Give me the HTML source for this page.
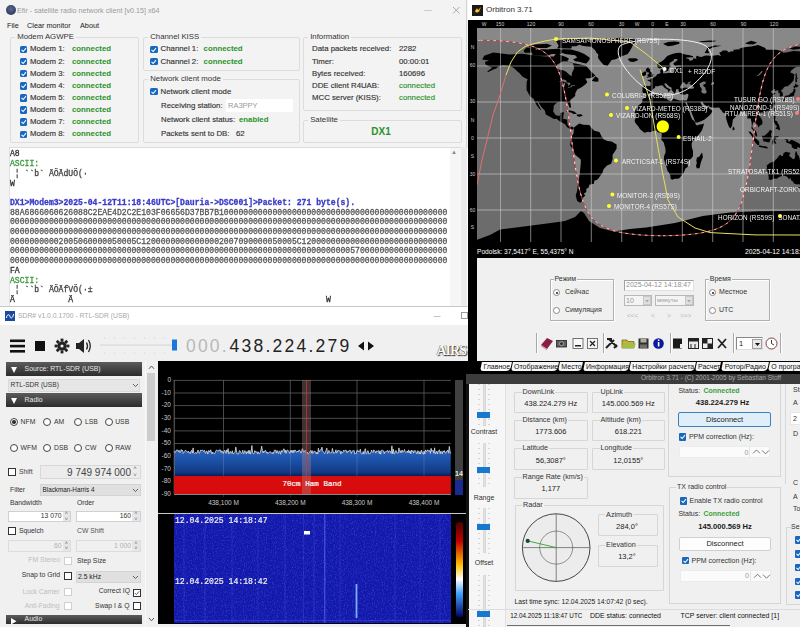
<!DOCTYPE html><html><head><meta charset="utf-8"><style>
html,body{margin:0;padding:0;}
body{width:800px;height:627px;overflow:hidden;position:relative;background:#f0f0f0;font-family:"Liberation Sans",sans-serif;}
body div{position:absolute;box-sizing:border-box;}
svg{position:absolute;}
.mono{font-family:"Liberation Mono",monospace;}
</style></head><body>
<div style="left:0px;top:0px;width:468px;height:306px;background:#f3f3f3;"></div>
<div style="left:466px;top:0px;width:1px;height:306px;background:#d4d4d4;"></div>
<div style="left:6px;top:5px;width:10px;height:10px;border-radius:50%;background:radial-gradient(circle at 50% 40%,#5a6a90,#1e2a4a);"></div>
<div style="left:17px;top:5.82px;font-size:7.2px;line-height:9.36px;color:#9a9a9a;white-space:pre;">Efir - satellite radio network client [v0.15] x64</div>
<div style="left:424px;top:4.8px;font-size:8px;line-height:10.4px;color:#aaa;white-space:pre;">—</div>
<svg style="left:451.75px;top:5.550000000000001px" width="8.5" height="8.5" viewBox="451.75 5.550000000000001 8.5 8.5"><path d="M452.75 6.550000000000001 L459.25 13.05 M459.25 6.550000000000001 L452.75 13.05" stroke="#a0a0a0" stroke-width="0.9"/></svg>
<div style="left:7px;top:20.75px;font-size:7.3px;line-height:9.49px;color:#222;white-space:pre;">File</div>
<div style="left:27px;top:20.75px;font-size:7.3px;line-height:9.49px;color:#222;white-space:pre;">Clear monitor</div>
<div style="left:80px;top:20.75px;font-size:7.3px;line-height:9.49px;color:#222;white-space:pre;">About</div>
<div style="left:10px;top:37px;width:129px;height:106px;border:1px solid #dcdcdc;border-radius:2px;"></div>
<div style="left:15px;top:31.93px;font-size:7.8px;line-height:10.14px;color:#333;white-space:pre;background:#f3f3f3;padding:0 0px;"> Modem AGWPE </div>
<div style="left:19.6px;top:45.75px;width:7.5px;height:7.5px;background:#1868c0;border-radius:1.5px;"><svg width="7.5" height="7.5" viewBox="0 0 10 10" style="left:0;top:0"><path d="M2 5.2 L4.2 7.3 L8 2.8" stroke="#fff" stroke-width="1.4" fill="none"/></svg></div>
<div style="left:30px;top:44.43px;font-size:7.8px;line-height:10.14px;color:#333;white-space:pre;-webkit-text-stroke:0.15px currentColor;">Modem 1:</div>
<div style="left:72px;top:44.43px;font-size:7.8px;line-height:10.14px;color:#2a922a;white-space:pre;font-weight:bold;">connected</div>
<div style="left:19.6px;top:57.87px;width:7.5px;height:7.5px;background:#1868c0;border-radius:1.5px;"><svg width="7.5" height="7.5" viewBox="0 0 10 10" style="left:0;top:0"><path d="M2 5.2 L4.2 7.3 L8 2.8" stroke="#fff" stroke-width="1.4" fill="none"/></svg></div>
<div style="left:30px;top:56.55px;font-size:7.8px;line-height:10.14px;color:#333;white-space:pre;-webkit-text-stroke:0.15px currentColor;">Modem 2:</div>
<div style="left:72px;top:56.55px;font-size:7.8px;line-height:10.14px;color:#2a922a;white-space:pre;font-weight:bold;">connected</div>
<div style="left:19.6px;top:69.99px;width:7.5px;height:7.5px;background:#1868c0;border-radius:1.5px;"><svg width="7.5" height="7.5" viewBox="0 0 10 10" style="left:0;top:0"><path d="M2 5.2 L4.2 7.3 L8 2.8" stroke="#fff" stroke-width="1.4" fill="none"/></svg></div>
<div style="left:30px;top:68.67px;font-size:7.8px;line-height:10.14px;color:#333;white-space:pre;-webkit-text-stroke:0.15px currentColor;">Modem 3:</div>
<div style="left:72px;top:68.67px;font-size:7.8px;line-height:10.14px;color:#2a922a;white-space:pre;font-weight:bold;">connected</div>
<div style="left:19.6px;top:82.11px;width:7.5px;height:7.5px;background:#1868c0;border-radius:1.5px;"><svg width="7.5" height="7.5" viewBox="0 0 10 10" style="left:0;top:0"><path d="M2 5.2 L4.2 7.3 L8 2.8" stroke="#fff" stroke-width="1.4" fill="none"/></svg></div>
<div style="left:30px;top:80.79px;font-size:7.8px;line-height:10.14px;color:#333;white-space:pre;-webkit-text-stroke:0.15px currentColor;">Modem 4:</div>
<div style="left:72px;top:80.79px;font-size:7.8px;line-height:10.14px;color:#2a922a;white-space:pre;font-weight:bold;">connected</div>
<div style="left:19.6px;top:94.22999999999999px;width:7.5px;height:7.5px;background:#1868c0;border-radius:1.5px;"><svg width="7.5" height="7.5" viewBox="0 0 10 10" style="left:0;top:0"><path d="M2 5.2 L4.2 7.3 L8 2.8" stroke="#fff" stroke-width="1.4" fill="none"/></svg></div>
<div style="left:30px;top:92.91px;font-size:7.8px;line-height:10.14px;color:#333;white-space:pre;-webkit-text-stroke:0.15px currentColor;">Modem 5:</div>
<div style="left:72px;top:92.91px;font-size:7.8px;line-height:10.14px;color:#2a922a;white-space:pre;font-weight:bold;">connected</div>
<div style="left:19.6px;top:106.35px;width:7.5px;height:7.5px;background:#1868c0;border-radius:1.5px;"><svg width="7.5" height="7.5" viewBox="0 0 10 10" style="left:0;top:0"><path d="M2 5.2 L4.2 7.3 L8 2.8" stroke="#fff" stroke-width="1.4" fill="none"/></svg></div>
<div style="left:30px;top:105.03px;font-size:7.8px;line-height:10.14px;color:#333;white-space:pre;-webkit-text-stroke:0.15px currentColor;">Modem 6:</div>
<div style="left:72px;top:105.03px;font-size:7.8px;line-height:10.14px;color:#2a922a;white-space:pre;font-weight:bold;">connected</div>
<div style="left:19.6px;top:118.47px;width:7.5px;height:7.5px;background:#1868c0;border-radius:1.5px;"><svg width="7.5" height="7.5" viewBox="0 0 10 10" style="left:0;top:0"><path d="M2 5.2 L4.2 7.3 L8 2.8" stroke="#fff" stroke-width="1.4" fill="none"/></svg></div>
<div style="left:30px;top:117.15px;font-size:7.8px;line-height:10.14px;color:#333;white-space:pre;-webkit-text-stroke:0.15px currentColor;">Modem 7:</div>
<div style="left:72px;top:117.15px;font-size:7.8px;line-height:10.14px;color:#2a922a;white-space:pre;font-weight:bold;">connected</div>
<div style="left:19.6px;top:130.58999999999997px;width:7.5px;height:7.5px;background:#1868c0;border-radius:1.5px;"><svg width="7.5" height="7.5" viewBox="0 0 10 10" style="left:0;top:0"><path d="M2 5.2 L4.2 7.3 L8 2.8" stroke="#fff" stroke-width="1.4" fill="none"/></svg></div>
<div style="left:30px;top:129.27px;font-size:7.8px;line-height:10.14px;color:#333;white-space:pre;-webkit-text-stroke:0.15px currentColor;">Modem 8:</div>
<div style="left:72px;top:129.27px;font-size:7.8px;line-height:10.14px;color:#2a922a;white-space:pre;font-weight:bold;">connected</div>
<div style="left:143px;top:37px;width:157px;height:34px;border:1px solid #dcdcdc;border-radius:2px;"></div>
<div style="left:148px;top:31.93px;font-size:7.8px;line-height:10.14px;color:#333;white-space:pre;background:#f3f3f3;padding:0 0px;"> Channel KISS </div>
<div style="left:150px;top:45.75px;width:7.5px;height:7.5px;background:#1868c0;border-radius:1.5px;"><svg width="7.5" height="7.5" viewBox="0 0 10 10" style="left:0;top:0"><path d="M2 5.2 L4.2 7.3 L8 2.8" stroke="#fff" stroke-width="1.4" fill="none"/></svg></div>
<div style="left:160.6px;top:44.43px;font-size:7.8px;line-height:10.14px;color:#333;white-space:pre;-webkit-text-stroke:0.15px currentColor;">Channel 1:</div>
<div style="left:203.6px;top:44.43px;font-size:7.8px;line-height:10.14px;color:#2a922a;white-space:pre;font-weight:bold;">connected</div>
<div style="left:150px;top:57.87px;width:7.5px;height:7.5px;background:#1868c0;border-radius:1.5px;"><svg width="7.5" height="7.5" viewBox="0 0 10 10" style="left:0;top:0"><path d="M2 5.2 L4.2 7.3 L8 2.8" stroke="#fff" stroke-width="1.4" fill="none"/></svg></div>
<div style="left:160.6px;top:56.55px;font-size:7.8px;line-height:10.14px;color:#333;white-space:pre;-webkit-text-stroke:0.15px currentColor;">Channel 2:</div>
<div style="left:203.6px;top:56.55px;font-size:7.8px;line-height:10.14px;color:#2a922a;white-space:pre;font-weight:bold;">connected</div>
<div style="left:143px;top:79px;width:157px;height:64px;border:1px solid #dcdcdc;border-radius:2px;"></div>
<div style="left:148px;top:73.93px;font-size:7.8px;line-height:10.14px;color:#333;white-space:pre;background:#f3f3f3;padding:0 0px;"> Network client mode </div>
<div style="left:150px;top:87.75px;width:7.5px;height:7.5px;background:#1868c0;border-radius:1.5px;"><svg width="7.5" height="7.5" viewBox="0 0 10 10" style="left:0;top:0"><path d="M2 5.2 L4.2 7.3 L8 2.8" stroke="#fff" stroke-width="1.4" fill="none"/></svg></div>
<div style="left:160.6px;top:86.93px;font-size:7.8px;line-height:10.14px;color:#333;white-space:pre;-webkit-text-stroke:0.15px currentColor;">Network client mode</div>
<div style="left:161px;top:100.93px;font-size:7.8px;line-height:10.14px;color:#333;white-space:pre;-webkit-text-stroke:0.15px currentColor;">Receiving station:</div>
<div style="left:226px;top:99px;width:67px;height:13px;background:#fff;"></div>
<div style="left:228px;top:101.12px;font-size:7.5px;line-height:9.75px;color:#999;white-space:pre;">RA3PPY</div>
<div style="left:161px;top:114.93px;font-size:7.8px;line-height:10.14px;color:#333;white-space:pre;-webkit-text-stroke:0.15px currentColor;">Network client status:</div>
<div style="left:239px;top:114.93px;font-size:7.8px;line-height:10.14px;color:#2a922a;white-space:pre;font-weight:bold;">enabled</div>
<div style="left:161px;top:128.93px;font-size:7.8px;line-height:10.14px;color:#333;white-space:pre;-webkit-text-stroke:0.15px currentColor;">Packets sent to DB:</div>
<div style="left:236px;top:128.93px;font-size:7.8px;line-height:10.14px;color:#333;white-space:pre;-webkit-text-stroke:0.15px currentColor;">62</div>
<div style="left:303px;top:37px;width:159px;height:74px;border:1px solid #dcdcdc;border-radius:2px;"></div>
<div style="left:308px;top:31.93px;font-size:7.8px;line-height:10.14px;color:#333;white-space:pre;background:#f3f3f3;padding:0 0px;"> Information </div>
<div style="left:312px;top:44.43px;font-size:7.8px;line-height:10.14px;color:#333;white-space:pre;-webkit-text-stroke:0.15px currentColor;">Data packets received:</div>
<div style="left:399px;top:44.43px;font-size:7.8px;line-height:10.14px;color:#333;white-space:pre;-webkit-text-stroke:0.15px currentColor;">2282</div>
<div style="left:312px;top:56.55px;font-size:7.8px;line-height:10.14px;color:#333;white-space:pre;-webkit-text-stroke:0.15px currentColor;">Timer:</div>
<div style="left:399px;top:56.55px;font-size:7.8px;line-height:10.14px;color:#333;white-space:pre;-webkit-text-stroke:0.15px currentColor;">00:00:01</div>
<div style="left:312px;top:68.67px;font-size:7.8px;line-height:10.14px;color:#333;white-space:pre;-webkit-text-stroke:0.15px currentColor;">Bytes received:</div>
<div style="left:399px;top:68.67px;font-size:7.8px;line-height:10.14px;color:#333;white-space:pre;-webkit-text-stroke:0.15px currentColor;">160696</div>
<div style="left:312px;top:80.79px;font-size:7.8px;line-height:10.14px;color:#333;white-space:pre;-webkit-text-stroke:0.15px currentColor;">DDE client R4UAB:</div>
<div style="left:399px;top:80.79px;font-size:7.8px;line-height:10.14px;color:#2a922a;white-space:pre;-webkit-text-stroke:0.15px currentColor;">connected</div>
<div style="left:312px;top:92.91px;font-size:7.8px;line-height:10.14px;color:#333;white-space:pre;-webkit-text-stroke:0.15px currentColor;">MCC server (KISS):</div>
<div style="left:399px;top:92.91px;font-size:7.8px;line-height:10.14px;color:#2a922a;white-space:pre;-webkit-text-stroke:0.15px currentColor;">connected</div>
<div style="left:303px;top:120px;width:159px;height:23px;border:1px solid #dcdcdc;border-radius:2px;"></div>
<div style="left:308px;top:114.93px;font-size:7.8px;line-height:10.14px;color:#333;white-space:pre;background:#f3f3f3;padding:0 0px;"> Satellite </div>
<div style="left:231px;width:300px;text-align:center;top:125.0px;font-size:10px;line-height:13.0px;color:#2a922a;white-space:pre;font-weight:bold;">DX1</div>
<div style="left:9px;top:147px;width:459px;height:159px;background:#ffffff;border-left:1px solid #e2e2e2;border-top:1px solid #dcdcdc;"></div>
<div style="left:450px;top:148px;width:10.5px;height:158px;background:#f6f6f6;"></div>
<div style="left:460.5px;top:147px;width:6.5px;height:159px;background:#ebebeb;"></div>
<div style="left:451px;top:148.6px;font-size:6px;line-height:7.8px;color:#888;white-space:pre;">▲</div>
<div style="left:10.4px;top:150.4px;font-size:8.3333px;line-height:9.6px;color:#333;white-space:pre;font-family:Liberation Mono,monospace;transform:scaleX(0.9725);transform-origin:0 50%;-webkit-text-stroke:0.3px currentColor;">A8</div>
<div style="left:10.4px;top:160.1px;font-size:8.3333px;line-height:9.6px;color:#3a9a3a;white-space:pre;font-family:Liberation Mono,monospace;transform:scaleX(0.9725);transform-origin:0 50%;-webkit-text-stroke:0.3px currentColor;">ASCII:</div>
<div style="left:10.4px;top:169.8px;font-size:8.3333px;line-height:9.6px;color:#444;white-space:pre;font-family:Liberation Mono,monospace;transform:scaleX(0.9725);transform-origin:0 50%;-webkit-text-stroke:0.3px currentColor;"> ¦ ``b` ÄÖÄdUÖ(·</div>
<div style="left:10.4px;top:179.5px;font-size:8.3333px;line-height:9.6px;color:#333;white-space:pre;font-family:Liberation Mono,monospace;transform:scaleX(0.9725);transform-origin:0 50%;-webkit-text-stroke:0.3px currentColor;">W</div>
<div style="left:10.4px;top:189.2px;font-size:8.3333px;line-height:9.6px;color:#333;white-space:pre;font-family:Liberation Mono,monospace;transform:scaleX(0.9725);transform-origin:0 50%;-webkit-text-stroke:0.3px currentColor;"></div>
<div style="left:10.4px;top:198.9px;font-size:8.3333px;line-height:9.6px;color:#3a3ac8;white-space:pre;font-weight:bold;font-family:Liberation Mono,monospace;transform:scaleX(0.9725);transform-origin:0 50%;-webkit-text-stroke:0.3px currentColor;">DX1&gt;Modem3&gt;2025-04-12T11:18:46UTC&gt;[Dauria-&gt;DSC001]&gt;Packet: 271 byte(s).</div>
<div style="left:10.4px;top:208.6px;font-size:8.3333px;line-height:9.6px;color:#555;white-space:pre;font-family:Liberation Mono,monospace;transform:scaleX(0.9725);transform-origin:0 50%;-webkit-text-stroke:0.3px currentColor;">88A6866060626088C2EAE4D2C2E103F06656D37BB7B10000000000000000000000000000000000000000000000</div>
<div style="left:10.4px;top:218.3px;font-size:8.3333px;line-height:9.6px;color:#555;white-space:pre;font-family:Liberation Mono,monospace;transform:scaleX(0.9725);transform-origin:0 50%;-webkit-text-stroke:0.3px currentColor;">000000000000000000000000000000000000000000000000000000000000000000000000000000000000000000</div>
<div style="left:10.4px;top:228.0px;font-size:8.3333px;line-height:9.6px;color:#555;white-space:pre;font-family:Liberation Mono,monospace;transform:scaleX(0.9725);transform-origin:0 50%;-webkit-text-stroke:0.3px currentColor;">000000000000000000000000000000000000000000000000000000000000000000000000000000000000000000</div>
<div style="left:10.4px;top:237.7px;font-size:8.3333px;line-height:9.6px;color:#555;white-space:pre;font-family:Liberation Mono,monospace;transform:scaleX(0.9725);transform-origin:0 50%;-webkit-text-stroke:0.3px currentColor;">00000000002005060000050005C12000000000000002007090000050005C120000000000000000000000000000</div>
<div style="left:10.4px;top:247.4px;font-size:8.3333px;line-height:9.6px;color:#555;white-space:pre;font-family:Liberation Mono,monospace;transform:scaleX(0.9725);transform-origin:0 50%;-webkit-text-stroke:0.3px currentColor;">000000000000000000000000000000000000000000000000000000000000000000000057000000000000000000</div>
<div style="left:10.4px;top:257.1px;font-size:8.3333px;line-height:9.6px;color:#555;white-space:pre;font-family:Liberation Mono,monospace;transform:scaleX(0.9725);transform-origin:0 50%;-webkit-text-stroke:0.3px currentColor;">000000000000000000000000000000000000000000000000000000000000000000000000000000000000000000</div>
<div style="left:10.4px;top:266.8px;font-size:8.3333px;line-height:9.6px;color:#333;white-space:pre;font-family:Liberation Mono,monospace;transform:scaleX(0.9725);transform-origin:0 50%;-webkit-text-stroke:0.3px currentColor;">FA</div>
<div style="left:10.4px;top:276.5px;font-size:8.3333px;line-height:9.6px;color:#3a9a3a;white-space:pre;font-family:Liberation Mono,monospace;transform:scaleX(0.9725);transform-origin:0 50%;-webkit-text-stroke:0.3px currentColor;">ASCII:</div>
<div style="left:10.4px;top:286.2px;font-size:8.3333px;line-height:9.6px;color:#444;white-space:pre;font-family:Liberation Mono,monospace;transform:scaleX(0.9725);transform-origin:0 50%;-webkit-text-stroke:0.3px currentColor;"> ¦ ``b` ÄÖÄfVÖ(·±</div>
<div style="left:10.4px;top:295.9px;font-size:8.3333px;line-height:9.6px;color:#333;white-space:pre;font-family:Liberation Mono,monospace;transform:scaleX(0.9725);transform-origin:0 50%;-webkit-text-stroke:0.3px currentColor;">Ä           Ä                                                    W</div>
<div style="left:468px;top:0px;width:332px;height:20px;background:#ffffff;"></div>
<svg style="left:472px;top:5px" width="11" height="11" viewBox="0 0 11 11"><rect width="11" height="11" fill="#1a1a1a"/><path d="M2 8 L5 3 L6 5 L9 2 L7 7 L4 6Z" fill="#f0a020"/><circle cx="5" cy="6" r="1.5" fill="#ffd040"/></svg>
<div style="left:486px;top:4.8px;font-size:8px;line-height:10.4px;color:#333;white-space:pre;">Orbitron 3.71</div>
<div style="left:468px;top:20px;width:332px;height:238px;background:#000;"></div>
<svg style="left:477px;top:28px" width="323" height="214" viewBox="0 0 323 214"><rect width="323" height="214" fill="#888888"/><path d="M367.4 2.0 L367.4 2.3 L367.4 2.6 L367.4 2.9 L367.4 3.2 L367.4 3.5 L367.4 3.8 L367.4 4.1 L367.4 4.4 L367.4 4.7 L367.4 5.0 L367.4 5.3 L367.4 5.6 L367.4 5.9 L367.4 6.2 L367.4 6.5 L367.4 6.8 L367.4 7.1 L367.4 7.4 L367.4 7.7 L367.4 8.0 L367.4 8.3 L367.4 8.6 L367.4 8.9 L367.4 9.2 L367.4 9.5 L367.4 9.8 L367.4 10.1 L367.4 10.4 L367.4 10.7 L367.4 11.0 L367.4 11.3 L367.4 11.6 L367.4 11.9 L367.4 12.2 L356.6 12.5 L349.9 12.8 L345.4 13.1 L341.8 13.4 L338.7 13.7 L336.1 14.0 L333.8 14.3 L331.7 14.6 L329.8 14.9 L328.0 15.2 L326.4 15.5 L324.9 15.8 L323.6 16.1 L322.3 16.4 L321.0 16.7 L319.9 17.0 L318.8 17.3 L317.8 17.6 L316.8 17.9 L315.9 18.2 L315.0 18.5 L314.2 18.8 L313.4 19.1 L312.6 19.4 L311.8 19.7 L311.1 20.0 L310.5 20.3 L309.8 20.6 L309.2 20.9 L308.6 21.2 L308.0 21.5 L307.4 21.8 L306.9 22.1 L306.4 22.4 L305.9 22.7 L305.4 23.0 L304.9 23.3 L304.4 23.6 L304.0 23.9 L303.6 24.2 L303.2 24.5 L302.7 24.8 L302.3 25.1 L302.0 25.4 L301.6 25.7 L301.2 26.0 L300.9 26.3 L300.5 26.6 L300.2 26.9 L299.9 27.2 L299.5 27.5 L299.2 27.8 L298.9 28.1 L298.6 28.4 L298.3 28.7 L298.1 29.0 L297.8 29.3 L297.5 29.6 L297.2 29.9 L297.0 30.2 L296.7 30.5 L296.5 30.8 L296.2 31.1 L296.0 31.4 L295.8 31.7 L295.5 32.0 L295.3 32.3 L295.1 32.6 L294.9 32.9 L294.7 33.2 L294.5 33.5 L294.3 33.8 L294.1 34.1 L293.9 34.4 L293.7 34.7 L293.5 35.0 L293.3 35.3 L293.1 35.6 L292.9 35.9 L292.8 36.2 L292.6 36.5 L292.4 36.8 L292.2 37.1 L292.1 37.4 L291.9 37.7 L291.8 38.0 L291.6 38.3 L291.4 38.6 L291.3 38.9 L291.1 39.2 L291.0 39.5 L290.8 39.8 L290.7 40.1 L290.6 40.4 L290.4 40.7 L290.3 41.0 L290.2 41.3 L290.0 41.6 L289.9 41.9 L289.8 42.2 L289.6 42.5 L289.5 42.8 L289.4 43.1 L289.3 43.4 L289.1 43.7 L289.0 44.0 L288.9 44.3 L288.8 44.6 L288.7 44.9 L288.5 45.2 L288.4 45.5 L288.3 45.8 L288.2 46.1 L288.1 46.4 L288.0 46.7 L287.9 47.0 L287.8 47.3 L287.7 47.6 L287.6 47.9 L287.5 48.2 L287.4 48.5 L287.3 48.8 L287.2 49.1 L287.1 49.4 L287.0 49.7 L286.9 50.0 L286.8 50.3 L286.7 50.6 L286.6 50.9 L286.5 51.2 L286.4 51.5 L286.4 51.8 L286.3 52.1 L286.2 52.4 L286.1 52.7 L286.0 53.0 L285.9 53.3 L285.8 53.6 L285.8 53.9 L285.7 54.2 L285.6 54.5 L285.5 54.8 L285.4 55.1 L285.4 55.4 L285.3 55.7 L285.2 56.0 L285.1 56.3 L285.0 56.6 L285.0 56.9 L284.9 57.2 L284.8 57.5 L284.7 57.8 L284.7 58.1 L284.6 58.4 L284.5 58.7 L284.5 59.0 L284.4 59.3 L284.3 59.6 L284.2 59.9 L284.2 60.2 L284.1 60.5 L284.0 60.8 L284.0 61.1 L283.9 61.4 L283.8 61.7 L283.8 62.0 L283.7 62.3 L283.6 62.6 L283.6 62.9 L283.5 63.2 L283.5 63.5 L283.4 63.8 L283.3 64.1 L283.3 64.4 L283.2 64.7 L283.1 65.0 L283.1 65.3 L283.0 65.6 L283.0 65.9 L282.9 66.2 L282.8 66.5 L282.8 66.8 L282.7 67.1 L282.7 67.4 L282.6 67.7 L282.5 68.0 L282.5 68.3 L282.4 68.6 L282.4 68.9 L282.3 69.2 L282.3 69.5 L282.2 69.8 L282.2 70.1 L282.1 70.4 L282.0 70.7 L282.0 71.0 L281.9 71.3 L281.9 71.6 L281.8 71.9 L281.8 72.2 L281.7 72.5 L281.7 72.8 L281.6 73.1 L281.6 73.4 L281.5 73.7 L281.5 74.0 L281.4 74.3 L281.4 74.6 L281.3 74.9 L281.3 75.2 L281.2 75.5 L281.2 75.8 L281.1 76.1 L281.1 76.4 L281.0 76.7 L281.0 77.0 L280.9 77.3 L280.9 77.6 L280.8 77.9 L280.8 78.2 L280.7 78.5 L280.7 78.8 L280.6 79.1 L280.6 79.4 L280.5 79.7 L280.5 80.0 L280.4 80.3 L280.4 80.6 L280.4 80.9 L280.3 81.2 L280.3 81.5 L280.2 81.8 L280.2 82.1 L280.1 82.4 L280.1 82.7 L280.0 83.0 L280.0 83.3 L279.9 83.6 L279.9 83.9 L279.9 84.2 L279.8 84.5 L279.8 84.8 L279.7 85.1 L279.7 85.4 L279.6 85.7 L279.6 86.0 L279.6 86.3 L279.5 86.6 L279.5 86.9 L279.4 87.2 L279.4 87.5 L279.3 87.8 L279.3 88.1 L279.3 88.4 L279.2 88.7 L279.2 89.0 L279.1 89.3 L279.1 89.6 L279.0 89.9 L279.0 90.2 L279.0 90.5 L278.9 90.8 L278.9 91.1 L278.8 91.4 L278.8 91.7 L278.8 92.0 L278.7 92.3 L278.7 92.6 L278.6 92.9 L278.6 93.2 L278.5 93.5 L278.5 93.8 L278.5 94.1 L278.4 94.4 L278.4 94.7 L278.3 95.0 L278.3 95.3 L278.3 95.6 L278.2 95.9 L278.2 96.2 L278.1 96.5 L278.1 96.8 L278.1 97.1 L278.0 97.4 L278.0 97.7 L277.9 98.0 L277.9 98.3 L277.9 98.6 L277.8 98.9 L277.8 99.2 L277.8 99.5 L277.7 99.8 L277.7 100.1 L277.6 100.4 L277.6 100.7 L277.6 101.0 L277.5 101.3 L277.5 101.6 L277.4 101.9 L277.4 102.2 L277.4 102.5 L277.3 102.8 L277.3 103.1 L277.2 103.4 L277.2 103.7 L277.2 104.0 L277.1 104.3 L277.1 104.6 L277.1 104.9 L277.0 105.2 L277.0 105.5 L276.9 105.8 L276.9 106.1 L276.9 106.4 L276.8 106.7 L276.8 107.0 L276.7 107.3 L276.7 107.6 L276.7 107.9 L276.6 108.2 L276.6 108.5 L276.6 108.8 L276.5 109.1 L276.5 109.4 L276.4 109.7 L276.4 110.0 L276.4 110.3 L276.3 110.6 L276.3 110.9 L276.3 111.2 L276.2 111.5 L276.2 111.8 L276.1 112.1 L276.1 112.4 L276.1 112.7 L276.0 113.0 L276.0 113.3 L275.9 113.6 L275.9 113.9 L275.9 114.2 L275.8 114.5 L275.8 114.8 L275.8 115.1 L275.7 115.4 L275.7 115.7 L275.6 116.0 L275.6 116.3 L275.6 116.6 L275.5 116.9 L275.5 117.2 L275.4 117.5 L275.4 117.8 L275.4 118.1 L275.3 118.4 L275.3 118.7 L275.2 119.0 L275.2 119.3 L275.2 119.6 L275.1 119.9 L275.1 120.2 L275.1 120.5 L275.0 120.8 L275.0 121.1 L274.9 121.4 L274.9 121.7 L274.9 122.0 L274.8 122.3 L274.8 122.6 L274.7 122.9 L274.7 123.2 L274.7 123.5 L274.6 123.8 L274.6 124.1 L274.5 124.4 L274.5 124.7 L274.5 125.0 L274.4 125.3 L274.4 125.6 L274.3 125.9 L274.3 126.2 L274.3 126.5 L274.2 126.8 L274.2 127.1 L274.1 127.4 L274.1 127.7 L274.1 128.0 L274.0 128.3 L274.0 128.6 L273.9 128.9 L273.9 129.2 L273.8 129.5 L273.8 129.8 L273.8 130.1 L273.7 130.4 L273.7 130.7 L273.6 131.0 L273.6 131.3 L273.6 131.6 L273.5 131.9 L273.5 132.2 L273.4 132.5 L273.4 132.8 L273.3 133.1 L273.3 133.4 L273.3 133.7 L273.2 134.0 L273.2 134.3 L273.1 134.6 L273.1 134.9 L273.0 135.2 L273.0 135.5 L273.0 135.8 L272.9 136.1 L272.9 136.4 L272.8 136.7 L272.8 137.0 L272.7 137.3 L272.7 137.6 L272.6 137.9 L272.6 138.2 L272.5 138.5 L272.5 138.8 L272.5 139.1 L272.4 139.4 L272.4 139.7 L272.3 140.0 L272.3 140.3 L272.2 140.6 L272.2 140.9 L272.1 141.2 L272.1 141.5 L272.0 141.8 L272.0 142.1 L271.9 142.4 L271.9 142.7 L271.8 143.0 L271.8 143.3 L271.7 143.6 L271.7 143.9 L271.6 144.2 L271.6 144.5 L271.5 144.8 L271.5 145.1 L271.4 145.4 L271.4 145.7 L271.3 146.0 L271.3 146.3 L271.2 146.6 L271.2 146.9 L271.1 147.2 L271.1 147.5 L271.0 147.8 L271.0 148.1 L270.9 148.4 L270.9 148.7 L270.8 149.0 L270.8 149.3 L270.7 149.6 L270.7 149.9 L270.6 150.2 L270.5 150.5 L270.5 150.8 L270.4 151.1 L270.4 151.4 L270.3 151.7 L270.3 152.0 L270.2 152.3 L270.1 152.6 L270.1 152.9 L270.0 153.2 L270.0 153.5 L269.9 153.8 L269.8 154.1 L269.8 154.4 L269.7 154.7 L269.7 155.0 L269.6 155.3 L269.5 155.6 L269.5 155.9 L269.4 156.2 L269.4 156.5 L269.3 156.8 L269.2 157.1 L269.2 157.4 L269.1 157.7 L269.0 158.0 L269.0 158.3 L268.9 158.6 L268.8 158.9 L268.8 159.2 L268.7 159.5 L268.6 159.8 L268.6 160.1 L268.5 160.4 L268.4 160.7 L268.3 161.0 L268.3 161.3 L268.2 161.6 L268.1 161.9 L268.1 162.2 L268.0 162.5 L267.9 162.8 L267.8 163.1 L267.8 163.4 L267.7 163.7 L267.6 164.0 L267.5 164.3 L267.5 164.6 L267.4 164.9 L267.3 165.2 L267.2 165.5 L267.1 165.8 L267.1 166.1 L267.0 166.4 L266.9 166.7 L266.8 167.0 L266.7 167.3 L266.6 167.6 L266.5 167.9 L266.5 168.2 L266.4 168.5 L266.3 168.8 L266.2 169.1 L266.1 169.4 L266.0 169.7 L265.9 170.0 L265.8 170.3 L265.7 170.6 L265.6 170.9 L265.5 171.2 L265.4 171.5 L265.3 171.8 L265.2 172.1 L265.1 172.4 L265.0 172.7 L264.9 173.0 L264.8 173.3 L264.7 173.6 L264.6 173.9 L264.5 174.2 L264.4 174.5 L264.3 174.8 L264.1 175.1 L264.0 175.4 L263.9 175.7 L263.8 176.0 L263.7 176.3 L263.6 176.6 L263.4 176.9 L263.3 177.2 L263.2 177.5 L263.0 177.8 L262.9 178.1 L262.8 178.4 L262.7 178.7 L262.5 179.0 L262.4 179.3 L262.2 179.6 L262.1 179.9 L262.0 180.2 L261.8 180.5 L261.7 180.8 L261.5 181.1 L261.4 181.4 L261.2 181.7 L261.1 182.0 L260.9 182.3 L260.7 182.6 L260.6 182.9 L260.4 183.2 L260.2 183.5 L260.1 183.8 L259.9 184.1 L259.7 184.4 L259.5 184.7 L259.3 185.0 L259.1 185.3 L258.9 185.6 L258.8 185.9 L258.6 186.2 L258.3 186.5 L258.1 186.8 L257.9 187.1 L257.7 187.4 L257.5 187.7 L257.3 188.0 L257.0 188.3 L256.8 188.6 L256.6 188.9 L256.3 189.2 L256.1 189.5 L255.8 189.8 L255.6 190.1 L255.3 190.4 L255.0 190.7 L254.8 191.0 L254.5 191.3 L254.2 191.6 L253.9 191.9 L253.6 192.2 L253.3 192.5 L252.9 192.8 L252.6 193.1 L252.3 193.4 L251.9 193.7 L251.6 194.0 L251.2 194.3 L250.8 194.6 L250.5 194.9 L250.1 195.2 L249.7 195.5 L249.2 195.8 L248.8 196.1 L248.4 196.4 L247.9 196.7 L247.4 197.0 L246.9 197.3 L246.4 197.6 L245.9 197.9 L245.4 198.2 L244.8 198.5 L244.2 198.8 L243.6 199.1 L243.0 199.4 L242.3 199.7 L241.7 200.0 L241.0 200.3 L240.2 200.6 L239.5 200.9 L238.7 201.2 L237.8 201.5 L236.9 201.8 L236.0 202.1 L235.0 202.4 L234.0 202.7 L232.9 203.0 L231.8 203.3 L230.5 203.6 L229.2 203.9 L227.9 204.2 L226.4 204.5 L224.8 204.8 L223.0 205.1 L221.1 205.4 L219.0 205.7 L216.7 206.0 L214.1 206.3 L211.0 206.6 L207.4 206.9 L202.9 207.2 L196.2 207.5 L185.4 207.8 L185.4 208.1 L185.4 208.4 L185.4 208.7 L185.4 209.0 L185.4 209.3 L185.4 209.6 L185.4 209.9 L185.4 210.2 L185.4 210.5 L185.4 210.8 L185.4 211.1 L185.4 211.4 L185.4 211.7 L185.4 212.0 L185.4 212.3 L185.4 212.6 L185.4 212.9 L185.4 213.2 L185.4 213.5 L185.4 213.8 L185.4 214.1 L185.4 214.4 L185.4 214.7 L185.4 215.0 L185.4 215.3 L185.4 215.6 L185.4 215.9 L185.4 216.2 L185.4 216.5 L185.4 216.8 L185.4 217.1 L185.4 217.4 L185.4 217.7 L185.4 218.0 L549.4 218.0 L549.4 217.7 L549.4 217.4 L549.4 217.1 L549.4 216.8 L549.4 216.5 L549.4 216.2 L549.4 215.9 L549.4 215.6 L549.4 215.3 L549.4 215.0 L549.4 214.7 L549.4 214.4 L549.4 214.1 L549.4 213.8 L549.4 213.5 L549.4 213.2 L549.4 212.9 L549.4 212.6 L549.4 212.3 L549.4 212.0 L549.4 211.7 L549.4 211.4 L549.4 211.1 L549.4 210.8 L549.4 210.5 L549.4 210.2 L549.4 209.9 L549.4 209.6 L549.4 209.3 L549.4 209.0 L549.4 208.7 L549.4 208.4 L549.4 208.1 L549.4 207.8 L538.5 207.5 L531.9 207.2 L527.4 206.9 L523.7 206.6 L520.7 206.3 L518.1 206.0 L515.8 205.7 L513.7 205.4 L511.8 205.1 L510.0 204.8 L508.4 204.5 L506.9 204.2 L505.5 203.9 L504.2 203.6 L503.0 203.3 L501.9 203.0 L500.8 202.7 L499.8 202.4 L498.8 202.1 L497.9 201.8 L497.0 201.5 L496.1 201.2 L495.3 200.9 L494.6 200.6 L493.8 200.3 L493.1 200.0 L492.4 199.7 L491.8 199.4 L491.2 199.1 L490.6 198.8 L490.0 198.5 L489.4 198.2 L488.9 197.9 L488.4 197.6 L487.9 197.3 L487.4 197.0 L486.9 196.7 L486.4 196.4 L486.0 196.1 L485.6 195.8 L485.1 195.5 L484.7 195.2 L484.3 194.9 L483.9 194.6 L483.6 194.3 L483.2 194.0 L482.9 193.7 L482.5 193.4 L482.2 193.1 L481.8 192.8 L481.5 192.5 L481.2 192.2 L480.9 191.9 L480.6 191.6 L480.3 191.3 L480.0 191.0 L479.8 190.7 L479.5 190.4 L479.2 190.1 L479.0 189.8 L478.7 189.5 L478.5 189.2 L478.2 188.9 L478.0 188.6 L477.7 188.3 L477.5 188.0 L477.3 187.7 L477.1 187.4 L476.9 187.1 L476.6 186.8 L476.4 186.5 L476.2 186.2 L476.0 185.9 L475.8 185.6 L475.6 185.3 L475.5 185.0 L475.3 184.7 L475.1 184.4 L474.9 184.1 L474.7 183.8 L474.6 183.5 L474.4 183.2 L474.2 182.9 L474.1 182.6 L473.9 182.3 L473.7 182.0 L473.6 181.7 L473.4 181.4 L473.3 181.1 L473.1 180.8 L473.0 180.5 L472.8 180.2 L472.7 179.9 L472.5 179.6 L472.4 179.3 L472.3 179.0 L472.1 178.7 L472.0 178.4 L471.9 178.1 L471.7 177.8 L471.6 177.5 L471.5 177.2 L471.4 176.9 L471.2 176.6 L471.1 176.3 L471.0 176.0 L470.9 175.7 L470.8 175.4 L470.6 175.1 L470.5 174.8 L470.4 174.5 L470.3 174.2 L470.2 173.9 L470.1 173.6 L470.0 173.3 L469.9 173.0 L469.8 172.7 L469.7 172.4 L469.6 172.1 L469.5 171.8 L469.4 171.5 L469.3 171.2 L469.2 170.9 L469.1 170.6 L469.0 170.3 L468.9 170.0 L468.8 169.7 L468.7 169.4 L468.6 169.1 L468.5 168.8 L468.4 168.5 L468.3 168.2 L468.2 167.9 L468.2 167.6 L468.1 167.3 L468.0 167.0 L467.9 166.7 L467.8 166.4 L467.7 166.1 L467.7 165.8 L467.6 165.5 L467.5 165.2 L467.4 164.9 L467.3 164.6 L467.3 164.3 L467.2 164.0 L467.1 163.7 L467.0 163.4 L466.9 163.1 L466.9 162.8 L466.8 162.5 L466.7 162.2 L466.7 161.9 L466.6 161.6 L466.5 161.3 L466.4 161.0 L466.4 160.7 L466.3 160.4 L466.2 160.1 L466.2 159.8 L466.1 159.5 L466.0 159.2 L466.0 158.9 L465.9 158.6 L465.8 158.3 L465.8 158.0 L465.7 157.7 L465.6 157.4 L465.6 157.1 L465.5 156.8 L465.4 156.5 L465.4 156.2 L465.3 155.9 L465.2 155.6 L465.2 155.3 L465.1 155.0 L465.1 154.7 L465.0 154.4 L464.9 154.1 L464.9 153.8 L464.8 153.5 L464.8 153.2 L464.7 152.9 L464.6 152.6 L464.6 152.3 L464.5 152.0 L464.5 151.7 L464.4 151.4 L464.4 151.1 L464.3 150.8 L464.2 150.5 L464.2 150.2 L464.1 149.9 L464.1 149.6 L464.0 149.3 L464.0 149.0 L463.9 148.7 L463.9 148.4 L463.8 148.1 L463.8 147.8 L463.7 147.5 L463.7 147.2 L463.6 146.9 L463.6 146.6 L463.5 146.3 L463.4 146.0 L463.4 145.7 L463.3 145.4 L463.3 145.1 L463.2 144.8 L463.2 144.5 L463.1 144.2 L463.1 143.9 L463.0 143.6 L463.0 143.3 L462.9 143.0 L462.9 142.7 L462.9 142.4 L462.8 142.1 L462.8 141.8 L462.7 141.5 L462.7 141.2 L462.6 140.9 L462.6 140.6 L462.5 140.3 L462.5 140.0 L462.4 139.7 L462.4 139.4 L462.3 139.1 L462.3 138.8 L462.2 138.5 L462.2 138.2 L462.1 137.9 L462.1 137.6 L462.1 137.3 L462.0 137.0 L462.0 136.7 L461.9 136.4 L461.9 136.1 L461.8 135.8 L461.8 135.5 L461.7 135.2 L461.7 134.9 L461.7 134.6 L461.6 134.3 L461.6 134.0 L461.5 133.7 L461.5 133.4 L461.4 133.1 L461.4 132.8 L461.4 132.5 L461.3 132.2 L461.3 131.9 L461.2 131.6 L461.2 131.3 L461.1 131.0 L461.1 130.7 L461.1 130.4 L461.0 130.1 L461.0 129.8 L460.9 129.5 L460.9 129.2 L460.9 128.9 L460.8 128.6 L460.8 128.3 L460.7 128.0 L460.7 127.7 L460.6 127.4 L460.6 127.1 L460.6 126.8 L460.5 126.5 L460.5 126.2 L460.4 125.9 L460.4 125.6 L460.4 125.3 L460.3 125.0 L460.3 124.7 L460.2 124.4 L460.2 124.1 L460.2 123.8 L460.1 123.5 L460.1 123.2 L460.0 122.9 L460.0 122.6 L460.0 122.3 L459.9 122.0 L459.9 121.7 L459.8 121.4 L459.8 121.1 L459.8 120.8 L459.7 120.5 L459.7 120.2 L459.7 119.9 L459.6 119.6 L459.6 119.3 L459.5 119.0 L459.5 118.7 L459.5 118.4 L459.4 118.1 L459.4 117.8 L459.3 117.5 L459.3 117.2 L459.3 116.9 L459.2 116.6 L459.2 116.3 L459.1 116.0 L459.1 115.7 L459.1 115.4 L459.0 115.1 L459.0 114.8 L459.0 114.5 L458.9 114.2 L458.9 113.9 L458.8 113.6 L458.8 113.3 L458.8 113.0 L458.7 112.7 L458.7 112.4 L458.7 112.1 L458.6 111.8 L458.6 111.5 L458.5 111.2 L458.5 110.9 L458.5 110.6 L458.4 110.3 L458.4 110.0 L458.3 109.7 L458.3 109.4 L458.3 109.1 L458.2 108.8 L458.2 108.5 L458.2 108.2 L458.1 107.9 L458.1 107.6 L458.0 107.3 L458.0 107.0 L458.0 106.7 L457.9 106.4 L457.9 106.1 L457.8 105.8 L457.8 105.5 L457.8 105.2 L457.7 104.9 L457.7 104.6 L457.7 104.3 L457.6 104.0 L457.6 103.7 L457.5 103.4 L457.5 103.1 L457.5 102.8 L457.4 102.5 L457.4 102.2 L457.3 101.9 L457.3 101.6 L457.3 101.3 L457.2 101.0 L457.2 100.7 L457.2 100.4 L457.1 100.1 L457.1 99.8 L457.0 99.5 L457.0 99.2 L457.0 98.9 L456.9 98.6 L456.9 98.3 L456.8 98.0 L456.8 97.7 L456.8 97.4 L456.7 97.1 L456.7 96.8 L456.6 96.5 L456.6 96.2 L456.6 95.9 L456.5 95.6 L456.5 95.3 L456.4 95.0 L456.4 94.7 L456.4 94.4 L456.3 94.1 L456.3 93.8 L456.2 93.5 L456.2 93.2 L456.2 92.9 L456.1 92.6 L456.1 92.3 L456.0 92.0 L456.0 91.7 L456.0 91.4 L455.9 91.1 L455.9 90.8 L455.8 90.5 L455.8 90.2 L455.7 89.9 L455.7 89.6 L455.7 89.3 L455.6 89.0 L455.6 88.7 L455.5 88.4 L455.5 88.1 L455.5 87.8 L455.4 87.5 L455.4 87.2 L455.3 86.9 L455.3 86.6 L455.2 86.3 L455.2 86.0 L455.1 85.7 L455.1 85.4 L455.1 85.1 L455.0 84.8 L455.0 84.5 L454.9 84.2 L454.9 83.9 L454.8 83.6 L454.8 83.3 L454.8 83.0 L454.7 82.7 L454.7 82.4 L454.6 82.1 L454.6 81.8 L454.5 81.5 L454.5 81.2 L454.4 80.9 L454.4 80.6 L454.3 80.3 L454.3 80.0 L454.2 79.7 L454.2 79.4 L454.2 79.1 L454.1 78.8 L454.1 78.5 L454.0 78.2 L454.0 77.9 L453.9 77.6 L453.9 77.3 L453.8 77.0 L453.8 76.7 L453.7 76.4 L453.7 76.1 L453.6 75.8 L453.6 75.5 L453.5 75.2 L453.5 74.9 L453.4 74.6 L453.4 74.3 L453.3 74.0 L453.3 73.7 L453.2 73.4 L453.2 73.1 L453.1 72.8 L453.1 72.5 L453.0 72.2 L453.0 71.9 L452.9 71.6 L452.8 71.3 L452.8 71.0 L452.7 70.7 L452.7 70.4 L452.6 70.1 L452.6 69.8 L452.5 69.5 L452.5 69.2 L452.4 68.9 L452.4 68.6 L452.3 68.3 L452.2 68.0 L452.2 67.7 L452.1 67.4 L452.1 67.1 L452.0 66.8 L451.9 66.5 L451.9 66.2 L451.8 65.9 L451.8 65.6 L451.7 65.3 L451.6 65.0 L451.6 64.7 L451.5 64.4 L451.5 64.1 L451.4 63.8 L451.3 63.5 L451.3 63.2 L451.2 62.9 L451.1 62.6 L451.1 62.3 L451.0 62.0 L450.9 61.7 L450.9 61.4 L450.8 61.1 L450.7 60.8 L450.7 60.5 L450.6 60.2 L450.5 59.9 L450.5 59.6 L450.4 59.3 L450.3 59.0 L450.3 58.7 L450.2 58.4 L450.1 58.1 L450.0 57.8 L450.0 57.5 L449.9 57.2 L449.8 56.9 L449.7 56.6 L449.7 56.3 L449.6 56.0 L449.5 55.7 L449.4 55.4 L449.4 55.1 L449.3 54.8 L449.2 54.5 L449.1 54.2 L449.0 53.9 L448.9 53.6 L448.9 53.3 L448.8 53.0 L448.7 52.7 L448.6 52.4 L448.5 52.1 L448.4 51.8 L448.3 51.5 L448.3 51.2 L448.2 50.9 L448.1 50.6 L448.0 50.3 L447.9 50.0 L447.8 49.7 L447.7 49.4 L447.6 49.1 L447.5 48.8 L447.4 48.5 L447.3 48.2 L447.2 47.9 L447.1 47.6 L447.0 47.3 L446.9 47.0 L446.8 46.7 L446.7 46.4 L446.6 46.1 L446.5 45.8 L446.3 45.5 L446.2 45.2 L446.1 44.9 L446.0 44.6 L445.9 44.3 L445.8 44.0 L445.7 43.7 L445.5 43.4 L445.4 43.1 L445.3 42.8 L445.2 42.5 L445.0 42.2 L444.9 41.9 L444.8 41.6 L444.6 41.3 L444.5 41.0 L444.4 40.7 L444.2 40.4 L444.1 40.1 L443.9 39.8 L443.8 39.5 L443.6 39.2 L443.5 38.9 L443.3 38.6 L443.2 38.3 L443.0 38.0 L442.9 37.7 L442.7 37.4 L442.5 37.1 L442.4 36.8 L442.2 36.5 L442.0 36.2 L441.9 35.9 L441.7 35.6 L441.5 35.3 L441.3 35.0 L441.1 34.7 L440.9 34.4 L440.7 34.1 L440.5 33.8 L440.3 33.5 L440.1 33.2 L439.9 32.9 L439.7 32.6 L439.5 32.3 L439.3 32.0 L439.0 31.7 L438.8 31.4 L438.6 31.1 L438.3 30.8 L438.1 30.5 L437.8 30.2 L437.5 29.9 L437.3 29.6 L437.0 29.3 L436.7 29.0 L436.4 28.7 L436.2 28.4 L435.9 28.1 L435.6 27.8 L435.2 27.5 L434.9 27.2 L434.6 26.9 L434.3 26.6 L433.9 26.3 L433.6 26.0 L433.2 25.7 L432.8 25.4 L432.4 25.1 L432.0 24.8 L431.6 24.5 L431.2 24.2 L430.8 23.9 L430.3 23.6 L429.9 23.3 L429.4 23.0 L428.9 22.7 L428.4 22.4 L427.9 22.1 L427.3 21.8 L426.8 21.5 L426.2 21.2 L425.6 20.9 L425.0 20.6 L424.3 20.3 L423.6 20.0 L422.9 19.7 L422.2 19.4 L421.4 19.1 L420.6 18.8 L419.8 18.5 L418.9 18.2 L418.0 17.9 L417.0 17.6 L416.0 17.3 L414.9 17.0 L413.7 16.7 L412.5 16.4 L411.2 16.1 L409.8 15.8 L408.3 15.5 L406.7 15.2 L405.0 14.9 L403.1 14.6 L401.0 14.3 L398.7 14.0 L396.0 13.7 L393.0 13.4 L389.4 13.1 L384.9 12.8 L378.2 12.5 L367.4 12.2 L367.4 11.9 L367.4 11.6 L367.4 11.3 L367.4 11.0 L367.4 10.7 L367.4 10.4 L367.4 10.1 L367.4 9.8 L367.4 9.5 L367.4 9.2 L367.4 8.9 L367.4 8.6 L367.4 8.3 L367.4 8.0 L367.4 7.7 L367.4 7.4 L367.4 7.1 L367.4 6.8 L367.4 6.5 L367.4 6.2 L367.4 5.9 L367.4 5.6 L367.4 5.3 L367.4 5.0 L367.4 4.7 L367.4 4.4 L367.4 4.1 L367.4 3.8 L367.4 3.5 L367.4 3.2 L367.4 2.9 L367.4 2.6 L367.4 2.3 L367.4 2.0Z" fill="#000" fill-opacity="0.2"/><path d="M3.4 2.0 L3.4 2.3 L3.4 2.6 L3.4 2.9 L3.4 3.2 L3.4 3.5 L3.4 3.8 L3.4 4.1 L3.4 4.4 L3.4 4.7 L3.4 5.0 L3.4 5.3 L3.4 5.6 L3.4 5.9 L3.4 6.2 L3.4 6.5 L3.4 6.8 L3.4 7.1 L3.4 7.4 L3.4 7.7 L3.4 8.0 L3.4 8.3 L3.4 8.6 L3.4 8.9 L3.4 9.2 L3.4 9.5 L3.4 9.8 L3.4 10.1 L3.4 10.4 L3.4 10.7 L3.4 11.0 L3.4 11.3 L3.4 11.6 L3.4 11.9 L3.4 12.2 L-7.4 12.5 L-14.0 12.8 L-18.6 13.1 L-22.2 13.4 L-25.2 13.7 L-27.8 14.0 L-30.2 14.3 L-32.3 14.6 L-34.2 14.9 L-35.9 15.2 L-37.5 15.5 L-39.0 15.8 L-40.4 16.1 L-41.7 16.4 L-42.9 16.7 L-44.1 17.0 L-45.2 17.3 L-46.2 17.6 L-47.2 17.9 L-48.1 18.2 L-49.0 18.5 L-49.8 18.8 L-50.6 19.1 L-51.4 19.4 L-52.1 19.7 L-52.8 20.0 L-53.5 20.3 L-54.1 20.6 L-54.8 20.9 L-55.4 21.2 L-56.0 21.5 L-56.5 21.8 L-57.1 22.1 L-57.6 22.4 L-58.1 22.7 L-58.6 23.0 L-59.1 23.3 L-59.5 23.6 L-60.0 23.9 L-60.4 24.2 L-60.8 24.5 L-61.2 24.8 L-61.6 25.1 L-62.0 25.4 L-62.4 25.7 L-62.7 26.0 L-63.1 26.3 L-63.4 26.6 L-63.8 26.9 L-64.1 27.2 L-64.4 27.5 L-64.7 27.8 L-65.0 28.1 L-65.3 28.4 L-65.6 28.7 L-65.9 29.0 L-66.2 29.3 L-66.5 29.6 L-66.7 29.9 L-67.0 30.2 L-67.2 30.5 L-67.5 30.8 L-67.7 31.1 L-68.0 31.4 L-68.2 31.7 L-68.4 32.0 L-68.6 32.3 L-68.9 32.6 L-69.1 32.9 L-69.3 33.2 L-69.5 33.5 L-69.7 33.8 L-69.9 34.1 L-70.1 34.4 L-70.3 34.7 L-70.5 35.0 L-70.7 35.3 L-70.8 35.6 L-71.0 35.9 L-71.2 36.2 L-71.4 36.5 L-71.5 36.8 L-71.7 37.1 L-71.9 37.4 L-72.0 37.7 L-72.2 38.0 L-72.4 38.3 L-72.5 38.6 L-72.7 38.9 L-72.8 39.2 L-73.0 39.5 L-73.1 39.8 L-73.3 40.1 L-73.4 40.4 L-73.5 40.7 L-73.7 41.0 L-73.8 41.3 L-73.9 41.6 L-74.1 41.9 L-74.2 42.2 L-74.3 42.5 L-74.5 42.8 L-74.6 43.1 L-74.7 43.4 L-74.8 43.7 L-74.9 44.0 L-75.1 44.3 L-75.2 44.6 L-75.3 44.9 L-75.4 45.2 L-75.5 45.5 L-75.6 45.8 L-75.7 46.1 L-75.9 46.4 L-76.0 46.7 L-76.1 47.0 L-76.2 47.3 L-76.3 47.6 L-76.4 47.9 L-76.5 48.2 L-76.6 48.5 L-76.7 48.8 L-76.8 49.1 L-76.9 49.4 L-77.0 49.7 L-77.1 50.0 L-77.2 50.3 L-77.2 50.6 L-77.3 50.9 L-77.4 51.2 L-77.5 51.5 L-77.6 51.8 L-77.7 52.1 L-77.8 52.4 L-77.9 52.7 L-78.0 53.0 L-78.0 53.3 L-78.1 53.6 L-78.2 53.9 L-78.3 54.2 L-78.4 54.5 L-78.4 54.8 L-78.5 55.1 L-78.6 55.4 L-78.7 55.7 L-78.8 56.0 L-78.8 56.3 L-78.9 56.6 L-79.0 56.9 L-79.1 57.2 L-79.1 57.5 L-79.2 57.8 L-79.3 58.1 L-79.4 58.4 L-79.4 58.7 L-79.5 59.0 L-79.6 59.3 L-79.6 59.6 L-79.7 59.9 L-79.8 60.2 L-79.9 60.5 L-79.9 60.8 L-80.0 61.1 L-80.1 61.4 L-80.1 61.7 L-80.2 62.0 L-80.3 62.3 L-80.3 62.6 L-80.4 62.9 L-80.4 63.2 L-80.5 63.5 L-80.6 63.8 L-80.6 64.1 L-80.7 64.4 L-80.8 64.7 L-80.8 65.0 L-80.9 65.3 L-80.9 65.6 L-81.0 65.9 L-81.1 66.2 L-81.1 66.5 L-81.2 66.8 L-81.2 67.1 L-81.3 67.4 L-81.4 67.7 L-81.4 68.0 L-81.5 68.3 L-81.5 68.6 L-81.6 68.9 L-81.6 69.2 L-81.7 69.5 L-81.7 69.8 L-81.8 70.1 L-81.9 70.4 L-81.9 70.7 L-82.0 71.0 L-82.0 71.3 L-82.1 71.6 L-82.1 71.9 L-82.2 72.2 L-82.2 72.5 L-82.3 72.8 L-82.3 73.1 L-82.4 73.4 L-82.4 73.7 L-82.5 74.0 L-82.5 74.3 L-82.6 74.6 L-82.6 74.9 L-82.7 75.2 L-82.7 75.5 L-82.8 75.8 L-82.8 76.1 L-82.9 76.4 L-82.9 76.7 L-83.0 77.0 L-83.0 77.3 L-83.1 77.6 L-83.1 77.9 L-83.2 78.2 L-83.2 78.5 L-83.3 78.8 L-83.3 79.1 L-83.4 79.4 L-83.4 79.7 L-83.5 80.0 L-83.5 80.3 L-83.6 80.6 L-83.6 80.9 L-83.7 81.2 L-83.7 81.5 L-83.7 81.8 L-83.8 82.1 L-83.8 82.4 L-83.9 82.7 L-83.9 83.0 L-84.0 83.3 L-84.0 83.6 L-84.1 83.9 L-84.1 84.2 L-84.1 84.5 L-84.2 84.8 L-84.2 85.1 L-84.3 85.4 L-84.3 85.7 L-84.4 86.0 L-84.4 86.3 L-84.5 86.6 L-84.5 86.9 L-84.5 87.2 L-84.6 87.5 L-84.6 87.8 L-84.7 88.1 L-84.7 88.4 L-84.8 88.7 L-84.8 89.0 L-84.8 89.3 L-84.9 89.6 L-84.9 89.9 L-85.0 90.2 L-85.0 90.5 L-85.0 90.8 L-85.1 91.1 L-85.1 91.4 L-85.2 91.7 L-85.2 92.0 L-85.2 92.3 L-85.3 92.6 L-85.3 92.9 L-85.4 93.2 L-85.4 93.5 L-85.5 93.8 L-85.5 94.1 L-85.5 94.4 L-85.6 94.7 L-85.6 95.0 L-85.7 95.3 L-85.7 95.6 L-85.7 95.9 L-85.8 96.2 L-85.8 96.5 L-85.9 96.8 L-85.9 97.1 L-85.9 97.4 L-86.0 97.7 L-86.0 98.0 L-86.1 98.3 L-86.1 98.6 L-86.1 98.9 L-86.2 99.2 L-86.2 99.5 L-86.2 99.8 L-86.3 100.1 L-86.3 100.4 L-86.4 100.7 L-86.4 101.0 L-86.4 101.3 L-86.5 101.6 L-86.5 101.9 L-86.6 102.2 L-86.6 102.5 L-86.6 102.8 L-86.7 103.1 L-86.7 103.4 L-86.8 103.7 L-86.8 104.0 L-86.8 104.3 L-86.9 104.6 L-86.9 104.9 L-86.9 105.2 L-87.0 105.5 L-87.0 105.8 L-87.1 106.1 L-87.1 106.4 L-87.1 106.7 L-87.2 107.0 L-87.2 107.3 L-87.3 107.6 L-87.3 107.9 L-87.3 108.2 L-87.4 108.5 L-87.4 108.8 L-87.4 109.1 L-87.5 109.4 L-87.5 109.7 L-87.6 110.0 L-87.6 110.3 L-87.6 110.6 L-87.7 110.9 L-87.7 111.2 L-87.7 111.5 L-87.8 111.8 L-87.8 112.1 L-87.9 112.4 L-87.9 112.7 L-87.9 113.0 L-88.0 113.3 L-88.0 113.6 L-88.1 113.9 L-88.1 114.2 L-88.1 114.5 L-88.2 114.8 L-88.2 115.1 L-88.2 115.4 L-88.3 115.7 L-88.3 116.0 L-88.4 116.3 L-88.4 116.6 L-88.4 116.9 L-88.5 117.2 L-88.5 117.5 L-88.6 117.8 L-88.6 118.1 L-88.6 118.4 L-88.7 118.7 L-88.7 119.0 L-88.7 119.3 L-88.8 119.6 L-88.8 119.9 L-88.9 120.2 L-88.9 120.5 L-88.9 120.8 L-89.0 121.1 L-89.0 121.4 L-89.1 121.7 L-89.1 122.0 L-89.1 122.3 L-89.2 122.6 L-89.2 122.9 L-89.3 123.2 L-89.3 123.5 L-89.3 123.8 L-89.4 124.1 L-89.4 124.4 L-89.5 124.7 L-89.5 125.0 L-89.5 125.3 L-89.6 125.6 L-89.6 125.9 L-89.7 126.2 L-89.7 126.5 L-89.7 126.8 L-89.8 127.1 L-89.8 127.4 L-89.9 127.7 L-89.9 128.0 L-89.9 128.3 L-90.0 128.6 L-90.0 128.9 L-90.1 129.2 L-90.1 129.5 L-90.2 129.8 L-90.2 130.1 L-90.2 130.4 L-90.3 130.7 L-90.3 131.0 L-90.4 131.3 L-90.4 131.6 L-90.4 131.9 L-90.5 132.2 L-90.5 132.5 L-90.6 132.8 L-90.6 133.1 L-90.7 133.4 L-90.7 133.7 L-90.7 134.0 L-90.8 134.3 L-90.8 134.6 L-90.9 134.9 L-90.9 135.2 L-91.0 135.5 L-91.0 135.8 L-91.1 136.1 L-91.1 136.4 L-91.1 136.7 L-91.2 137.0 L-91.2 137.3 L-91.3 137.6 L-91.3 137.9 L-91.4 138.2 L-91.4 138.5 L-91.5 138.8 L-91.5 139.1 L-91.6 139.4 L-91.6 139.7 L-91.6 140.0 L-91.7 140.3 L-91.7 140.6 L-91.8 140.9 L-91.8 141.2 L-91.9 141.5 L-91.9 141.8 L-92.0 142.1 L-92.0 142.4 L-92.1 142.7 L-92.1 143.0 L-92.2 143.3 L-92.2 143.6 L-92.3 143.9 L-92.3 144.2 L-92.4 144.5 L-92.4 144.8 L-92.5 145.1 L-92.5 145.4 L-92.6 145.7 L-92.6 146.0 L-92.7 146.3 L-92.7 146.6 L-92.8 146.9 L-92.8 147.2 L-92.9 147.5 L-92.9 147.8 L-93.0 148.1 L-93.0 148.4 L-93.1 148.7 L-93.1 149.0 L-93.2 149.3 L-93.3 149.6 L-93.3 149.9 L-93.4 150.2 L-93.4 150.5 L-93.5 150.8 L-93.5 151.1 L-93.6 151.4 L-93.6 151.7 L-93.7 152.0 L-93.8 152.3 L-93.8 152.6 L-93.9 152.9 L-93.9 153.2 L-94.0 153.5 L-94.1 153.8 L-94.1 154.1 L-94.2 154.4 L-94.2 154.7 L-94.3 155.0 L-94.4 155.3 L-94.4 155.6 L-94.5 155.9 L-94.5 156.2 L-94.6 156.5 L-94.7 156.8 L-94.7 157.1 L-94.8 157.4 L-94.9 157.7 L-94.9 158.0 L-95.0 158.3 L-95.1 158.6 L-95.1 158.9 L-95.2 159.2 L-95.3 159.5 L-95.3 159.8 L-95.4 160.1 L-95.5 160.4 L-95.5 160.7 L-95.6 161.0 L-95.7 161.3 L-95.8 161.6 L-95.8 161.9 L-95.9 162.2 L-96.0 162.5 L-96.0 162.8 L-96.1 163.1 L-96.2 163.4 L-96.3 163.7 L-96.4 164.0 L-96.4 164.3 L-96.5 164.6 L-96.6 164.9 L-96.7 165.2 L-96.7 165.5 L-96.8 165.8 L-96.9 166.1 L-97.0 166.4 L-97.1 166.7 L-97.2 167.0 L-97.2 167.3 L-97.3 167.6 L-97.4 167.9 L-97.5 168.2 L-97.6 168.5 L-97.7 168.8 L-97.8 169.1 L-97.9 169.4 L-98.0 169.7 L-98.1 170.0 L-98.1 170.3 L-98.2 170.6 L-98.3 170.9 L-98.4 171.2 L-98.5 171.5 L-98.6 171.8 L-98.7 172.1 L-98.8 172.4 L-98.9 172.7 L-99.0 173.0 L-99.2 173.3 L-99.3 173.6 L-99.4 173.9 L-99.5 174.2 L-99.6 174.5 L-99.7 174.8 L-99.8 175.1 L-99.9 175.4 L-100.0 175.7 L-100.2 176.0 L-100.3 176.3 L-100.4 176.6 L-100.5 176.9 L-100.7 177.2 L-100.8 177.5 L-100.9 177.8 L-101.0 178.1 L-101.2 178.4 L-101.3 178.7 L-101.4 179.0 L-101.6 179.3 L-101.7 179.6 L-101.9 179.9 L-102.0 180.2 L-102.1 180.5 L-102.3 180.8 L-102.4 181.1 L-102.6 181.4 L-102.8 181.7 L-102.9 182.0 L-103.1 182.3 L-103.2 182.6 L-103.4 182.9 L-103.6 183.2 L-103.7 183.5 L-103.9 183.8 L-104.1 184.1 L-104.3 184.4 L-104.4 184.7 L-104.6 185.0 L-104.8 185.3 L-105.0 185.6 L-105.2 185.9 L-105.4 186.2 L-105.6 186.5 L-105.8 186.8 L-106.0 187.1 L-106.2 187.4 L-106.5 187.7 L-106.7 188.0 L-106.9 188.3 L-107.2 188.6 L-107.4 188.9 L-107.6 189.2 L-107.9 189.5 L-108.1 189.8 L-108.4 190.1 L-108.7 190.4 L-108.9 190.7 L-109.2 191.0 L-109.5 191.3 L-109.8 191.6 L-110.1 191.9 L-110.4 192.2 L-110.7 192.5 L-111.0 192.8 L-111.3 193.1 L-111.7 193.4 L-112.0 193.7 L-112.4 194.0 L-112.7 194.3 L-113.1 194.6 L-113.5 194.9 L-113.9 195.2 L-114.3 195.5 L-114.7 195.8 L-115.2 196.1 L-115.6 196.4 L-116.1 196.7 L-116.5 197.0 L-117.0 197.3 L-117.5 197.6 L-118.1 197.9 L-118.6 198.2 L-119.2 198.5 L-119.7 198.8 L-120.3 199.1 L-121.0 199.4 L-121.6 199.7 L-122.3 200.0 L-123.0 200.3 L-123.7 200.6 L-124.5 200.9 L-125.3 201.2 L-126.2 201.5 L-127.0 201.8 L-128.0 202.1 L-128.9 202.4 L-130.0 202.7 L-131.0 203.0 L-132.2 203.3 L-133.4 203.6 L-134.7 203.9 L-136.1 204.2 L-137.6 204.5 L-139.2 204.8 L-140.9 205.1 L-142.8 205.4 L-144.9 205.7 L-147.3 206.0 L-149.9 206.3 L-152.9 206.6 L-156.5 206.9 L-161.1 207.2 L-167.7 207.5 L-178.5 207.8 L-178.5 208.1 L-178.5 208.4 L-178.5 208.7 L-178.5 209.0 L-178.5 209.3 L-178.5 209.6 L-178.5 209.9 L-178.5 210.2 L-178.5 210.5 L-178.5 210.8 L-178.5 211.1 L-178.5 211.4 L-178.5 211.7 L-178.5 212.0 L-178.5 212.3 L-178.5 212.6 L-178.5 212.9 L-178.5 213.2 L-178.5 213.5 L-178.5 213.8 L-178.5 214.1 L-178.5 214.4 L-178.5 214.7 L-178.5 215.0 L-178.5 215.3 L-178.5 215.6 L-178.5 215.9 L-178.5 216.2 L-178.5 216.5 L-178.5 216.8 L-178.5 217.1 L-178.5 217.4 L-178.5 217.7 L-178.5 218.0 L185.4 218.0 L185.4 217.7 L185.4 217.4 L185.4 217.1 L185.4 216.8 L185.4 216.5 L185.4 216.2 L185.4 215.9 L185.4 215.6 L185.4 215.3 L185.4 215.0 L185.4 214.7 L185.4 214.4 L185.4 214.1 L185.4 213.8 L185.4 213.5 L185.4 213.2 L185.4 212.9 L185.4 212.6 L185.4 212.3 L185.4 212.0 L185.4 211.7 L185.4 211.4 L185.4 211.1 L185.4 210.8 L185.4 210.5 L185.4 210.2 L185.4 209.9 L185.4 209.6 L185.4 209.3 L185.4 209.0 L185.4 208.7 L185.4 208.4 L185.4 208.1 L185.4 207.8 L174.6 207.5 L167.9 207.2 L163.4 206.9 L159.8 206.6 L156.8 206.3 L154.1 206.0 L151.8 205.7 L149.7 205.4 L147.8 205.1 L146.1 204.8 L144.5 204.5 L143.0 204.2 L141.6 203.9 L140.3 203.6 L139.1 203.3 L137.9 203.0 L136.8 202.7 L135.8 202.4 L134.8 202.1 L133.9 201.8 L133.0 201.5 L132.2 201.2 L131.4 200.9 L130.6 200.6 L129.9 200.3 L129.2 200.0 L128.5 199.7 L127.8 199.4 L127.2 199.1 L126.6 198.8 L126.0 198.5 L125.5 198.2 L124.9 197.9 L124.4 197.6 L123.9 197.3 L123.4 197.0 L122.9 196.7 L122.5 196.4 L122.0 196.1 L121.6 195.8 L121.2 195.5 L120.8 195.2 L120.4 194.9 L120.0 194.6 L119.6 194.3 L119.2 194.0 L118.9 193.7 L118.5 193.4 L118.2 193.1 L117.9 192.8 L117.6 192.5 L117.2 192.2 L116.9 191.9 L116.6 191.6 L116.4 191.3 L116.1 191.0 L115.8 190.7 L115.5 190.4 L115.3 190.1 L115.0 189.8 L114.7 189.5 L114.5 189.2 L114.3 188.9 L114.0 188.6 L113.8 188.3 L113.6 188.0 L113.3 187.7 L113.1 187.4 L112.9 187.1 L112.7 186.8 L112.5 186.5 L112.3 186.2 L112.1 185.9 L111.9 185.6 L111.7 185.3 L111.5 185.0 L111.3 184.7 L111.1 184.4 L111.0 184.1 L110.8 183.8 L110.6 183.5 L110.4 183.2 L110.3 182.9 L110.1 182.6 L109.9 182.3 L109.8 182.0 L109.6 181.7 L109.5 181.4 L109.3 181.1 L109.2 180.8 L109.0 180.5 L108.9 180.2 L108.7 179.9 L108.6 179.6 L108.4 179.3 L108.3 179.0 L108.2 178.7 L108.0 178.4 L107.9 178.1 L107.8 177.8 L107.6 177.5 L107.5 177.2 L107.4 176.9 L107.3 176.6 L107.2 176.3 L107.0 176.0 L106.9 175.7 L106.8 175.4 L106.7 175.1 L106.6 174.8 L106.5 174.5 L106.3 174.2 L106.2 173.9 L106.1 173.6 L106.0 173.3 L105.9 173.0 L105.8 172.7 L105.7 172.4 L105.6 172.1 L105.5 171.8 L105.4 171.5 L105.3 171.2 L105.2 170.9 L105.1 170.6 L105.0 170.3 L104.9 170.0 L104.8 169.7 L104.7 169.4 L104.6 169.1 L104.6 168.8 L104.5 168.5 L104.4 168.2 L104.3 167.9 L104.2 167.6 L104.1 167.3 L104.0 167.0 L103.9 166.7 L103.9 166.4 L103.8 166.1 L103.7 165.8 L103.6 165.5 L103.5 165.2 L103.5 164.9 L103.4 164.6 L103.3 164.3 L103.2 164.0 L103.1 163.7 L103.1 163.4 L103.0 163.1 L102.9 162.8 L102.8 162.5 L102.8 162.2 L102.7 161.9 L102.6 161.6 L102.5 161.3 L102.5 161.0 L102.4 160.7 L102.3 160.4 L102.3 160.1 L102.2 159.8 L102.1 159.5 L102.1 159.2 L102.0 158.9 L101.9 158.6 L101.9 158.3 L101.8 158.0 L101.7 157.7 L101.7 157.4 L101.6 157.1 L101.5 156.8 L101.5 156.5 L101.4 156.2 L101.3 155.9 L101.3 155.6 L101.2 155.3 L101.2 155.0 L101.1 154.7 L101.0 154.4 L101.0 154.1 L100.9 153.8 L100.9 153.5 L100.8 153.2 L100.7 152.9 L100.7 152.6 L100.6 152.3 L100.6 152.0 L100.5 151.7 L100.5 151.4 L100.4 151.1 L100.3 150.8 L100.3 150.5 L100.2 150.2 L100.2 149.9 L100.1 149.6 L100.1 149.3 L100.0 149.0 L100.0 148.7 L99.9 148.4 L99.9 148.1 L99.8 147.8 L99.7 147.5 L99.7 147.2 L99.6 146.9 L99.6 146.6 L99.5 146.3 L99.5 146.0 L99.4 145.7 L99.4 145.4 L99.3 145.1 L99.3 144.8 L99.2 144.5 L99.2 144.2 L99.1 143.9 L99.1 143.6 L99.0 143.3 L99.0 143.0 L98.9 142.7 L98.9 142.4 L98.8 142.1 L98.8 141.8 L98.7 141.5 L98.7 141.2 L98.7 140.9 L98.6 140.6 L98.6 140.3 L98.5 140.0 L98.5 139.7 L98.4 139.4 L98.4 139.1 L98.3 138.8 L98.3 138.5 L98.2 138.2 L98.2 137.9 L98.1 137.6 L98.1 137.3 L98.1 137.0 L98.0 136.7 L98.0 136.4 L97.9 136.1 L97.9 135.8 L97.8 135.5 L97.8 135.2 L97.7 134.9 L97.7 134.6 L97.7 134.3 L97.6 134.0 L97.6 133.7 L97.5 133.4 L97.5 133.1 L97.4 132.8 L97.4 132.5 L97.4 132.2 L97.3 131.9 L97.3 131.6 L97.2 131.3 L97.2 131.0 L97.1 130.7 L97.1 130.4 L97.1 130.1 L97.0 129.8 L97.0 129.5 L96.9 129.2 L96.9 128.9 L96.9 128.6 L96.8 128.3 L96.8 128.0 L96.7 127.7 L96.7 127.4 L96.6 127.1 L96.6 126.8 L96.6 126.5 L96.5 126.2 L96.5 125.9 L96.4 125.6 L96.4 125.3 L96.4 125.0 L96.3 124.7 L96.3 124.4 L96.2 124.1 L96.2 123.8 L96.2 123.5 L96.1 123.2 L96.1 122.9 L96.0 122.6 L96.0 122.3 L96.0 122.0 L95.9 121.7 L95.9 121.4 L95.9 121.1 L95.8 120.8 L95.8 120.5 L95.7 120.2 L95.7 119.9 L95.7 119.6 L95.6 119.3 L95.6 119.0 L95.5 118.7 L95.5 118.4 L95.5 118.1 L95.4 117.8 L95.4 117.5 L95.3 117.2 L95.3 116.9 L95.3 116.6 L95.2 116.3 L95.2 116.0 L95.2 115.7 L95.1 115.4 L95.1 115.1 L95.0 114.8 L95.0 114.5 L95.0 114.2 L94.9 113.9 L94.9 113.6 L94.8 113.3 L94.8 113.0 L94.8 112.7 L94.7 112.4 L94.7 112.1 L94.7 111.8 L94.6 111.5 L94.6 111.2 L94.5 110.9 L94.5 110.6 L94.5 110.3 L94.4 110.0 L94.4 109.7 L94.3 109.4 L94.3 109.1 L94.3 108.8 L94.2 108.5 L94.2 108.2 L94.2 107.9 L94.1 107.6 L94.1 107.3 L94.0 107.0 L94.0 106.7 L94.0 106.4 L93.9 106.1 L93.9 105.8 L93.8 105.5 L93.8 105.2 L93.8 104.9 L93.7 104.6 L93.7 104.3 L93.7 104.0 L93.6 103.7 L93.6 103.4 L93.5 103.1 L93.5 102.8 L93.5 102.5 L93.4 102.2 L93.4 101.9 L93.3 101.6 L93.3 101.3 L93.3 101.0 L93.2 100.7 L93.2 100.4 L93.2 100.1 L93.1 99.8 L93.1 99.5 L93.0 99.2 L93.0 98.9 L93.0 98.6 L92.9 98.3 L92.9 98.0 L92.8 97.7 L92.8 97.4 L92.8 97.1 L92.7 96.8 L92.7 96.5 L92.6 96.2 L92.6 95.9 L92.6 95.6 L92.5 95.3 L92.5 95.0 L92.4 94.7 L92.4 94.4 L92.4 94.1 L92.3 93.8 L92.3 93.5 L92.2 93.2 L92.2 92.9 L92.2 92.6 L92.1 92.3 L92.1 92.0 L92.0 91.7 L92.0 91.4 L92.0 91.1 L91.9 90.8 L91.9 90.5 L91.8 90.2 L91.8 89.9 L91.7 89.6 L91.7 89.3 L91.7 89.0 L91.6 88.7 L91.6 88.4 L91.5 88.1 L91.5 87.8 L91.4 87.5 L91.4 87.2 L91.4 86.9 L91.3 86.6 L91.3 86.3 L91.2 86.0 L91.2 85.7 L91.1 85.4 L91.1 85.1 L91.1 84.8 L91.0 84.5 L91.0 84.2 L90.9 83.9 L90.9 83.6 L90.8 83.3 L90.8 83.0 L90.7 82.7 L90.7 82.4 L90.7 82.1 L90.6 81.8 L90.6 81.5 L90.5 81.2 L90.5 80.9 L90.4 80.6 L90.4 80.3 L90.3 80.0 L90.3 79.7 L90.2 79.4 L90.2 79.1 L90.1 78.8 L90.1 78.5 L90.1 78.2 L90.0 77.9 L90.0 77.6 L89.9 77.3 L89.9 77.0 L89.8 76.7 L89.8 76.4 L89.7 76.1 L89.7 75.8 L89.6 75.5 L89.6 75.2 L89.5 74.9 L89.5 74.6 L89.4 74.3 L89.4 74.0 L89.3 73.7 L89.3 73.4 L89.2 73.1 L89.2 72.8 L89.1 72.5 L89.0 72.2 L89.0 71.9 L88.9 71.6 L88.9 71.3 L88.8 71.0 L88.8 70.7 L88.7 70.4 L88.7 70.1 L88.6 69.8 L88.6 69.5 L88.5 69.2 L88.4 68.9 L88.4 68.6 L88.3 68.3 L88.3 68.0 L88.2 67.7 L88.2 67.4 L88.1 67.1 L88.0 66.8 L88.0 66.5 L87.9 66.2 L87.9 65.9 L87.8 65.6 L87.7 65.3 L87.7 65.0 L87.6 64.7 L87.6 64.4 L87.5 64.1 L87.4 63.8 L87.4 63.5 L87.3 63.2 L87.2 62.9 L87.2 62.6 L87.1 62.3 L87.1 62.0 L87.0 61.7 L86.9 61.4 L86.9 61.1 L86.8 60.8 L86.7 60.5 L86.6 60.2 L86.6 59.9 L86.5 59.6 L86.4 59.3 L86.4 59.0 L86.3 58.7 L86.2 58.4 L86.2 58.1 L86.1 57.8 L86.0 57.5 L85.9 57.2 L85.9 56.9 L85.8 56.6 L85.7 56.3 L85.6 56.0 L85.6 55.7 L85.5 55.4 L85.4 55.1 L85.3 54.8 L85.2 54.5 L85.2 54.2 L85.1 53.9 L85.0 53.6 L84.9 53.3 L84.8 53.0 L84.7 52.7 L84.6 52.4 L84.6 52.1 L84.5 51.8 L84.4 51.5 L84.3 51.2 L84.2 50.9 L84.1 50.6 L84.0 50.3 L83.9 50.0 L83.8 49.7 L83.7 49.4 L83.6 49.1 L83.5 48.8 L83.4 48.5 L83.3 48.2 L83.2 47.9 L83.1 47.6 L83.0 47.3 L82.9 47.0 L82.8 46.7 L82.7 46.4 L82.6 46.1 L82.5 45.8 L82.4 45.5 L82.3 45.2 L82.2 44.9 L82.0 44.6 L81.9 44.3 L81.8 44.0 L81.7 43.7 L81.6 43.4 L81.4 43.1 L81.3 42.8 L81.2 42.5 L81.1 42.2 L80.9 41.9 L80.8 41.6 L80.7 41.3 L80.5 41.0 L80.4 40.7 L80.3 40.4 L80.1 40.1 L80.0 39.8 L79.8 39.5 L79.7 39.2 L79.5 38.9 L79.4 38.6 L79.2 38.3 L79.1 38.0 L78.9 37.7 L78.7 37.4 L78.6 37.1 L78.4 36.8 L78.2 36.5 L78.1 36.2 L77.9 35.9 L77.7 35.6 L77.5 35.3 L77.3 35.0 L77.2 34.7 L77.0 34.4 L76.8 34.1 L76.6 33.8 L76.4 33.5 L76.2 33.2 L75.9 32.9 L75.7 32.6 L75.5 32.3 L75.3 32.0 L75.1 31.7 L74.8 31.4 L74.6 31.1 L74.3 30.8 L74.1 30.5 L73.8 30.2 L73.6 29.9 L73.3 29.6 L73.1 29.3 L72.8 29.0 L72.5 28.7 L72.2 28.4 L71.9 28.1 L71.6 27.8 L71.3 27.5 L71.0 27.2 L70.6 26.9 L70.3 26.6 L70.0 26.3 L69.6 26.0 L69.2 25.7 L68.9 25.4 L68.5 25.1 L68.1 24.8 L67.7 24.5 L67.3 24.2 L66.8 23.9 L66.4 23.6 L65.9 23.3 L65.4 23.0 L65.0 22.7 L64.4 22.4 L63.9 22.1 L63.4 21.8 L62.8 21.5 L62.2 21.2 L61.6 20.9 L61.0 20.6 L60.4 20.3 L59.7 20.0 L59.0 19.7 L58.2 19.4 L57.5 19.1 L56.7 18.8 L55.8 18.5 L54.9 18.2 L54.0 17.9 L53.0 17.6 L52.0 17.3 L50.9 17.0 L49.8 16.7 L48.6 16.4 L47.3 16.1 L45.9 15.8 L44.4 15.5 L42.8 15.2 L41.0 14.9 L39.1 14.6 L37.0 14.3 L34.7 14.0 L32.1 13.7 L29.1 13.4 L25.5 13.1 L20.9 12.8 L14.3 12.5 L3.4 12.2 L3.4 11.9 L3.4 11.6 L3.4 11.3 L3.4 11.0 L3.4 10.7 L3.4 10.4 L3.4 10.1 L3.4 9.8 L3.4 9.5 L3.4 9.2 L3.4 8.9 L3.4 8.6 L3.4 8.3 L3.4 8.0 L3.4 7.7 L3.4 7.4 L3.4 7.1 L3.4 6.8 L3.4 6.5 L3.4 6.2 L3.4 5.9 L3.4 5.6 L3.4 5.3 L3.4 5.0 L3.4 4.7 L3.4 4.4 L3.4 4.1 L3.4 3.8 L3.4 3.5 L3.4 3.2 L3.4 2.9 L3.4 2.6 L3.4 2.3 L3.4 2.0Z" fill="#000" fill-opacity="0.2"/><path d="M5.2 31.4 L7.2 27.8 L16.3 24.6 L32.4 26.4 L45.6 25.8 L58.7 27.8 L68.8 28.4 L76.9 28.4 L80.0 24.2 L84.0 27.2 L89.1 29.0 L92.1 30.8 L90.1 33.2 L96.1 35.0 L102.2 36.2 L109.3 38.0 L113.3 42.8 L118.4 47.6 L114.3 50.0 L108.3 50.6 L110.3 54.2 L108.3 56.6 L104.2 59.6 L100.2 61.4 L98.2 65.6 L98.2 68.0 L93.1 72.2 L94.1 79.4 L92.6 79.8 L91.3 76.4 L90.1 74.0 L85.0 73.8 L80.0 74.6 L76.9 77.6 L76.2 83.6 L79.0 87.4 L83.0 87.8 L83.5 84.8 L87.0 84.2 L86.0 90.8 L90.1 91.4 L90.6 96.8 L92.6 99.2 L95.1 98.6 L96.7 99.7 L96.1 101.6 L93.6 101.2 L90.1 99.2 L88.1 96.2 L83.0 93.4 L79.5 90.8 L76.9 91.0 L68.8 86.6 L67.8 82.4 L64.8 79.4 L61.3 74.2 L59.2 72.8 L60.8 75.2 L61.8 77.6 L63.8 81.2 L64.3 82.4 L61.8 80.2 L59.2 76.4 L56.7 71.0 L53.2 68.6 L49.6 62.0 L49.6 54.2 L50.6 51.2 L45.6 48.8 L42.6 45.2 L40.5 43.4 L36.5 39.8 L33.5 38.2 L26.4 37.0 L21.3 38.6 L19.3 40.4 L16.3 41.6 L11.2 44.0 L10.2 43.6 L15.3 39.8 L11.2 38.0 L8.2 36.2 L8.2 33.8 L12.2 32.6 L5.2 31.4Z" fill="#000"/><path d="M82.0 23.6 L86.0 21.2 L94.1 21.4 L102.2 23.8 L107.3 26.0 L112.8 29.8 L112.3 32.0 L109.3 35.6 L106.3 35.0 L102.2 33.8 L98.2 33.2 L96.1 31.4 L100.2 29.6 L98.2 27.2 L92.1 26.6 L88.1 26.0 L82.0 23.6Z" fill="#000"/><path d="M55.7 27.8 L68.8 27.8 L73.9 26.6 L75.9 23.6 L73.9 21.8 L67.8 21.2 L60.8 21.2 L54.7 23.6 L55.7 27.8Z" fill="#000"/><path d="M82.0 18.2 L99.2 18.2 L112.3 11.6 L94.1 10.4 L79.0 12.8 L82.0 18.2Z" fill="#000"/><path d="M53.7 20.0 L69.9 20.0 L74.9 17.6 L69.9 15.8 L57.7 16.4 L51.7 18.2 L53.7 20.0Z" fill="#000"/><path d="M101.2 15.8 L108.3 13.4 L116.4 11.6 L129.5 10.6 L144.7 9.8 L154.8 11.0 L162.9 12.2 L156.8 15.2 L154.8 19.4 L152.8 23.0 L150.7 26.0 L144.7 28.2 L138.6 31.2 L134.6 32.0 L132.5 35.0 L130.5 38.0 L126.5 36.8 L124.5 34.4 L122.4 32.0 L120.9 29.6 L121.4 26.6 L119.4 24.8 L118.4 22.4 L114.3 18.8 L108.3 18.2 L104.2 17.6 L101.2 15.8Z" fill="#000"/><path d="M150.7 31.0 L152.8 30.3 L158.8 30.2 L161.4 31.8 L159.8 32.8 L156.3 33.9 L152.8 33.4 L150.7 31.0Z" fill="#000"/><path d="M96.7 99.7 L98.2 98.6 L102.2 95.6 L106.3 96.8 L112.3 97.0 L114.3 99.8 L117.4 102.8 L122.4 104.0 L124.5 108.2 L126.5 111.2 L130.5 113.0 L134.6 113.6 L139.6 116.6 L139.6 120.8 L137.1 124.4 L135.6 126.8 L135.6 131.6 L134.1 135.8 L130.0 137.6 L126.5 141.2 L125.5 144.8 L121.4 150.6 L119.9 152.0 L117.4 152.6 L116.9 155.8 L112.3 156.8 L111.8 159.2 L109.3 161.0 L109.3 164.0 L106.8 165.8 L108.3 167.6 L105.2 170.6 L105.7 173.0 L103.2 174.8 L100.2 173.0 L98.7 167.6 L100.2 162.8 L100.7 158.0 L102.7 146.0 L103.9 134.0 L103.7 131.6 L101.2 129.2 L98.2 126.8 L96.1 122.0 L93.1 117.2 L93.6 114.2 L94.1 111.2 L94.1 108.8 L95.3 107.6 L96.6 105.2 L96.8 101.6 L96.7 99.7Z" fill="#000"/><path d="M165.6 58.2 L165.4 63.2 L166.1 65.6 L168.9 66.6 L169.9 66.7 L173.0 65.8 L175.0 63.4 L175.2 62.0 L178.2 59.6 L178.1 58.3 L181.1 58.3 L183.1 57.4 L185.3 57.3 L187.6 59.8 L191.0 62.0 L191.2 64.4 L192.2 63.2 L193.7 61.8 L191.2 60.2 L189.2 59.0 L187.6 56.6 L187.4 55.6 L188.9 55.2 L190.2 56.6 L192.2 58.4 L194.7 59.8 L194.5 61.8 L196.2 63.8 L197.7 66.2 L198.5 64.4 L199.3 61.2 L201.6 61.0 L201.3 62.0 L201.9 63.2 L202.6 65.0 L203.5 66.0 L205.8 66.4 L207.9 66.7 L209.9 65.8 L211.4 66.2 L211.2 68.5 L210.6 70.4 L209.7 72.4 L207.7 72.6 L208.0 74.0 L209.9 74.6 L210.4 76.4 L212.4 80.0 L214.4 84.2 L216.5 89.6 L218.5 94.4 L220.5 94.6 L224.0 93.2 L227.6 91.4 L230.6 89.1 L232.6 87.2 L234.1 85.4 L235.5 83.0 L234.1 81.7 L232.1 80.6 L231.9 78.6 L231.1 79.4 L229.6 81.0 L227.6 81.2 L227.1 79.6 L226.6 78.8 L225.5 78.2 L224.7 76.9 L223.5 74.6 L224.0 73.8 L225.5 74.0 L227.1 76.6 L229.6 78.1 L231.6 77.6 L232.9 79.0 L237.2 79.8 L242.2 79.5 L243.2 81.2 L244.6 82.4 L245.8 84.6 L248.6 85.4 L248.6 87.3 L249.2 90.8 L250.3 94.4 L251.8 98.6 L253.4 100.4 L254.2 99.2 L255.1 97.6 L255.9 91.4 L257.9 89.6 L260.4 87.2 L262.5 86.0 L263.0 84.2 L265.0 83.8 L267.8 83.2 L268.5 85.4 L270.3 87.8 L270.5 90.8 L273.6 90.2 L274.6 94.4 L274.8 98.0 L274.3 100.2 L276.4 102.4 L276.6 105.2 L277.6 106.8 L279.6 108.4 L280.3 108.2 L279.6 105.2 L279.4 104.0 L278.4 102.6 L277.1 101.8 L276.3 100.4 L275.3 99.0 L275.6 96.8 L276.1 95.0 L276.9 93.8 L278.6 95.2 L281.0 97.4 L281.2 99.6 L283.0 97.6 L285.2 96.2 L285.5 93.8 L284.5 90.8 L282.7 88.6 L281.9 87.2 L282.9 85.2 L284.2 84.2 L286.7 84.8 L287.2 84.2 L289.7 83.0 L292.8 82.4 L295.3 80.0 L296.3 77.8 L297.9 76.2 L298.3 74.0 L297.3 72.8 L298.1 71.8 L296.5 69.2 L295.3 68.0 L296.8 66.6 L298.8 65.6 L297.8 65.0 L295.3 65.4 L294.3 64.2 L293.8 63.2 L294.8 63.0 L297.3 61.0 L298.3 61.4 L297.8 63.2 L299.9 62.2 L301.4 62.6 L301.2 64.4 L302.9 65.6 L302.7 68.6 L303.9 68.6 L305.7 68.0 L305.9 65.8 L305.8 65.0 L304.8 63.7 L303.9 62.2 L306.1 60.9 L306.2 60.2 L307.1 59.2 L308.5 58.2 L309.8 58.6 L312.0 57.3 L314.2 55.0 L316.5 52.4 L317.0 50.0 L317.1 47.6 L318.0 47.0 L315.5 45.2 L313.2 44.5 L314.0 42.8 L317.6 39.8 L320.1 38.8 L324.6 38.8 L328.7 39.2 L331.7 38.8 L333.5 36.2 L335.7 35.8 L336.8 37.3 L339.8 35.0 L340.8 35.2 L339.8 38.0 L338.8 40.4 L338.1 41.6 L338.8 42.8 L336.8 46.0 L335.0 47.0 L333.2 48.8 L332.7 46.4 L332.2 42.8 L332.7 41.0 L336.8 39.2 L340.3 35.6 L345.9 36.8 L350.9 35.8 L354.5 35.0 L356.0 35.2 L357.0 32.0 L357.0 28.4 L352.9 26.2 L346.9 26.0 L342.8 26.6 L336.8 25.4 L331.7 24.8 L326.6 24.2 L321.6 23.2 L316.5 23.0 L310.5 24.2 L306.4 24.8 L304.4 23.0 L299.4 21.8 L291.3 21.7 L289.2 21.8 L288.2 20.0 L284.2 18.2 L281.2 17.0 L274.1 18.6 L271.0 18.7 L266.0 19.4 L262.5 20.6 L263.0 21.3 L256.4 21.7 L256.4 23.5 L253.9 23.2 L251.8 24.6 L249.8 22.6 L245.8 22.4 L244.3 23.7 L242.2 24.8 L244.0 28.2 L241.2 27.0 L235.7 27.8 L233.1 27.8 L229.6 27.4 L227.6 27.8 L224.5 29.0 L221.5 28.6 L220.5 27.8 L219.5 27.9 L219.0 29.4 L219.5 30.8 L216.5 30.2 L215.6 32.0 L213.4 32.8 L211.9 32.2 L212.4 31.2 L208.4 30.0 L210.4 29.6 L216.5 29.2 L215.9 28.2 L211.9 27.1 L209.4 26.7 L206.3 26.0 L203.3 24.8 L199.3 24.9 L196.2 25.8 L193.2 26.7 L190.7 27.8 L189.2 29.0 L187.4 31.2 L185.1 33.2 L182.6 34.4 L180.6 35.6 L180.1 38.0 L180.7 39.4 L182.6 40.4 L184.1 40.0 L185.6 39.0 L186.1 39.4 L187.1 40.6 L187.7 42.2 L188.1 43.4 L189.5 43.4 L191.1 42.7 L191.7 41.0 L192.0 39.4 L193.7 38.8 L193.5 37.6 L192.5 36.8 L192.7 35.0 L194.7 33.8 L196.7 32.6 L197.2 31.0 L199.8 31.0 L200.8 32.0 L200.0 32.6 L197.7 34.2 L196.5 35.0 L196.7 36.8 L198.1 38.0 L201.8 37.4 L204.8 37.8 L203.6 38.6 L198.8 39.0 L199.1 39.8 L198.9 40.4 L199.8 41.2 L197.2 41.0 L196.2 41.8 L196.2 43.4 L195.2 44.2 L193.7 44.5 L191.2 45.0 L189.2 45.2 L186.1 45.2 L186.0 42.3 L185.3 40.9 L183.6 41.6 L183.2 43.4 L183.6 45.3 L182.1 45.7 L180.1 46.2 L179.0 48.2 L177.5 48.7 L176.6 49.8 L175.2 50.4 L173.7 50.5 L173.1 51.7 L170.5 51.7 L170.5 52.6 L172.8 53.6 L173.8 54.8 L173.7 56.6 L173.2 57.9 L171.0 57.9 L166.9 57.6 L165.6 58.2Z" fill="#000"/><path d="M169.2 49.9 L172.0 49.3 L175.0 49.0 L176.4 48.6 L175.8 47.6 L176.7 46.8 L175.3 45.9 L174.9 44.6 L173.5 43.8 L173.0 42.8 L173.2 41.0 L171.7 40.8 L172.0 39.7 L169.9 39.7 L169.4 40.9 L168.7 41.8 L169.3 43.5 L170.1 44.2 L171.8 44.6 L172.0 45.9 L170.8 46.2 L170.1 47.6 L171.7 48.3 L170.8 48.6 L169.2 49.9Z" fill="#000"/><path d="M164.6 48.1 L166.7 48.0 L168.8 47.2 L168.9 45.8 L169.4 44.5 L168.7 43.6 L167.4 43.6 L166.3 44.5 L164.9 45.0 L165.1 46.0 L164.6 48.1Z" fill="#000"/><path d="M157.7 84.8 L158.3 87.2 L158.5 90.2 L157.6 92.4 L158.1 94.4 L159.8 96.8 L161.4 98.6 L162.9 101.0 L164.9 102.8 L167.4 104.7 L171.0 103.8 L173.0 104.2 L176.0 102.9 L179.5 102.4 L181.1 104.6 L183.6 104.5 L184.8 105.8 L184.6 108.8 L184.1 111.2 L186.9 114.8 L187.4 117.2 L188.4 120.2 L188.6 124.4 L187.1 128.0 L186.9 131.0 L188.6 136.4 L189.7 140.0 L190.5 143.0 L191.7 144.3 L193.4 147.8 L193.6 150.8 L195.2 151.8 L197.7 150.8 L200.8 150.8 L202.3 150.2 L204.8 147.2 L206.8 144.6 L207.9 141.8 L208.3 140.6 L210.9 138.8 L210.7 136.4 L210.1 134.0 L211.9 132.6 L214.9 129.8 L216.0 128.0 L216.0 123.2 L214.9 119.6 L214.6 116.0 L215.4 113.6 L217.0 111.8 L218.5 109.4 L222.0 106.4 L225.0 102.2 L226.8 96.8 L226.9 95.6 L225.0 96.2 L222.5 96.6 L220.0 97.4 L218.7 96.2 L218.2 94.4 L216.8 92.6 L215.2 91.4 L213.9 88.4 L212.7 84.8 L211.4 81.6 L210.9 79.6 L209.4 77.0 L208.2 74.2 L207.7 72.6 L205.3 72.2 L203.3 72.8 L200.8 72.1 L198.3 71.0 L196.2 70.6 L195.2 72.6 L194.0 73.4 L190.7 72.0 L189.7 70.8 L186.6 70.2 L185.3 68.6 L186.1 65.8 L184.9 65.2 L183.1 65.7 L180.1 66.0 L176.5 66.2 L173.5 67.8 L169.9 67.0 L168.7 67.4 L167.9 69.4 L165.4 71.2 L165.3 74.0 L163.9 75.8 L161.9 77.0 L160.3 78.8 L158.6 81.8 L157.7 84.8Z" fill="#000"/><path d="M219.7 140.2 L222.5 140.2 L224.0 134.0 L225.9 129.0 L225.1 124.6 L223.7 126.2 L222.5 128.6 L220.0 129.6 L219.3 132.2 L219.8 135.2 L219.0 137.6 L219.7 140.2Z" fill="#000"/><path d="M271.3 103.4 L273.6 103.8 L276.4 107.2 L279.9 111.2 L282.2 113.6 L282.2 117.0 L280.6 117.0 L278.4 114.8 L276.6 111.8 L274.7 108.0 L271.3 103.4Z" fill="#000"/><path d="M281.4 118.2 L282.7 117.2 L286.2 118.2 L288.7 118.3 L290.8 119.4 L290.7 120.4 L286.2 119.8 L282.7 118.9 L281.4 118.2Z" fill="#000"/><path d="M285.2 108.0 L285.8 107.5 L287.2 108.1 L289.2 106.3 L291.8 103.8 L293.1 101.7 L295.5 103.8 L294.3 104.8 L294.0 108.2 L295.3 109.0 L293.8 110.6 L292.8 113.0 L292.3 114.6 L290.8 114.2 L287.9 113.6 L286.4 113.5 L286.2 111.8 L285.2 110.0 L285.2 108.0Z" fill="#000"/><path d="M295.6 116.6 L296.7 116.6 L296.8 113.4 L297.8 115.8 L299.4 115.4 L298.3 113.6 L297.4 111.7 L299.6 111.2 L298.6 109.0 L300.7 109.4 L301.5 108.1 L297.1 108.4 L296.0 110.0 L295.8 112.4 L295.1 113.6 L295.6 116.6Z" fill="#000"/><path d="M307.4 111.2 L310.5 111.2 L312.0 114.0 L314.3 111.8 L317.6 113.1 L322.1 115.4 L324.1 117.6 L323.9 119.0 L326.6 122.4 L324.4 122.1 L322.6 119.7 L320.6 119.1 L319.9 121.0 L318.8 121.0 L317.6 120.9 L315.5 119.7 L314.5 119.0 L315.0 117.8 L314.0 116.2 L311.5 115.2 L310.0 114.8 L308.5 113.4 L310.2 113.1 L307.4 111.2Z" fill="#000"/><path d="M296.3 87.8 L298.6 87.8 L298.3 90.4 L297.8 92.2 L300.4 93.4 L300.6 95.0 L301.9 96.8 L302.4 98.6 L303.0 101.2 L302.1 102.8 L301.4 101.8 L300.2 100.8 L298.3 101.6 L299.2 99.9 L299.9 98.0 L298.1 96.2 L296.8 93.4 L296.9 92.0 L296.2 90.6 L296.3 87.8Z" fill="#000"/><path d="M306.2 72.6 L306.7 69.6 L307.4 68.8 L309.3 67.4 L312.0 67.2 L313.3 65.4 L315.2 64.6 L316.5 62.7 L316.5 61.0 L317.9 60.4 L316.7 59.5 L316.5 58.0 L318.0 57.8 L318.3 55.5 L319.6 56.6 L322.0 58.0 L320.6 58.5 L319.8 59.6 L318.4 58.9 L317.8 60.6 L318.6 62.5 L318.2 64.0 L317.3 65.2 L317.4 67.0 L316.3 67.9 L315.3 68.4 L313.5 68.5 L312.3 69.8 L311.5 68.6 L309.8 69.9 L308.9 70.0 L307.4 69.6 L308.2 72.2 L306.9 72.8 L306.2 72.6Z" fill="#000"/><path d="M318.6 54.8 L320.1 53.8 L319.6 50.6 L321.1 51.2 L319.9 48.8 L319.6 45.8 L319.2 44.8 L318.4 46.4 L318.7 48.8 L318.3 51.8 L318.6 54.8Z" fill="#000"/><path d="M296.4 82.4 L297.3 83.6 L298.2 80.6 L297.9 79.6 L297.0 80.6 L296.4 82.4Z" fill="#000"/><path d="M255.7 102.6 L257.7 101.6 L257.2 99.7 L256.1 98.2 L255.6 100.2 L255.7 102.6Z" fill="#000"/><path d="M289.7 136.4 L290.0 139.4 L289.6 141.2 L290.8 144.2 L291.3 147.2 L291.9 150.2 L291.3 151.2 L293.3 152.0 L295.8 151.3 L297.8 150.6 L299.9 150.7 L302.4 148.8 L305.4 148.0 L307.7 147.8 L309.7 148.6 L310.8 149.6 L312.0 151.5 L313.5 149.6 L314.0 152.6 L315.0 152.6 L316.0 153.8 L317.0 155.6 L320.1 156.6 L321.6 156.1 L322.9 156.8 L324.6 155.4 L326.6 154.9 L326.9 152.8 L328.2 150.2 L329.3 148.4 L330.2 144.8 L329.8 141.2 L328.7 139.4 L327.5 137.0 L326.1 135.8 L325.1 134.4 L322.9 132.6 L322.6 130.4 L321.9 128.0 L320.6 127.0 L320.1 125.0 L319.1 122.8 L318.1 125.6 L318.2 128.6 L317.3 131.0 L315.8 130.9 L313.5 129.1 L312.0 127.8 L313.4 124.8 L312.0 124.4 L309.0 123.8 L307.6 124.6 L306.4 125.6 L305.9 128.0 L304.4 128.0 L303.4 126.8 L302.2 127.4 L300.8 129.6 L299.9 130.8 L298.5 131.8 L297.3 133.4 L295.3 134.0 L293.3 134.7 L291.8 135.8 L290.5 137.0 L289.7 136.4Z" fill="#000"/><path d="M321.2 158.8 L323.1 159.3 L324.9 159.0 L324.8 160.6 L323.6 162.2 L322.6 162.3 L321.8 160.8 L321.2 158.8Z" fill="#000"/><path d="M349.5 151.4 L351.4 153.8 L352.7 154.4 L355.5 155.2 L353.9 157.0 L352.9 159.8 L351.5 159.6 L351.5 157.8 L350.6 157.0 L351.4 155.6 L349.5 151.4Z" fill="#000"/><path d="M349.6 158.6 L351.2 159.6 L349.9 162.6 L348.1 163.4 L346.2 165.9 L343.3 165.2 L345.2 162.8 L347.5 161.4 L349.6 158.6Z" fill="#000"/><path d="M186.1 15.8 L191.2 14.0 L197.2 13.5 L202.3 14.0 L202.3 15.8 L196.2 17.6 L191.2 18.2 L188.1 17.0 L186.1 15.8Z" fill="#000"/><path d="M227.6 25.0 L232.6 25.3 L230.6 21.8 L235.7 19.4 L241.7 18.2 L244.8 17.8 L237.7 17.6 L230.6 19.4 L229.1 22.4 L227.6 25.0Z" fill="#000"/><path d="M221.5 13.6 L231.6 12.4 L239.7 12.8 L235.7 14.0 L225.5 14.2 L221.5 13.6Z" fill="#000"/><path d="M268.0 15.2 L274.1 12.8 L280.1 14.6 L276.1 16.4 L271.0 16.2 L268.0 15.2Z" fill="#000"/><path d="M312.5 20.6 L318.6 18.6 L326.6 19.0 L324.6 20.6 L316.5 21.8 L312.5 20.6Z" fill="#000"/><path d="M47.6 24.8 L53.7 24.8 L58.7 23.0 L58.7 20.0 L49.6 19.4 L46.6 22.4 L47.6 24.8Z" fill="#000"/><path d="M80.0 20.2 L94.1 20.6 L95.1 18.2 L82.0 17.6 L80.0 20.2Z" fill="#000"/><path d="M71.9 26.0 L84.0 26.0 L87.0 22.4 L82.0 20.8 L71.9 21.2 L71.9 26.0Z" fill="#000"/><path d="M114.8 52.8 L118.4 48.2 L121.4 50.6 L121.4 53.6 L118.4 53.8 L114.8 52.8Z" fill="#000"/><path d="M89.1 83.8 L92.1 82.3 L97.2 83.4 L100.0 85.8 L96.4 86.1 L94.1 84.4 L89.1 83.8Z" fill="#000"/><path d="M99.8 86.4 L104.2 86.2 L105.8 87.7 L102.5 88.8 L99.8 88.0 L99.8 86.4Z" fill="#000"/><path d="M-1.0 212.0 L13.0 207.0 L23.0 201.5 L43.0 199.0 L72.0 195.3 L88.0 193.0 L98.0 189.0 L104.0 183.0 L107.0 185.0 L112.0 193.0 L123.0 200.0 L136.6 203.4 L153.0 201.0 L169.0 199.4 L198.0 195.0 L225.7 188.0 L253.0 184.5 L282.4 183.2 L303.0 183.0 L324.0 182.5 L324.0 215.0 L-1.0 215.0Z" fill="#000"/><path d="M80.0 39.2 L81.5 41.6 L86.0 42.2 L89.1 43.8 L92.1 46.6 L94.6 48.2 L95.1 44.6 L97.2 40.4 L96.6 37.4 L96.1 35.2 L91.1 33.4 L86.0 33.2 L84.0 34.4 L80.0 36.8 L80.0 39.2Z" fill="#7a7a7a"/><path d="M203.1 60.2 L204.3 60.6 L208.4 59.6 L211.4 60.1 L213.9 60.9 L217.0 60.2 L217.0 59.0 L215.4 57.9 L213.4 56.6 L212.9 55.6 L212.0 55.5 L210.4 56.0 L208.9 56.6 L208.4 55.5 L206.8 54.1 L205.3 55.0 L204.9 56.0 L203.9 57.0 L203.2 58.6 L203.1 60.2Z" fill="#7a7a7a"/><path d="M210.4 55.6 L212.0 55.5 L213.4 54.2 L214.7 53.4 L213.4 53.6 L210.9 54.6 L210.4 55.6Z" fill="#7a7a7a"/><path d="M222.2 56.2 L223.0 55.3 L224.7 54.3 L226.6 53.6 L228.6 53.8 L228.8 55.6 L226.9 56.6 L226.0 56.7 L226.8 58.4 L228.3 59.6 L228.6 60.4 L228.4 61.4 L229.5 62.8 L229.5 65.1 L227.1 65.8 L225.5 65.1 L224.5 64.4 L224.3 62.7 L225.0 61.8 L224.1 59.8 L223.0 58.4 L223.0 57.3 L222.2 56.2Z" fill="#7a7a7a"/><path d="M81.8 54.0 L85.0 53.2 L89.6 54.2 L89.3 52.4 L86.0 51.3 L81.8 54.0Z" fill="#7a7a7a"/><path d="M86.2 60.0 L87.8 57.8 L88.1 55.0 L89.6 54.9 L90.6 55.6 L91.8 58.3 L92.6 56.6 L93.6 56.0 L92.6 54.7 L89.7 54.6 L87.0 54.8 L86.2 56.6 L86.2 60.0Z" fill="#7a7a7a"/><path d="M90.6 60.2 L95.1 58.8 L94.9 58.0 L98.0 57.8 L97.7 57.0 L94.4 57.6 L93.1 58.9 L90.9 59.5 L90.6 60.2Z" fill="#7a7a7a"/><path d="M280.1 48.2 L282.7 47.0 L285.7 43.4 L284.7 43.0 L281.7 46.4 L279.9 47.8 L280.1 48.2Z" fill="#7a7a7a"/><path d="M234.1 57.2 L237.2 56.0 L236.7 54.0 L234.6 54.4 L234.1 57.2Z" fill="#7a7a7a"/><line x1="23.4" y1="0" x2="23.4" y2="214" stroke="#d0d0d0" stroke-width="0.8" opacity="0.75"/><line x1="53.7" y1="0" x2="53.7" y2="214" stroke="#d0d0d0" stroke-width="0.8" opacity="0.75"/><line x1="84.0" y1="0" x2="84.0" y2="214" stroke="#d0d0d0" stroke-width="0.8" opacity="0.75"/><line x1="114.3" y1="0" x2="114.3" y2="214" stroke="#d0d0d0" stroke-width="0.8" opacity="0.75"/><line x1="144.7" y1="0" x2="144.7" y2="214" stroke="#d0d0d0" stroke-width="0.8" opacity="0.75"/><line x1="175.0" y1="0" x2="175.0" y2="214" stroke="#d0d0d0" stroke-width="0.8" opacity="0.75"/><line x1="205.3" y1="0" x2="205.3" y2="214" stroke="#d0d0d0" stroke-width="0.8" opacity="0.75"/><line x1="235.7" y1="0" x2="235.7" y2="214" stroke="#d0d0d0" stroke-width="0.8" opacity="0.75"/><line x1="266.0" y1="0" x2="266.0" y2="214" stroke="#d0d0d0" stroke-width="0.8" opacity="0.75"/><line x1="296.3" y1="0" x2="296.3" y2="214" stroke="#d0d0d0" stroke-width="0.8" opacity="0.75"/><line x1="326.6" y1="0" x2="326.6" y2="214" stroke="#d0d0d0" stroke-width="0.8" opacity="0.75"/><line x1="0" y1="38.0" x2="323" y2="38.0" stroke="#d0d0d0" stroke-width="0.8" opacity="0.75"/><line x1="0" y1="74.0" x2="323" y2="74.0" stroke="#d0d0d0" stroke-width="0.8" opacity="0.75"/><line x1="0" y1="110.0" x2="323" y2="110.0" stroke="#d0d0d0" stroke-width="0.8" opacity="0.75"/><line x1="0" y1="146.0" x2="323" y2="146.0" stroke="#d0d0d0" stroke-width="0.8" opacity="0.75"/><line x1="0" y1="182.0" x2="323" y2="182.0" stroke="#d0d0d0" stroke-width="0.8" opacity="0.75"/><path d="M327.0 15.4 L326.4 15.5 L325.9 15.6 L325.4 15.7 L324.9 15.8 L324.4 15.9 L323.9 16.0 L323.4 16.1 L322.9 16.2 L322.4 16.4 L321.9 16.5 L321.4 16.6 L320.9 16.7 L320.4 16.9 L319.9 17.0 L319.4 17.1 L318.9 17.3 L318.4 17.4 L317.9 17.6 L317.3 17.7 L316.8 17.9 L316.3 18.0 L315.8 18.2 L315.3 18.4 L314.8 18.6 L314.3 18.7 L313.8 18.9 L313.3 19.1 L312.8 19.3 L312.3 19.5 L311.8 19.7 L311.3 19.9 L310.8 20.2 L310.3 20.4 L309.8 20.6 L309.3 20.9 L308.8 21.1 L308.2 21.4 L307.7 21.6 L307.2 21.9 L306.7 22.2 L306.2 22.5 L305.7 22.8 L305.2 23.1 L304.7 23.4 L304.2 23.8 L303.7 24.1 L303.2 24.5 L302.7 24.8 L302.2 25.2 L301.7 25.6 L301.2 26.0 L300.7 26.5 L300.2 26.9 L299.7 27.4 L299.2 27.9 L298.6 28.4 L298.1 28.9 L297.6 29.5 L297.1 30.0 L296.6 30.6 L296.1 31.2 L295.6 31.9 L295.1 32.6 L294.6 33.3 L294.1 34.0 L293.6 34.8 L293.1 35.6 L292.6 36.5 L292.1 37.4 L291.6 38.4 L291.1 39.4 L290.6 40.4 L290.1 41.5 L289.5 42.7 L289.0 43.9 L288.5 45.2 L288.0 46.6 L287.5 48.1 L287.0 49.6 L286.5 51.3 L286.0 53.0 L285.5 54.8 L285.0 56.8 L284.5 58.9 L284.0 61.0 L283.5 63.4 L283.0 65.8 L282.5 68.4 L282.0 71.2 L281.5 74.1 L281.0 77.1 L280.4 80.3 L279.9 83.6 L279.4 87.1 L278.9 90.7 L278.4 94.4 L277.9 98.2 L277.4 102.1 L276.9 106.0 L276.4 110.0 L275.9 114.0 L275.4 117.9 L274.9 121.8 L274.4 125.6 L273.9 129.3 L273.4 132.9 L272.9 136.4 L272.4 139.7 L271.9 142.9 L271.3 145.9 L270.8 148.8 L270.3 151.6 L269.8 154.2 L269.3 156.6 L268.8 159.0 L268.3 161.1 L267.8 163.2 L267.3 165.2 L266.8 167.0 L266.3 168.7 L265.8 170.4 L265.3 171.9 L264.8 173.4 L264.3 174.8 L263.8 176.1 L263.3 177.3 L262.8 178.5 L262.2 179.6 L261.7 180.6 L261.2 181.6 L260.7 182.6 L260.2 183.5 L259.7 184.4 L259.2 185.2 L258.7 186.0 L258.2 186.7 L257.7 187.4 L257.2 188.1 L256.7 188.8 L256.2 189.4 L255.7 190.0 L255.2 190.5 L254.7 191.1 L254.2 191.6 L253.7 192.1 L253.2 192.6 L252.6 193.1 L252.1 193.5 L251.6 194.0 L251.1 194.4 L250.6 194.8 L250.1 195.2 L249.6 195.5 L249.1 195.9 L248.6 196.2 L248.1 196.6 L247.6 196.9 L247.1 197.2 L246.6 197.5 L246.1 197.8 L245.6 198.1 L245.1 198.4 L244.6 198.6 L244.1 198.9 L243.5 199.1 L243.0 199.4 L242.5 199.6 L242.0 199.8 L241.5 200.1 L241.0 200.3 L240.5 200.5 L240.0 200.7 L239.5 200.9 L239.0 201.1 L238.5 201.3 L238.0 201.4 L237.5 201.6 L237.0 201.8 L236.5 202.0 L236.0 202.1 L235.5 202.3 L235.0 202.4 L234.4 202.6 L233.9 202.7 L233.4 202.9 L232.9 203.0 L232.4 203.1 L231.9 203.3 L231.4 203.4 L230.9 203.5 L230.4 203.6 L229.9 203.8 L229.4 203.9 L228.9 204.0 L228.4 204.1 L227.9 204.2 L227.4 204.3 L226.9 204.4 L226.4 204.5 L225.9 204.6 L225.3 204.7 L224.8 204.8 L224.3 204.9 L223.8 205.0 L223.3 205.0 L222.8 205.1 L222.3 205.2 L221.8 205.3 L221.3 205.4 L220.8 205.4 L220.3 205.5 L219.8 205.6 L219.3 205.7 L218.8 205.7 L218.3 205.8 L217.8 205.9 L217.3 205.9 L216.8 206.0 L216.2 206.1 L215.7 206.1 L215.2 206.2 L214.7 206.2 L214.2 206.3 L213.7 206.3 L213.2 206.4 L212.7 206.4 L212.2 206.5 L211.7 206.5 L211.2 206.6 L210.7 206.6 L210.2 206.7 L209.7 206.7 L209.2 206.8 L208.7 206.8 L208.2 206.8 L207.7 206.9 L207.1 206.9 L206.6 207.0 L206.1 207.0 L205.6 207.0 L205.1 207.1 L204.6 207.1 L204.1 207.1 L203.6 207.2 L203.1 207.2 L202.6 207.2 L202.1 207.2 L201.6 207.3 L201.1 207.3 L200.6 207.3 L200.1 207.3 L199.6 207.4 L199.1 207.4 L198.6 207.4 L198.1 207.4 L197.5 207.5 L197.0 207.5 L196.5 207.5 L196.0 207.5 L195.5 207.5 L195.0 207.5 L194.5 207.6 L194.0 207.6 L193.5 207.6 L193.0 207.6 L192.5 207.6 L192.0 207.6 L191.5 207.6 L191.0 207.6 L190.5 207.6 L190.0 207.6 L189.5 207.7 L189.0 207.7 L188.4 207.7 L187.9 207.7 L187.4 207.7 L186.9 207.7 L186.4 207.7 L185.9 207.7" stroke="#c83838" stroke-width="1" fill="none"/><path d="M327.0 15.4 L326.4 15.5 L325.9 15.6 L325.4 15.7 L324.9 15.8 L324.4 15.9 L323.9 16.0 L323.4 16.1 L322.9 16.2 L322.4 16.4 L321.9 16.5 L321.4 16.6 L320.9 16.7 L320.4 16.9 L319.9 17.0 L319.4 17.1 L318.9 17.3 L318.4 17.4 L317.9 17.6 L317.3 17.7 L316.8 17.9 L316.3 18.0 L315.8 18.2 L315.3 18.4 L314.8 18.6 L314.3 18.7 L313.8 18.9 L313.3 19.1 L312.8 19.3 L312.3 19.5 L311.8 19.7 L311.3 19.9 L310.8 20.2 L310.3 20.4 L309.8 20.6 L309.3 20.9 L308.8 21.1 L308.2 21.4 L307.7 21.6 L307.2 21.9 L306.7 22.2 L306.2 22.5 L305.7 22.8 L305.2 23.1 L304.7 23.4 L304.2 23.8 L303.7 24.1 L303.2 24.5 L302.7 24.8 L302.2 25.2 L301.7 25.6 L301.2 26.0 L300.7 26.5 L300.2 26.9 L299.7 27.4 L299.2 27.9 L298.6 28.4 L298.1 28.9 L297.6 29.5 L297.1 30.0 L296.6 30.6 L296.1 31.2 L295.6 31.9 L295.1 32.6 L294.6 33.3 L294.1 34.0 L293.6 34.8 L293.1 35.6 L292.6 36.5 L292.1 37.4 L291.6 38.4 L291.1 39.4 L290.6 40.4 L290.1 41.5 L289.5 42.7 L289.0 43.9 L288.5 45.2 L288.0 46.6 L287.5 48.1 L287.0 49.6 L286.5 51.3 L286.0 53.0 L285.5 54.8 L285.0 56.8 L284.5 58.9 L284.0 61.0 L283.5 63.4 L283.0 65.8 L282.5 68.4 L282.0 71.2 L281.5 74.1 L281.0 77.1 L280.4 80.3 L279.9 83.6 L279.4 87.1 L278.9 90.7 L278.4 94.4 L277.9 98.2 L277.4 102.1 L276.9 106.0 L276.4 110.0 L275.9 114.0 L275.4 117.9 L274.9 121.8 L274.4 125.6 L273.9 129.3 L273.4 132.9 L272.9 136.4 L272.4 139.7 L271.9 142.9 L271.3 145.9 L270.8 148.8 L270.3 151.6 L269.8 154.2 L269.3 156.6 L268.8 159.0 L268.3 161.1 L267.8 163.2 L267.3 165.2 L266.8 167.0 L266.3 168.7 L265.8 170.4 L265.3 171.9 L264.8 173.4 L264.3 174.8 L263.8 176.1 L263.3 177.3 L262.8 178.5 L262.2 179.6 L261.7 180.6 L261.2 181.6 L260.7 182.6 L260.2 183.5 L259.7 184.4 L259.2 185.2 L258.7 186.0 L258.2 186.7 L257.7 187.4 L257.2 188.1 L256.7 188.8 L256.2 189.4 L255.7 190.0 L255.2 190.5 L254.7 191.1 L254.2 191.6 L253.7 192.1 L253.2 192.6 L252.6 193.1 L252.1 193.5 L251.6 194.0 L251.1 194.4 L250.6 194.8 L250.1 195.2 L249.6 195.5 L249.1 195.9 L248.6 196.2 L248.1 196.6 L247.6 196.9 L247.1 197.2 L246.6 197.5 L246.1 197.8 L245.6 198.1 L245.1 198.4 L244.6 198.6 L244.1 198.9 L243.5 199.1 L243.0 199.4 L242.5 199.6 L242.0 199.8 L241.5 200.1 L241.0 200.3 L240.5 200.5 L240.0 200.7 L239.5 200.9 L239.0 201.1 L238.5 201.3 L238.0 201.4 L237.5 201.6 L237.0 201.8 L236.5 202.0 L236.0 202.1 L235.5 202.3 L235.0 202.4 L234.4 202.6 L233.9 202.7 L233.4 202.9 L232.9 203.0 L232.4 203.1 L231.9 203.3 L231.4 203.4 L230.9 203.5 L230.4 203.6 L229.9 203.8 L229.4 203.9 L228.9 204.0 L228.4 204.1 L227.9 204.2 L227.4 204.3 L226.9 204.4 L226.4 204.5 L225.9 204.6 L225.3 204.7 L224.8 204.8 L224.3 204.9 L223.8 205.0 L223.3 205.0 L222.8 205.1 L222.3 205.2 L221.8 205.3 L221.3 205.4 L220.8 205.4 L220.3 205.5 L219.8 205.6 L219.3 205.7 L218.8 205.7 L218.3 205.8 L217.8 205.9 L217.3 205.9 L216.8 206.0 L216.2 206.1 L215.7 206.1 L215.2 206.2 L214.7 206.2 L214.2 206.3 L213.7 206.3 L213.2 206.4 L212.7 206.4 L212.2 206.5 L211.7 206.5 L211.2 206.6 L210.7 206.6 L210.2 206.7 L209.7 206.7 L209.2 206.8 L208.7 206.8 L208.2 206.8 L207.7 206.9 L207.1 206.9 L206.6 207.0 L206.1 207.0 L205.6 207.0 L205.1 207.1 L204.6 207.1 L204.1 207.1 L203.6 207.2 L203.1 207.2 L202.6 207.2 L202.1 207.2 L201.6 207.3 L201.1 207.3 L200.6 207.3 L200.1 207.3 L199.6 207.4 L199.1 207.4 L198.6 207.4 L198.1 207.4 L197.5 207.5 L197.0 207.5 L196.5 207.5 L196.0 207.5 L195.5 207.5 L195.0 207.5 L194.5 207.6 L194.0 207.6 L193.5 207.6 L193.0 207.6 L192.5 207.6 L192.0 207.6 L191.5 207.6 L191.0 207.6 L190.5 207.6 L190.0 207.6 L189.5 207.7 L189.0 207.7 L188.4 207.7 L187.9 207.7 L187.4 207.7 L186.9 207.7 L186.4 207.7 L185.9 207.7" stroke="#f0f0f0" stroke-width="1" fill="none" stroke-dasharray="2.5 4"/><path d="M3.3 12.3 L3.2 12.3 L3.1 12.3 L3.0 12.3 L2.9 12.3 L2.8 12.3 L2.7 12.3 L2.6 12.3 L2.5 12.3 L2.4 12.3 L2.3 12.3 L2.2 12.3 L2.1 12.3 L2.0 12.3 L1.9 12.3 L1.8 12.3 L1.7 12.3 L1.6 12.3 L1.5 12.3 L1.4 12.3 L1.3 12.3 L1.2 12.3 L1.1 12.3 L1.0 12.3 L0.9 12.3 L0.8 12.3 L0.7 12.3 L0.6 12.3 L0.5 12.3 L0.4 12.3 L0.3 12.3 L0.2 12.3 L0.1 12.3 L-0.0 12.3 L-0.1 12.3 L-0.2 12.3 L-0.3 12.3 L-0.4 12.3 L-0.5 12.3 L-0.6 12.3 L-0.7 12.3 L-0.8 12.3 L-0.9 12.3 L-1.0 12.4 L-1.1 12.4 L-1.2 12.4 L-1.3 12.4 L-1.4 12.4 L-1.5 12.4 L-1.6 12.4 L-1.7 12.4 L-1.8 12.4 L-1.9 12.4 L-2.0 12.4 L-2.1 12.4 L-2.2 12.4 L-2.3 12.4 L-2.4 12.4 L-2.5 12.4 L-2.6 12.4 L-2.7 12.4 L-2.8 12.4 L-2.9 12.4 L-3.0 12.4 L-3.1 12.4 L-3.2 12.4 L-3.3 12.4 L-3.4 12.4 L-3.5 12.4 L-3.6 12.4 L-3.7 12.4 L-3.8 12.4 L-3.9 12.4" stroke="#c83838" stroke-width="1" fill="none"/><path d="M3.3 12.3 L3.2 12.3 L3.1 12.3 L3.0 12.3 L2.9 12.3 L2.8 12.3 L2.7 12.3 L2.6 12.3 L2.5 12.3 L2.4 12.3 L2.3 12.3 L2.2 12.3 L2.1 12.3 L2.0 12.3 L1.9 12.3 L1.8 12.3 L1.7 12.3 L1.6 12.3 L1.5 12.3 L1.4 12.3 L1.3 12.3 L1.2 12.3 L1.1 12.3 L1.0 12.3 L0.9 12.3 L0.8 12.3 L0.7 12.3 L0.6 12.3 L0.5 12.3 L0.4 12.3 L0.3 12.3 L0.2 12.3 L0.1 12.3 L-0.0 12.3 L-0.1 12.3 L-0.2 12.3 L-0.3 12.3 L-0.4 12.3 L-0.5 12.3 L-0.6 12.3 L-0.7 12.3 L-0.8 12.3 L-0.9 12.3 L-1.0 12.4 L-1.1 12.4 L-1.2 12.4 L-1.3 12.4 L-1.4 12.4 L-1.5 12.4 L-1.6 12.4 L-1.7 12.4 L-1.8 12.4 L-1.9 12.4 L-2.0 12.4 L-2.1 12.4 L-2.2 12.4 L-2.3 12.4 L-2.4 12.4 L-2.5 12.4 L-2.6 12.4 L-2.7 12.4 L-2.8 12.4 L-2.9 12.4 L-3.0 12.4 L-3.1 12.4 L-3.2 12.4 L-3.3 12.4 L-3.4 12.4 L-3.5 12.4 L-3.6 12.4 L-3.7 12.4 L-3.8 12.4 L-3.9 12.4" stroke="#f0f0f0" stroke-width="1" fill="none" stroke-dasharray="2.5 4"/><path d="M3.5 12.3 L3.6 12.3 L3.7 12.3 L3.8 12.3 L3.9 12.3 L4.0 12.3 L4.1 12.3 L4.2 12.3 L4.3 12.3 L4.4 12.3 L4.5 12.3 L4.6 12.3 L4.7 12.3 L4.8 12.3 L4.9 12.3 L5.1 12.3 L5.2 12.3 L5.3 12.3 L5.4 12.3 L5.5 12.3 L5.6 12.3 L5.7 12.3 L5.8 12.3 L5.9 12.3 L6.0 12.3 L6.1 12.3 L6.2 12.3 L6.3 12.3 L6.4 12.3 L6.5 12.3 L6.6 12.3 L6.7 12.3 L6.8 12.3 L6.9 12.3 L7.0 12.3 L7.1 12.3 L7.2 12.3 L7.3 12.3 L7.4 12.3 L7.5 12.3 L7.6 12.3 L7.7 12.3 L7.8 12.3 L7.9 12.4 L8.0 12.4 L8.1 12.4 L8.2 12.4 L8.3 12.4 L8.4 12.4 L8.5 12.4 L8.6 12.4 L8.7 12.4 L8.8 12.4 L8.9 12.4 L9.0 12.4 L9.1 12.4 L9.2 12.4 L9.3 12.4 L9.4 12.4 L9.5 12.4 L9.6 12.4 L9.7 12.4 L9.8 12.4 L9.9 12.4 L10.0 12.4 L10.1 12.4 L10.2 12.4 L10.3 12.4 L10.4 12.4 L10.5 12.4 L10.6 12.4 L10.7 12.4 L10.8 12.4 L10.9 12.4 L11.0 12.4 L11.1 12.4 L11.2 12.4 L11.3 12.4 L11.4 12.4 L11.5 12.4 L11.6 12.4 L11.7 12.4 L11.8 12.4 L11.9 12.4 L12.0 12.4 L12.1 12.4 L12.2 12.4 L12.3 12.4 L12.4 12.4 L12.5 12.4 L12.6 12.4 L12.7 12.5 L12.8 12.5 L12.9 12.5 L13.0 12.5 L13.1 12.5 L13.2 12.5 L13.3 12.5 L13.4 12.5 L14.0 12.5 L14.6 12.5 L15.1 12.5 L15.6 12.5 L16.1 12.6 L16.6 12.6 L17.1 12.6 L17.6 12.6 L18.1 12.7 L18.6 12.7 L19.1 12.7 L19.6 12.7 L20.1 12.8 L20.6 12.8 L21.1 12.8 L21.6 12.8 L22.1 12.9 L22.6 12.9 L23.1 12.9 L23.7 13.0 L24.2 13.0 L24.7 13.0 L25.2 13.1 L25.7 13.1 L26.2 13.2 L26.7 13.2 L27.2 13.2 L27.7 13.3 L28.2 13.3 L28.7 13.4 L29.2 13.4 L29.7 13.5 L30.2 13.5 L30.7 13.6 L31.2 13.6 L31.7 13.7 L32.2 13.7 L32.8 13.8 L33.3 13.8 L33.8 13.9 L34.3 13.9 L34.8 14.0 L35.3 14.1 L35.8 14.1 L36.3 14.2 L36.8 14.3 L37.3 14.3 L37.8 14.4 L38.3 14.5 L38.8 14.6 L39.3 14.6 L39.8 14.7 L40.3 14.8 L40.8 14.9 L41.3 15.0 L41.9 15.0 L42.4 15.1 L42.9 15.2 L43.4 15.3 L43.9 15.4 L44.4 15.5 L44.9 15.6 L45.4 15.7 L45.9 15.8 L46.4 15.9 L46.9 16.0 L47.4 16.1 L47.9 16.2 L48.4 16.4 L48.9 16.5 L49.4 16.6 L49.9 16.7 L50.4 16.9 L51.0 17.0 L51.5 17.1 L52.0 17.3 L52.5 17.4 L53.0 17.6 L53.5 17.7 L54.0 17.9 L54.5 18.0 L55.0 18.2 L55.5 18.4 L56.0 18.6 L56.5 18.7 L57.0 18.9 L57.5 19.1 L58.0 19.3 L58.5 19.5 L59.0 19.7 L59.5 19.9 L60.0 20.2 L60.6 20.4 L61.1 20.6 L61.6 20.9 L62.1 21.1 L62.6 21.4 L63.1 21.6 L63.6 21.9 L64.1 22.2 L64.6 22.5 L65.1 22.8 L65.6 23.1 L66.1 23.4 L66.6 23.8 L67.1 24.1 L67.6 24.5 L68.1 24.8 L68.6 25.2 L69.1 25.6 L69.7 26.0 L70.2 26.5 L70.7 26.9 L71.2 27.4 L71.7 27.9 L72.2 28.4 L72.7 28.9 L73.2 29.5 L73.7 30.0 L74.2 30.6 L74.7 31.2 L75.2 31.9 L75.7 32.6 L76.2 33.3 L76.7 34.0 L77.2 34.8 L77.7 35.6 L78.2 36.5 L78.8 37.4 L79.3 38.4 L79.8 39.4 L80.3 40.4 L80.8 41.5 L81.3 42.7 L81.8 43.9 L82.3 45.2 L82.8 46.6 L83.3 48.1 L83.8 49.6 L84.3 51.3 L84.8 53.0 L85.3 54.8 L85.8 56.8 L86.3 58.9 L86.8 61.0 L87.3 63.4 L87.9 65.8 L88.4 68.4 L88.9 71.2 L89.4 74.1 L89.9 77.1 L90.4 80.3 L90.9 83.6 L91.4 87.1 L91.9 90.7 L92.4 94.4 L92.9 98.2 L93.4 102.1 L93.9 106.0 L94.4 110.0 L94.9 114.0 L95.4 117.9 L95.9 121.8 L96.4 125.6 L97.0 129.3 L97.5 132.9 L98.0 136.4 L98.5 139.7 L99.0 142.9 L99.5 145.9 L100.0 148.8 L100.5 151.6 L101.0 154.2 L101.5 156.6 L102.0 159.0 L102.5 161.1 L103.0 163.2 L103.5 165.2 L104.0 167.0 L104.5 168.7 L105.0 170.4 L105.5 171.9 L106.0 173.4 L106.6 174.8 L107.1 176.1 L107.6 177.3 L108.1 178.5 L108.6 179.6 L109.1 180.6 L109.6 181.6 L110.1 182.6 L110.6 183.5 L111.1 184.4 L111.6 185.2 L112.1 186.0 L112.6 186.7 L113.1 187.4 L113.6 188.1 L114.1 188.8 L114.6 189.4 L115.1 190.0 L115.7 190.5 L116.2 191.1 L116.7 191.6 L117.2 192.1 L117.7 192.6 L118.2 193.1 L118.7 193.5 L119.2 194.0 L119.7 194.4 L120.2 194.8 L120.7 195.2 L121.2 195.5 L121.7 195.9 L122.2 196.2 L122.7 196.6 L123.2 196.9 L123.7 197.2 L124.2 197.5 L124.8 197.8 L125.3 198.1 L125.8 198.4 L126.3 198.6 L126.8 198.9 L127.3 199.1 L127.8 199.4 L128.3 199.6 L128.8 199.8 L129.3 200.1 L129.8 200.3 L130.3 200.5 L130.8 200.7 L131.3 200.9 L131.8 201.1 L132.3 201.3 L132.8 201.4 L133.3 201.6 L133.9 201.8 L134.4 202.0 L134.9 202.1 L135.4 202.3 L135.9 202.4 L136.4 202.6 L136.9 202.7 L137.4 202.9 L137.9 203.0 L138.4 203.1 L138.9 203.3 L139.4 203.4 L139.9 203.5 L140.4 203.6 L140.9 203.8 L141.4 203.9 L141.9 204.0 L142.4 204.1 L143.0 204.2 L143.5 204.3 L144.0 204.4 L144.5 204.5 L145.0 204.6 L145.5 204.7 L146.0 204.8 L146.5 204.9 L147.0 205.0 L147.5 205.0 L148.0 205.1 L148.5 205.2 L149.0 205.3 L149.5 205.4 L150.0 205.4 L150.5 205.5 L151.0 205.6 L151.5 205.7 L152.1 205.7 L152.6 205.8 L153.1 205.9 L153.6 205.9 L154.1 206.0 L154.6 206.1 L155.1 206.1 L155.6 206.2 L156.1 206.2 L156.6 206.3 L157.1 206.3 L157.6 206.4 L158.1 206.4 L158.6 206.5 L159.1 206.5 L159.6 206.6 L160.1 206.6 L160.6 206.7 L161.1 206.7 L161.7 206.8 L162.2 206.8 L162.7 206.8 L163.2 206.9 L163.7 206.9 L164.2 207.0 L164.7 207.0 L165.2 207.0 L165.7 207.1 L166.2 207.1 L166.7 207.1 L167.2 207.2 L167.7 207.2 L168.2 207.2 L168.7 207.2 L169.2 207.3 L169.7 207.3 L170.2 207.3 L170.8 207.3 L171.3 207.4 L171.8 207.4 L172.3 207.4 L172.8 207.4 L173.3 207.5 L173.8 207.5 L174.3 207.5 L174.8 207.5 L175.3 207.5 L175.8 207.5 L176.3 207.6 L176.8 207.6 L177.3 207.6 L177.8 207.6 L178.3 207.6 L178.8 207.6 L179.3 207.6 L179.9 207.6 L180.4 207.6 L180.9 207.6 L181.4 207.7 L181.9 207.7 L182.4 207.7 L182.9 207.7 L183.4 207.7 L183.9 207.7 L184.4 207.7 L184.9 207.7" stroke="#c83838" stroke-width="1" fill="none"/><path d="M3.5 12.3 L3.6 12.3 L3.7 12.3 L3.8 12.3 L3.9 12.3 L4.0 12.3 L4.1 12.3 L4.2 12.3 L4.3 12.3 L4.4 12.3 L4.5 12.3 L4.6 12.3 L4.7 12.3 L4.8 12.3 L4.9 12.3 L5.1 12.3 L5.2 12.3 L5.3 12.3 L5.4 12.3 L5.5 12.3 L5.6 12.3 L5.7 12.3 L5.8 12.3 L5.9 12.3 L6.0 12.3 L6.1 12.3 L6.2 12.3 L6.3 12.3 L6.4 12.3 L6.5 12.3 L6.6 12.3 L6.7 12.3 L6.8 12.3 L6.9 12.3 L7.0 12.3 L7.1 12.3 L7.2 12.3 L7.3 12.3 L7.4 12.3 L7.5 12.3 L7.6 12.3 L7.7 12.3 L7.8 12.3 L7.9 12.4 L8.0 12.4 L8.1 12.4 L8.2 12.4 L8.3 12.4 L8.4 12.4 L8.5 12.4 L8.6 12.4 L8.7 12.4 L8.8 12.4 L8.9 12.4 L9.0 12.4 L9.1 12.4 L9.2 12.4 L9.3 12.4 L9.4 12.4 L9.5 12.4 L9.6 12.4 L9.7 12.4 L9.8 12.4 L9.9 12.4 L10.0 12.4 L10.1 12.4 L10.2 12.4 L10.3 12.4 L10.4 12.4 L10.5 12.4 L10.6 12.4 L10.7 12.4 L10.8 12.4 L10.9 12.4 L11.0 12.4 L11.1 12.4 L11.2 12.4 L11.3 12.4 L11.4 12.4 L11.5 12.4 L11.6 12.4 L11.7 12.4 L11.8 12.4 L11.9 12.4 L12.0 12.4 L12.1 12.4 L12.2 12.4 L12.3 12.4 L12.4 12.4 L12.5 12.4 L12.6 12.4 L12.7 12.5 L12.8 12.5 L12.9 12.5 L13.0 12.5 L13.1 12.5 L13.2 12.5 L13.3 12.5 L13.4 12.5 L14.0 12.5 L14.6 12.5 L15.1 12.5 L15.6 12.5 L16.1 12.6 L16.6 12.6 L17.1 12.6 L17.6 12.6 L18.1 12.7 L18.6 12.7 L19.1 12.7 L19.6 12.7 L20.1 12.8 L20.6 12.8 L21.1 12.8 L21.6 12.8 L22.1 12.9 L22.6 12.9 L23.1 12.9 L23.7 13.0 L24.2 13.0 L24.7 13.0 L25.2 13.1 L25.7 13.1 L26.2 13.2 L26.7 13.2 L27.2 13.2 L27.7 13.3 L28.2 13.3 L28.7 13.4 L29.2 13.4 L29.7 13.5 L30.2 13.5 L30.7 13.6 L31.2 13.6 L31.7 13.7 L32.2 13.7 L32.8 13.8 L33.3 13.8 L33.8 13.9 L34.3 13.9 L34.8 14.0 L35.3 14.1 L35.8 14.1 L36.3 14.2 L36.8 14.3 L37.3 14.3 L37.8 14.4 L38.3 14.5 L38.8 14.6 L39.3 14.6 L39.8 14.7 L40.3 14.8 L40.8 14.9 L41.3 15.0 L41.9 15.0 L42.4 15.1 L42.9 15.2 L43.4 15.3 L43.9 15.4 L44.4 15.5 L44.9 15.6 L45.4 15.7 L45.9 15.8 L46.4 15.9 L46.9 16.0 L47.4 16.1 L47.9 16.2 L48.4 16.4 L48.9 16.5 L49.4 16.6 L49.9 16.7 L50.4 16.9 L51.0 17.0 L51.5 17.1 L52.0 17.3 L52.5 17.4 L53.0 17.6 L53.5 17.7 L54.0 17.9 L54.5 18.0 L55.0 18.2 L55.5 18.4 L56.0 18.6 L56.5 18.7 L57.0 18.9 L57.5 19.1 L58.0 19.3 L58.5 19.5 L59.0 19.7 L59.5 19.9 L60.0 20.2 L60.6 20.4 L61.1 20.6 L61.6 20.9 L62.1 21.1 L62.6 21.4 L63.1 21.6 L63.6 21.9 L64.1 22.2 L64.6 22.5 L65.1 22.8 L65.6 23.1 L66.1 23.4 L66.6 23.8 L67.1 24.1 L67.6 24.5 L68.1 24.8 L68.6 25.2 L69.1 25.6 L69.7 26.0 L70.2 26.5 L70.7 26.9 L71.2 27.4 L71.7 27.9 L72.2 28.4 L72.7 28.9 L73.2 29.5 L73.7 30.0 L74.2 30.6 L74.7 31.2 L75.2 31.9 L75.7 32.6 L76.2 33.3 L76.7 34.0 L77.2 34.8 L77.7 35.6 L78.2 36.5 L78.8 37.4 L79.3 38.4 L79.8 39.4 L80.3 40.4 L80.8 41.5 L81.3 42.7 L81.8 43.9 L82.3 45.2 L82.8 46.6 L83.3 48.1 L83.8 49.6 L84.3 51.3 L84.8 53.0 L85.3 54.8 L85.8 56.8 L86.3 58.9 L86.8 61.0 L87.3 63.4 L87.9 65.8 L88.4 68.4 L88.9 71.2 L89.4 74.1 L89.9 77.1 L90.4 80.3 L90.9 83.6 L91.4 87.1 L91.9 90.7 L92.4 94.4 L92.9 98.2 L93.4 102.1 L93.9 106.0 L94.4 110.0 L94.9 114.0 L95.4 117.9 L95.9 121.8 L96.4 125.6 L97.0 129.3 L97.5 132.9 L98.0 136.4 L98.5 139.7 L99.0 142.9 L99.5 145.9 L100.0 148.8 L100.5 151.6 L101.0 154.2 L101.5 156.6 L102.0 159.0 L102.5 161.1 L103.0 163.2 L103.5 165.2 L104.0 167.0 L104.5 168.7 L105.0 170.4 L105.5 171.9 L106.0 173.4 L106.6 174.8 L107.1 176.1 L107.6 177.3 L108.1 178.5 L108.6 179.6 L109.1 180.6 L109.6 181.6 L110.1 182.6 L110.6 183.5 L111.1 184.4 L111.6 185.2 L112.1 186.0 L112.6 186.7 L113.1 187.4 L113.6 188.1 L114.1 188.8 L114.6 189.4 L115.1 190.0 L115.7 190.5 L116.2 191.1 L116.7 191.6 L117.2 192.1 L117.7 192.6 L118.2 193.1 L118.7 193.5 L119.2 194.0 L119.7 194.4 L120.2 194.8 L120.7 195.2 L121.2 195.5 L121.7 195.9 L122.2 196.2 L122.7 196.6 L123.2 196.9 L123.7 197.2 L124.2 197.5 L124.8 197.8 L125.3 198.1 L125.8 198.4 L126.3 198.6 L126.8 198.9 L127.3 199.1 L127.8 199.4 L128.3 199.6 L128.8 199.8 L129.3 200.1 L129.8 200.3 L130.3 200.5 L130.8 200.7 L131.3 200.9 L131.8 201.1 L132.3 201.3 L132.8 201.4 L133.3 201.6 L133.9 201.8 L134.4 202.0 L134.9 202.1 L135.4 202.3 L135.9 202.4 L136.4 202.6 L136.9 202.7 L137.4 202.9 L137.9 203.0 L138.4 203.1 L138.9 203.3 L139.4 203.4 L139.9 203.5 L140.4 203.6 L140.9 203.8 L141.4 203.9 L141.9 204.0 L142.4 204.1 L143.0 204.2 L143.5 204.3 L144.0 204.4 L144.5 204.5 L145.0 204.6 L145.5 204.7 L146.0 204.8 L146.5 204.9 L147.0 205.0 L147.5 205.0 L148.0 205.1 L148.5 205.2 L149.0 205.3 L149.5 205.4 L150.0 205.4 L150.5 205.5 L151.0 205.6 L151.5 205.7 L152.1 205.7 L152.6 205.8 L153.1 205.9 L153.6 205.9 L154.1 206.0 L154.6 206.1 L155.1 206.1 L155.6 206.2 L156.1 206.2 L156.6 206.3 L157.1 206.3 L157.6 206.4 L158.1 206.4 L158.6 206.5 L159.1 206.5 L159.6 206.6 L160.1 206.6 L160.6 206.7 L161.1 206.7 L161.7 206.8 L162.2 206.8 L162.7 206.8 L163.2 206.9 L163.7 206.9 L164.2 207.0 L164.7 207.0 L165.2 207.0 L165.7 207.1 L166.2 207.1 L166.7 207.1 L167.2 207.2 L167.7 207.2 L168.2 207.2 L168.7 207.2 L169.2 207.3 L169.7 207.3 L170.2 207.3 L170.8 207.3 L171.3 207.4 L171.8 207.4 L172.3 207.4 L172.8 207.4 L173.3 207.5 L173.8 207.5 L174.3 207.5 L174.8 207.5 L175.3 207.5 L175.8 207.5 L176.3 207.6 L176.8 207.6 L177.3 207.6 L177.8 207.6 L178.3 207.6 L178.8 207.6 L179.3 207.6 L179.9 207.6 L180.4 207.6 L180.9 207.6 L181.4 207.7 L181.9 207.7 L182.4 207.7 L182.9 207.7 L183.4 207.7 L183.9 207.7 L184.4 207.7 L184.9 207.7" stroke="#f0f0f0" stroke-width="1" fill="none" stroke-dasharray="2.5 4"/><path d="M0.0 157.0 L5.0 132.0 L10.0 112.0 L16.0 87.0 L23.0 67.0 L29.0 47.0" stroke="#e07070" stroke-width="1" fill="none"/><path d="M29.0 47.0 L34.0 34.0 L40.5 24.0 L48.0 18.5 L55.5 16.0 L68.0 13.0 L79.0 11.0 L113.0 10.0 L143.0 13.0 L153.0 14.0 L168.0 25.0 L187.6 41.0" stroke="#e8e060" stroke-width="1" fill="none"/><path d="M163.0 41.5 L173.0 72.0 L179.7 112.0 L185.0 142.0 L191.0 172.0 L201.0 189.0 L218.0 200.0 L233.0 204.6 L278.0 206.9 L323.0 207.0" stroke="#e8e060" stroke-width="1" fill="none"/><path d="M143 18 C 153 10, 213 8, 229 18 C 239 26, 235 40, 217 56 C 207 66, 187 72, 171 62 C 155 52, 135 28, 143 18Z" stroke="#f0f0f0" stroke-width="1" fill="none"/><circle cx="185.79999999999995" cy="98.5" r="6.2" fill="#ffff00"/><circle cx="79" cy="11" r="2" fill="#ffff30"/><circle cx="187.60000000000002" cy="41" r="2" fill="#ffffff"/><circle cx="130" cy="66.6" r="2" fill="#ffff30"/><circle cx="150" cy="80" r="2" fill="#ffff30"/><circle cx="134" cy="87" r="2" fill="#ffff30"/><circle cx="201.60000000000002" cy="109" r="2" fill="#ffff30"/><circle cx="139" cy="132.6" r="2" fill="#ffff30"/><circle cx="135.39999999999998" cy="166.6" r="2" fill="#ffff30"/><circle cx="132" cy="178" r="2" fill="#ffff30"/><circle cx="303" cy="188" r="2" fill="#ffff30"/><circle cx="321" cy="71" r="2" fill="#ff8080"/><circle cx="320" cy="85" r="2" fill="#ff8080"/></svg>
<div style="left:561.5px;top:36.32px;font-size:7.2px;line-height:9.36px;color:#f4f4f4;white-space:pre;transform:scaleX(0.88);transform-origin:0 50%;letter-spacing:0.1px;">SAMSAT-IONOSPHERE (RS75S)</div>
<div style="left:670.0px;top:66.32px;font-size:7.2px;line-height:9.36px;color:#f4f4f4;white-space:pre;transform:scaleX(0.88);transform-origin:0 50%;letter-spacing:0.1px;">DX1</div>
<div style="left:688.0px;top:67.32px;font-size:7.2px;line-height:9.36px;color:#f4f4f4;white-space:pre;transform:scaleX(0.88);transform-origin:0 50%;letter-spacing:0.1px;">+ R3DDF</div>
<div style="left:611.5px;top:91.32px;font-size:7.2px;line-height:9.36px;color:#f4f4f4;white-space:pre;transform:scaleX(0.88);transform-origin:0 50%;letter-spacing:0.1px;">COLUBRI-5 (RS57S)</div>
<div style="left:631.5px;top:104.32px;font-size:7.2px;line-height:9.36px;color:#f4f4f4;white-space:pre;transform:scaleX(0.88);transform-origin:0 50%;letter-spacing:0.1px;">VIZARD-METEO (RS38S)</div>
<div style="left:615.5px;top:111.32px;font-size:7.2px;line-height:9.36px;color:#f4f4f4;white-space:pre;transform:scaleX(0.88);transform-origin:0 50%;letter-spacing:0.1px;">VIZARD-ION (RS68S)</div>
<div style="left:682.5px;top:134.32px;font-size:7.2px;line-height:9.36px;color:#f4f4f4;white-space:pre;transform:scaleX(0.88);transform-origin:0 50%;letter-spacing:0.1px;">ESHAIL-2</div>
<div style="left:621.5px;top:157.32px;font-size:7.2px;line-height:9.36px;color:#f4f4f4;white-space:pre;transform:scaleX(0.88);transform-origin:0 50%;letter-spacing:0.1px;">ARCTICSAT-1 (RS74S)</div>
<div style="left:616.5px;top:191.32px;font-size:7.2px;line-height:9.36px;color:#f4f4f4;white-space:pre;transform:scaleX(0.88);transform-origin:0 50%;letter-spacing:0.1px;">MONITOR-3 (RS59S)</div>
<div style="left:613.5px;top:202.32px;font-size:7.2px;line-height:9.36px;color:#f4f4f4;white-space:pre;transform:scaleX(0.88);transform-origin:0 50%;letter-spacing:0.1px;">MONITOR-4 (RS57S)</div>
<div style="left:733.5px;top:95.32px;font-size:7.2px;line-height:9.36px;color:#f4f4f4;white-space:pre;transform:scaleX(0.88);transform-origin:0 50%;letter-spacing:0.1px;">TUSUR GO (RS78S)</div>
<div style="left:729.5px;top:103.32px;font-size:7.2px;line-height:9.36px;color:#f4f4f4;white-space:pre;transform:scaleX(0.88);transform-origin:0 50%;letter-spacing:0.1px;">NANOZOND-1 (RS49S)</div>
<div style="left:724.5px;top:109.32px;font-size:7.2px;line-height:9.36px;color:#f4f4f4;white-space:pre;transform:scaleX(0.88);transform-origin:0 50%;letter-spacing:0.1px;">RTU MIREA-1 (RS51S)</div>
<div style="left:727.5px;top:167.32px;font-size:7.2px;line-height:9.36px;color:#f4f4f4;white-space:pre;transform:scaleX(0.88);transform-origin:0 50%;letter-spacing:0.1px;">STRATOSAT-TK1 (RS52S)</div>
<div style="left:739.5px;top:185.32px;font-size:7.2px;line-height:9.36px;color:#f4f4f4;white-space:pre;transform:scaleX(0.88);transform-origin:0 50%;letter-spacing:0.1px;">ORBICRAFT-ZORKY</div>
<div style="left:717.5px;top:213.32px;font-size:7.2px;line-height:9.36px;color:#f4f4f4;white-space:pre;transform:scaleX(0.88);transform-origin:0 50%;letter-spacing:0.1px;">HORIZON (RS59S)  SONATA-1 (RS</div>
<div style="left:334px;width:300px;text-align:center;top:20.75px;font-size:5px;line-height:6.5px;color:#ccc;white-space:pre;">W</div>
<div style="left:350px;width:300px;text-align:center;top:20.75px;font-size:5px;line-height:6.5px;color:#ccc;white-space:pre;">150</div>
<div style="left:381px;width:300px;text-align:center;top:20.75px;font-size:5px;line-height:6.5px;color:#ccc;white-space:pre;">120</div>
<div style="left:411px;width:300px;text-align:center;top:20.75px;font-size:5px;line-height:6.5px;color:#ccc;white-space:pre;">90</div>
<div style="left:441px;width:300px;text-align:center;top:20.75px;font-size:5px;line-height:6.5px;color:#ccc;white-space:pre;">60</div>
<div style="left:471.5px;width:300px;text-align:center;top:20.75px;font-size:5px;line-height:6.5px;color:#ccc;white-space:pre;">30</div>
<div style="left:487px;width:300px;text-align:center;top:20.75px;font-size:5px;line-height:6.5px;color:#ccc;white-space:pre;">W</div>
<div style="left:502.6px;width:300px;text-align:center;top:20.75px;font-size:5px;line-height:6.5px;color:#ccc;white-space:pre;">0</div>
<div style="left:517px;width:300px;text-align:center;top:20.75px;font-size:5px;line-height:6.5px;color:#ccc;white-space:pre;">E</div>
<div style="left:533px;width:300px;text-align:center;top:20.75px;font-size:5px;line-height:6.5px;color:#ccc;white-space:pre;">30</div>
<div style="left:563px;width:300px;text-align:center;top:20.75px;font-size:5px;line-height:6.5px;color:#ccc;white-space:pre;">60</div>
<div style="left:593.5px;width:300px;text-align:center;top:20.75px;font-size:5px;line-height:6.5px;color:#ccc;white-space:pre;">90</div>
<div style="left:624px;width:300px;text-align:center;top:20.75px;font-size:5px;line-height:6.5px;color:#ccc;white-space:pre;">120</div>
<div style="left:322.5px;width:300px;text-align:center;top:43.75px;font-size:5px;line-height:6.5px;color:#ccc;white-space:pre;">N</div>
<div style="left:322.5px;width:300px;text-align:center;top:61.75px;font-size:5px;line-height:6.5px;color:#ccc;white-space:pre;">60</div>
<div style="left:322.5px;width:300px;text-align:center;top:97.75px;font-size:5px;line-height:6.5px;color:#ccc;white-space:pre;">30</div>
<div style="left:322.5px;width:300px;text-align:center;top:116.75px;font-size:5px;line-height:6.5px;color:#ccc;white-space:pre;">N</div>
<div style="left:322.5px;width:300px;text-align:center;top:134.75px;font-size:5px;line-height:6.5px;color:#ccc;white-space:pre;">0</div>
<div style="left:322.5px;width:300px;text-align:center;top:152.75px;font-size:5px;line-height:6.5px;color:#ccc;white-space:pre;">S</div>
<div style="left:322.5px;width:300px;text-align:center;top:170.75px;font-size:5px;line-height:6.5px;color:#ccc;white-space:pre;">30</div>
<div style="left:322.5px;width:300px;text-align:center;top:206.75px;font-size:5px;line-height:6.5px;color:#ccc;white-space:pre;">60</div>
<div style="left:322.5px;width:300px;text-align:center;top:223.75px;font-size:5px;line-height:6.5px;color:#ccc;white-space:pre;">S</div>
<div style="left:477px;top:247.71px;font-size:6.6px;line-height:8.58px;color:#fff;white-space:pre;">Podolsk: 37,5417° E, 55,4375° N</div>
<div style="left:745px;top:247.58px;font-size:6.8px;line-height:8.84px;color:#fff;white-space:pre;">2025-04-12 14:18:47</div>
<div style="left:468px;top:258px;width:9px;height:114px;background:#000;"></div>
<div style="left:477px;top:259.5px;width:323px;height:101.5px;background:#f0f0f0;"></div>
<div style="left:477px;top:361px;width:323px;height:11px;background:#f0f0f0;"></div>
<div style="left:549.5px;top:278.5px;width:64.5px;height:42.5px;border:1px solid #b0b0b0;box-shadow:1px 1px 0 #fff inset,1px 1px 0 #fff;"></div>
<div style="left:553.5px;top:273.95px;font-size:7px;line-height:9.1px;color:#333;white-space:pre;background:#f0f0f0;padding:0 1px;">Режим</div>
<div style="left:552.5px;top:288.5px;width:7.0px;height:7.0px;border-radius:50%;border:1px solid #888;background:#fff;"><div style="left:2.3px;top:2.3px;width:2.4px;height:2.4px;border-radius:50%;background:#222;"></div></div>
<div style="left:565px;top:287.45px;font-size:7px;line-height:9.1px;color:#333;white-space:pre;">Сейчас</div>
<div style="left:552.5px;top:306.5px;width:7.0px;height:7.0px;border-radius:50%;border:1px solid #888;background:#fff;"></div>
<div style="left:565px;top:305.45px;font-size:7px;line-height:9.1px;color:#333;white-space:pre;">Симуляция</div>
<div style="left:624px;top:279.5px;width:70px;height:11px;background:#fff;border:1px solid #a0a0a0;border-right-color:#e0e0e0;border-bottom-color:#e0e0e0;"></div>
<div style="left:626px;top:280.45px;font-size:7px;line-height:9.1px;color:#909090;white-space:pre;">2025-04-12 14:18:47</div>
<div style="left:624px;top:295px;width:28px;height:11px;background:#f4f4f4;border:1px solid #b8b8b8;"></div>
<div style="left:626px;top:295.95px;font-size:7px;line-height:9.1px;color:#999;white-space:pre;">10</div>
<div style="left:643px;top:296px;width:8px;height:9px;background:#e0e0e0;border:1px solid #c8c8c8;"></div>
<svg style="left:644.0px;top:298.55px" width="6" height="4.5" viewBox="644.0 298.55 6 4.5"><path d="M645.0 299.55 L649.0 299.55 L647 302.05Z" fill="#aaa"/></svg>
<div style="left:655px;top:295px;width:39px;height:11px;background:#f4f4f4;border:1px solid #b8b8b8;"></div>
<div style="left:657px;top:296.6px;font-size:6px;line-height:7.8px;color:#999;white-space:pre;">минуты</div>
<div style="left:685px;top:296px;width:8px;height:9px;background:#e0e0e0;border:1px solid #c8c8c8;"></div>
<svg style="left:686.0px;top:298.55px" width="6" height="4.5" viewBox="686.0 298.55 6 4.5"><path d="M687.0 299.55 L691.0 299.55 L689 302.05Z" fill="#aaa"/></svg>
<div style="left:627px;top:311.77px;font-size:6.5px;line-height:8.45px;color:#b8b8b8;white-space:pre;">&lt;&lt;&lt;</div>
<div style="left:651px;top:311.77px;font-size:6.5px;line-height:8.45px;color:#b8b8b8;white-space:pre;">&lt;</div>
<div style="left:667px;top:311.77px;font-size:6.5px;line-height:8.45px;color:#b8b8b8;white-space:pre;">&gt;</div>
<div style="left:680px;top:311.77px;font-size:6.5px;line-height:8.45px;color:#b8b8b8;white-space:pre;">&gt;&gt;&gt;</div>
<div style="left:704.8px;top:278.5px;width:65.20000000000005px;height:42.5px;border:1px solid #b0b0b0;box-shadow:1px 1px 0 #fff inset,1px 1px 0 #fff;"></div>
<div style="left:708.8px;top:273.95px;font-size:7px;line-height:9.1px;color:#333;white-space:pre;background:#f0f0f0;padding:0 1px;">Время</div>
<div style="left:708.5px;top:288.5px;width:7.0px;height:7.0px;border-radius:50%;border:1px solid #888;background:#fff;"><div style="left:2.3px;top:2.3px;width:2.4px;height:2.4px;border-radius:50%;background:#222;"></div></div>
<div style="left:719px;top:287.45px;font-size:7px;line-height:9.1px;color:#333;white-space:pre;">Местное</div>
<div style="left:708.5px;top:306.5px;width:7.0px;height:7.0px;border-radius:50%;border:1px solid #888;background:#fff;"></div>
<div style="left:719px;top:305.45px;font-size:7px;line-height:9.1px;color:#333;white-space:pre;">UTC</div>
<div style="left:536px;top:333px;width:1px;height:20px;background:#a8a8a8;border-right:1px solid #fff;width:2px;"></div>
<div style="left:602.6px;top:333px;width:1px;height:20px;background:#a8a8a8;border-right:1px solid #fff;width:2px;"></div>
<div style="left:670px;top:333px;width:1px;height:20px;background:#a8a8a8;border-right:1px solid #fff;width:2px;"></div>
<div style="left:733.2px;top:333px;width:1px;height:20px;background:#a8a8a8;border-right:1px solid #fff;width:2px;"></div>
<div style="left:779.7px;top:333px;width:1px;height:20px;background:#a8a8a8;border-right:1px solid #fff;width:2px;"></div>
<svg style="left:540px;top:336px" width="260" height="16" viewBox="540 336 260 16"><path d="M541 345 L547 338 L553 341 L547 349Z" fill="#8a2040"/><path d="M541 345 L547 349 L547 350.5 L541 346.5Z" fill="#d0a0b0"/><rect x="556.5" y="340.5" width="10" height="6.5" fill="#606060" stroke="#202020" stroke-width="0.8"/><circle cx="561.5" cy="343.7" r="2" fill="#303030" stroke="#ddd" stroke-width="0.6"/><rect x="573" y="338.5" width="10" height="10" fill="#f8f8f8" stroke="#555" stroke-width="0.8"/><rect x="575" y="345" width="6" height="1.5" fill="#222"/><rect x="587.5" y="338.5" width="10" height="10" fill="#f8f8f8" stroke="#555" stroke-width="0.8"/><path d="M590 341 L595 346 M595 341 L590 346" stroke="#222" stroke-width="1.3"/><path d="M606 348 L614 340 M609 339 L617 347 M607 339 L611 339 L611 342 M614 348 L617 345" stroke="#202020" stroke-width="2" fill="none"/><path d="M622 340 L627 340 L628 341.5 L634 341.5 L634 348 L622 348Z" fill="#c8b040" stroke="#6a5a10" stroke-width="0.7"/><path d="M623 343.5 L636 343.5 L634 348 L622 348Z" fill="#a0c040"/><rect x="638.5" y="338.5" width="10" height="10" fill="#303030"/><rect x="640.5" y="339" width="6" height="3.5" fill="#b0b0a0"/><rect x="640" y="344.5" width="7" height="3.5" fill="#707060"/><circle cx="658.5" cy="343.5" r="5.3" fill="#0a1a9a"/><rect x="657.8" y="342" width="1.6" height="4.5" fill="#fff"/><rect x="657.8" y="339.5" width="1.6" height="1.5" fill="#fff"/><rect x="673" y="338.5" width="9" height="10" fill="#1a1a1a"/><rect x="680" y="344" width="3" height="4" fill="#eee"/><rect x="688.5" y="338.5" width="10" height="10" fill="#e8e8e8" stroke="#222" stroke-width="1"/><rect x="688.5" y="338.5" width="10" height="3" fill="#222"/><path d="M690 345 h2 M694 345 h2 M690 347 h2 M694 347 h2" stroke="#222"/><rect x="702.5" y="338.5" width="10" height="10" fill="#eee" stroke="#222" stroke-width="1"/><rect x="702.5" y="338.5" width="5" height="5" fill="#222"/><rect x="707.5" y="343.5" width="5" height="5" fill="#222"/><path d="M718 339 L726 348 M726 339 L718 348" stroke="#222" stroke-width="1.8"/><circle cx="771.5" cy="343.5" r="5.5" fill="#fff" stroke="#804040" stroke-width="1"/><path d="M771.5 340 L771.5 343.5 L774 345" stroke="#222" stroke-width="0.9" fill="none"/></svg>
<div style="left:736px;top:337px;width:27px;height:13px;background:#fff;border:1px solid #888;border-right-color:#ddd;border-bottom-color:#ddd;"></div>
<div style="left:739px;top:338.62px;font-size:7.5px;line-height:9.75px;color:#222;white-space:pre;">1</div>
<div style="left:752px;top:338.5px;width:10px;height:10px;background:#e8e8e8;border:1px solid #a0a0a0;"></div>
<svg style="left:753.5px;top:341.5px" width="7" height="5" viewBox="753.5 341.5 7 5"><path d="M754.5 342.5 L759.5 342.5 L757 345.5Z" fill="#111"/></svg>
<div style="left:468px;top:361px;width:332px;height:13px;background:#000;"></div>
<div style="left:481px;top:362px;width:29.5px;height:9px;background:#ffffff;border-radius:0 0 4px 3px;transform:skewX(-12deg);"></div>
<div style="left:483px;top:361.75px;font-size:7px;line-height:9.1px;color:#111;white-space:pre;width:27.5px;text-align:center;">Главное</div>
<div style="left:512px;top:362px;width:45.5px;height:9px;background:#f6f6f6;border-radius:0 0 4px 3px;transform:skewX(-12deg);"></div>
<div style="left:514px;top:361.75px;font-size:7px;line-height:9.1px;color:#111;white-space:pre;width:43.5px;text-align:center;">Отображение</div>
<div style="left:559px;top:362px;width:23px;height:9px;background:#f6f6f6;border-radius:0 0 4px 3px;transform:skewX(-12deg);"></div>
<div style="left:561px;top:361.75px;font-size:7px;line-height:9.1px;color:#111;white-space:pre;width:21px;text-align:center;">Место</div>
<div style="left:584px;top:362px;width:45px;height:9px;background:#f6f6f6;border-radius:0 0 4px 3px;transform:skewX(-12deg);"></div>
<div style="left:586px;top:361.75px;font-size:7px;line-height:9.1px;color:#111;white-space:pre;width:43px;text-align:center;">Информация</div>
<div style="left:630px;top:362px;width:64.5px;height:9px;background:#f6f6f6;border-radius:0 0 4px 3px;transform:skewX(-12deg);"></div>
<div style="left:632px;top:361.75px;font-size:7px;line-height:9.1px;color:#111;white-space:pre;width:62.5px;text-align:center;">Настройки расчета</div>
<div style="left:696px;top:362px;width:24px;height:9px;background:#f6f6f6;border-radius:0 0 4px 3px;transform:skewX(-12deg);"></div>
<div style="left:698px;top:361.75px;font-size:7px;line-height:9.1px;color:#111;white-space:pre;width:22px;text-align:center;">Расчет</div>
<div style="left:721.5px;top:362px;width:45.5px;height:9px;background:#f6f6f6;border-radius:0 0 4px 3px;transform:skewX(-12deg);"></div>
<div style="left:723.5px;top:361.75px;font-size:7px;line-height:9.1px;color:#111;white-space:pre;width:43.5px;text-align:center;">Ротор/Радио</div>
<div style="left:768.5px;top:362px;width:46.5px;height:9px;background:#f6f6f6;border-radius:0 0 4px 3px;transform:skewX(-12deg);"></div>
<div style="left:770.5px;top:361.75px;font-size:7px;line-height:9.1px;color:#111;white-space:pre;width:44.5px;text-align:center;">О программе</div>
<div style="left:0px;top:306px;width:468px;height:19px;background:#fff;border-top:1px solid #c8c8c8;"></div>
<svg style="left:5px;top:311px" width="10" height="10" viewBox="0 0 10 10"><rect width="10" height="10" fill="#1a4aa0"/><path d="M1.5 7 C1.5 3,5 3,5 5.5 C5 8,8.5 7,8.5 3" stroke="#fff" stroke-width="1" fill="none"/></svg>
<div style="left:287px;width:300px;text-align:center;top:311.45px;font-size:7px;line-height:9.1px;color:#999;white-space:pre;">—</div>
<div style="left:461px;top:312px;width:7px;height:7px;border:1px solid #999;"></div>
<div style="left:18px;top:311.58px;font-size:6.8px;line-height:8.84px;color:#a8a8a8;white-space:pre;">SDR# v1.0.0.1700 - RTL-SDR (USB)</div>
<div style="left:0px;top:325px;width:468px;height:302px;background:#f0f0f0;"></div>
<svg style="left:0px;top:330px" width="470" height="30" viewBox="0 330 470 30"><rect x="10" y="339.5" width="15" height="2.6" fill="#111"/><rect x="10" y="344.8" width="15" height="2.6" fill="#111"/><rect x="10" y="350" width="15" height="2.6" fill="#111"/><rect x="35" y="341" width="10" height="10" fill="#111"/><circle cx="62" cy="346" r="4.6" fill="#222"/><circle cx="62" cy="346" r="1.6" fill="#f0f0f0"/><rect x="60.6" y="338.6" width="2.8" height="3" fill="#222" transform="rotate(0 62 346)"/><rect x="60.6" y="338.6" width="2.8" height="3" fill="#222" transform="rotate(45 62 346)"/><rect x="60.6" y="338.6" width="2.8" height="3" fill="#222" transform="rotate(90 62 346)"/><rect x="60.6" y="338.6" width="2.8" height="3" fill="#222" transform="rotate(135 62 346)"/><rect x="60.6" y="338.6" width="2.8" height="3" fill="#222" transform="rotate(180 62 346)"/><rect x="60.6" y="338.6" width="2.8" height="3" fill="#222" transform="rotate(225 62 346)"/><rect x="60.6" y="338.6" width="2.8" height="3" fill="#222" transform="rotate(270 62 346)"/><rect x="60.6" y="338.6" width="2.8" height="3" fill="#222" transform="rotate(315 62 346)"/><path d="M76 343 L79 343 L84 339 L84 353 L79 349 L76 349Z" fill="#222"/><path d="M86.5 342.5 Q88.5 346 86.5 349.5" stroke="#222" stroke-width="1.3" fill="none"/><path d="M88.5 340 Q92 346 88.5 352" stroke="#222" stroke-width="1.3" fill="none"/><rect x="100" y="344.5" width="74" height="1.2" fill="#d8d8d8"/><rect x="104" y="337.5" width="1" height="1" fill="#d0d0d0"/><rect x="104" y="352.5" width="1" height="1" fill="#d0d0d0"/><rect x="114" y="337.5" width="1" height="1" fill="#d0d0d0"/><rect x="114" y="352.5" width="1" height="1" fill="#d0d0d0"/><rect x="124" y="337.5" width="1" height="1" fill="#d0d0d0"/><rect x="124" y="352.5" width="1" height="1" fill="#d0d0d0"/><rect x="134" y="337.5" width="1" height="1" fill="#d0d0d0"/><rect x="134" y="352.5" width="1" height="1" fill="#d0d0d0"/><rect x="144" y="337.5" width="1" height="1" fill="#d0d0d0"/><rect x="144" y="352.5" width="1" height="1" fill="#d0d0d0"/><rect x="154" y="337.5" width="1" height="1" fill="#d0d0d0"/><rect x="154" y="352.5" width="1" height="1" fill="#d0d0d0"/><rect x="164" y="337.5" width="1" height="1" fill="#d0d0d0"/><rect x="164" y="352.5" width="1" height="1" fill="#d0d0d0"/><rect x="172" y="339.5" width="5" height="11" fill="#1a78d8"/><path d="M358 346 L364 341.5 L364 350.5Z M374 346 L368 341.5 L368 350.5Z" fill="#111"/></svg>
<div style="left:186px;top:334.0px;font-size:17.5px;line-height:24px;color:#b8b8b8;white-space:pre;">0</div>
<div style="left:197.93px;top:334.0px;font-size:17.5px;line-height:24px;color:#b8b8b8;white-space:pre;">0</div>
<div style="left:209.87px;top:334.0px;font-size:17.5px;line-height:24px;color:#b8b8b8;white-space:pre;">0</div>
<div style="left:221.8px;top:334.0px;font-size:17.5px;line-height:24px;color:#b8b8b8;white-space:pre;">.</div>
<div style="left:229.5px;top:334.0px;font-size:17.5px;line-height:24px;color:#222;white-space:pre;">4</div>
<div style="left:241.48px;top:334.0px;font-size:17.5px;line-height:24px;color:#222;white-space:pre;">3</div>
<div style="left:253.47px;top:334.0px;font-size:17.5px;line-height:24px;color:#222;white-space:pre;">8</div>
<div style="left:265.45px;top:334.0px;font-size:17.5px;line-height:24px;color:#222;white-space:pre;">.</div>
<div style="left:272.56px;top:334.0px;font-size:17.5px;line-height:24px;color:#222;white-space:pre;">2</div>
<div style="left:284.54px;top:334.0px;font-size:17.5px;line-height:24px;color:#222;white-space:pre;">2</div>
<div style="left:296.53px;top:334.0px;font-size:17.5px;line-height:24px;color:#222;white-space:pre;">4</div>
<div style="left:308.51px;top:334.0px;font-size:17.5px;line-height:24px;color:#222;white-space:pre;">.</div>
<div style="left:315.62px;top:334.0px;font-size:17.5px;line-height:24px;color:#222;white-space:pre;">2</div>
<div style="left:327.6px;top:334.0px;font-size:17.5px;line-height:24px;color:#222;white-space:pre;">7</div>
<div style="left:339.59px;top:334.0px;font-size:17.5px;line-height:24px;color:#222;white-space:pre;">9</div>
<div style="left:436.5px;top:343.5px;font-size:14px;line-height:14px;color:#fafafa;white-space:pre;font-family:Liberation Serif,serif;font-weight:bold;text-shadow:1px 1px 1px #333,-0.5px -0.5px 0 #666;letter-spacing:-1px;">AIRS</div>
<div style="left:6.4px;top:362px;width:136px;height:14.399999999999977px;background:linear-gradient(#5c5c5c,#2c2c2c);"></div>
<svg style="left:10.0px;top:365.5px" width="8" height="8" viewBox="10.0 365.5 8 8"><path d="M11.0 366.5 L17.0 366.5 L14 372.5Z" fill="#fff"/></svg>
<div style="left:24.6px;top:364.71px;font-size:6.9px;line-height:8.97px;color:#e8e8e8;white-space:pre;">Source: RTL-SDR (USB)</div>
<div style="left:8.4px;top:379px;width:132px;height:12.6px;background:#e6e6e6;border:1px solid #dadada;"></div>
<div style="left:10.6px;top:381.01px;font-size:6.6px;line-height:8.58px;color:#333;white-space:pre;">RTL-SDR (USB)</div>
<svg style="left:131.5px;top:383.0px" width="7" height="4.6" viewBox="131.5 383.0 7 4.6"><path d="M132.5 384.0 L135 386.6 L137.5 384.0" stroke="#555" stroke-width="0.9" fill="none"/></svg>
<div style="left:6.4px;top:393.4px;width:136px;height:14.0px;background:linear-gradient(#5c5c5c,#2c2c2c);"></div>
<svg style="left:10.0px;top:396.7px" width="8" height="8" viewBox="10.0 396.7 8 8"><path d="M11.0 397.7 L17.0 397.7 L14 403.7Z" fill="#fff"/></svg>
<div style="left:24.6px;top:395.91px;font-size:6.9px;line-height:8.97px;color:#e8e8e8;white-space:pre;">Radio</div>
<div style="left:10px;top:418px;width:8px;height:8px;border-radius:50%;border:1px solid #444;background:#fff;"><div style="left:1.3px;top:1.3px;width:3.4px;height:3.4px;border-radius:50%;background:#333;"></div></div>
<div style="left:20.6px;top:417.58px;font-size:6.8px;line-height:8.84px;color:#333;white-space:pre;">NFM</div>
<div style="left:43.4px;top:418px;width:8px;height:8px;border-radius:50%;border:1px solid #444;background:#fff;"></div>
<div style="left:54.0px;top:417.58px;font-size:6.8px;line-height:8.84px;color:#333;white-space:pre;">AM</div>
<div style="left:74.4px;top:418px;width:8px;height:8px;border-radius:50%;border:1px solid #444;background:#fff;"></div>
<div style="left:85.0px;top:417.58px;font-size:6.8px;line-height:8.84px;color:#333;white-space:pre;">LSB</div>
<div style="left:104.6px;top:418px;width:8px;height:8px;border-radius:50%;border:1px solid #444;background:#fff;"></div>
<div style="left:115.19999999999999px;top:417.58px;font-size:6.8px;line-height:8.84px;color:#333;white-space:pre;">USB</div>
<div style="left:10px;top:444px;width:8px;height:8px;border-radius:50%;border:1px solid #444;background:#fff;"></div>
<div style="left:20.6px;top:443.58px;font-size:6.8px;line-height:8.84px;color:#333;white-space:pre;">WFM</div>
<div style="left:43.4px;top:444px;width:8px;height:8px;border-radius:50%;border:1px solid #444;background:#fff;"></div>
<div style="left:54.0px;top:443.58px;font-size:6.8px;line-height:8.84px;color:#333;white-space:pre;">DSB</div>
<div style="left:74.4px;top:444px;width:8px;height:8px;border-radius:50%;border:1px solid #444;background:#fff;"></div>
<div style="left:85.0px;top:443.58px;font-size:6.8px;line-height:8.84px;color:#333;white-space:pre;">CW</div>
<div style="left:104.6px;top:444px;width:8px;height:8px;border-radius:50%;border:1px solid #444;background:#fff;"></div>
<div style="left:115.19999999999999px;top:443.58px;font-size:6.8px;line-height:8.84px;color:#333;white-space:pre;">RAW</div>
<div style="left:8.4px;top:468.4px;width:8px;height:8px;border:1px solid #333;background:#fff;"></div>
<div style="left:19px;top:467.58px;font-size:6.8px;line-height:8.84px;color:#444;white-space:pre;">Shift</div>
<div style="left:40px;top:465.4px;width:100.6px;height:14px;background:#ececec;border:1px solid #d8d8d8;"></div>
<div style="right:669px;top:465.9px;font-size:10px;line-height:13.0px;color:#444;white-space:pre;">9 749 974 000</div>
<div style="left:-15px;width:300px;text-align:center;top:465.1px;font-size:6px;line-height:7.8px;color:#666;white-space:pre;">˄</div>
<div style="left:-15px;width:300px;text-align:center;top:472.1px;font-size:6px;line-height:7.8px;color:#666;white-space:pre;">˅</div>
<div style="left:10px;top:485.58px;font-size:6.8px;line-height:8.84px;color:#333;white-space:pre;">Filter</div>
<div style="left:40px;top:483.6px;width:100.6px;height:12.4px;background:#e0e0e0;border:1px solid #d4d4d4;"></div>
<div style="left:42.6px;top:485.7px;font-size:6.3px;line-height:8.19px;color:#222;white-space:pre;">Blackman-Harris 4</div>
<svg style="left:131.5px;top:487.5px" width="7" height="4.6" viewBox="131.5 487.5 7 4.6"><path d="M132.5 488.5 L135 491.1 L137.5 488.5" stroke="#555" stroke-width="0.9" fill="none"/></svg>
<div style="left:10px;top:498.58px;font-size:6.8px;line-height:8.84px;color:#333;white-space:pre;">Bandwidth</div>
<div style="left:77px;top:498.58px;font-size:6.8px;line-height:8.84px;color:#333;white-space:pre;">Order</div>
<div style="left:8.4px;top:510.6px;width:62.6px;height:11.399999999999977px;background:#fff;border:1px solid #d0d0d0;"></div>
<div style="left:62.5px;top:511.6px;width:7.5px;height:9.399999999999977px;background:#e6e6e6;"></div>
<div style="right:738.5px;top:511.88px;font-size:6.8px;line-height:8.84px;color:#333;white-space:pre;">13 070</div>
<div style="left:-83.7px;width:300px;text-align:center;top:510.22px;font-size:5.5px;line-height:7.15px;color:#666;white-space:pre;">˄</div>
<div style="left:-83.7px;width:300px;text-align:center;top:515.72px;font-size:5.5px;line-height:7.15px;color:#666;white-space:pre;">˅</div>
<div style="left:76px;top:510.6px;width:64.6px;height:11.399999999999977px;background:#fff;border:1px solid #d0d0d0;"></div>
<div style="left:132.1px;top:511.6px;width:7.5px;height:9.399999999999977px;background:#e6e6e6;"></div>
<div style="right:668.9px;top:511.88px;font-size:6.8px;line-height:8.84px;color:#333;white-space:pre;">160</div>
<div style="left:-14.099999999999994px;width:300px;text-align:center;top:510.22px;font-size:5.5px;line-height:7.15px;color:#666;white-space:pre;">˄</div>
<div style="left:-14.099999999999994px;width:300px;text-align:center;top:515.72px;font-size:5.5px;line-height:7.15px;color:#666;white-space:pre;">˅</div>
<div style="left:8.4px;top:527.2px;width:8px;height:8px;border:1px solid #333;background:#fff;"></div>
<div style="left:19px;top:526.58px;font-size:6.8px;line-height:8.84px;color:#333;white-space:pre;">Squelch</div>
<div style="left:77px;top:526.58px;font-size:6.8px;line-height:8.84px;color:#555;white-space:pre;">CW Shift</div>
<div style="left:8.4px;top:540px;width:62.6px;height:12px;background:#f0f0f0;border:1px solid #dcdcdc;"></div>
<div style="left:62.5px;top:541px;width:7.5px;height:10px;background:#e6e6e6;"></div>
<div style="right:738.5px;top:541.58px;font-size:6.8px;line-height:8.84px;color:#b0b0b0;white-space:pre;">60</div>
<div style="left:-83.7px;width:300px;text-align:center;top:539.92px;font-size:5.5px;line-height:7.15px;color:#666;white-space:pre;">˄</div>
<div style="left:-83.7px;width:300px;text-align:center;top:545.42px;font-size:5.5px;line-height:7.15px;color:#666;white-space:pre;">˅</div>
<div style="left:76px;top:540px;width:64.6px;height:12px;background:#f0f0f0;border:1px solid #dcdcdc;"></div>
<div style="left:132.1px;top:541px;width:7.5px;height:10px;background:#e6e6e6;"></div>
<div style="right:668.9px;top:541.58px;font-size:6.8px;line-height:8.84px;color:#b0b0b0;white-space:pre;">1 000</div>
<div style="left:-14.099999999999994px;width:300px;text-align:center;top:539.92px;font-size:5.5px;line-height:7.15px;color:#666;white-space:pre;">˄</div>
<div style="left:-14.099999999999994px;width:300px;text-align:center;top:545.42px;font-size:5.5px;line-height:7.15px;color:#666;white-space:pre;">˅</div>
<div style="right:740px;top:556.18px;font-size:6.8px;line-height:8.84px;color:#bdbdbd;white-space:pre;">FM Stereo</div>
<div style="left:64px;top:557px;width:8px;height:8px;border:1px solid #d0d0d0;background:#fff;"></div>
<div style="left:77px;top:556.58px;font-size:6.8px;line-height:8.84px;color:#333;white-space:pre;">Step Size</div>
<div style="right:740px;top:570.58px;font-size:6.8px;line-height:8.84px;color:#333;white-space:pre;">Snap to Grid</div>
<div style="left:63.5px;top:572px;width:8px;height:8px;border:1px solid #333;background:#fff;"></div>
<div style="left:76px;top:571.4px;width:64.6px;height:12px;background:#e0e0e0;border:1px solid #d4d4d4;"></div>
<div style="left:78px;top:572.98px;font-size:6.8px;line-height:8.84px;color:#222;white-space:pre;">2.5 kHz</div>
<svg style="left:131.5px;top:575.1px" width="7" height="4.6" viewBox="131.5 575.1 7 4.6"><path d="M132.5 576.1 L135 578.6999999999999 L137.5 576.1" stroke="#555" stroke-width="0.9" fill="none"/></svg>
<div style="right:740.5px;top:587.58px;font-size:6.8px;line-height:8.84px;color:#bdbdbd;white-space:pre;">Lock Carrier</div>
<div style="left:64px;top:588px;width:8px;height:8px;border:1px solid #d0d0d0;background:#fff;"></div>
<div style="right:670px;top:586.58px;font-size:6.8px;line-height:8.84px;color:#333;white-space:pre;">Correct IQ</div>
<div style="left:133px;top:588.6px;width:8px;height:8px;border:1px solid #333;background:#fff;"><svg width="6" height="6" viewBox="0 0 6 6" style="left:0;top:0"><path d="M0.8 3 L2.4 4.7 L5.3 1.2" stroke="#444" stroke-width="0.8" fill="none"/></svg></div>
<div style="right:740.5px;top:601.58px;font-size:6.8px;line-height:8.84px;color:#bdbdbd;white-space:pre;">Anti-Fading</div>
<div style="left:64px;top:602px;width:8px;height:8px;border:1px solid #d0d0d0;background:#fff;"></div>
<div style="right:670.5px;top:601.58px;font-size:6.8px;line-height:8.84px;color:#333;white-space:pre;">Swap I &amp; Q</div>
<div style="left:133px;top:602px;width:8px;height:8px;border:1px solid #333;background:#fff;"></div>
<div style="left:6.4px;top:614.6px;width:136px;height:9.399999999999977px;background:linear-gradient(#5c5c5c,#2c2c2c);"></div>
<svg style="left:10.25px;top:616.55px" width="7.5" height="8.5" viewBox="10.25 616.55 7.5 8.5"><path d="M11.25 617.55 L16.75 620.8 L11.25 624.05Z" fill="#fff"/></svg>
<div style="left:24.6px;top:614.81px;font-size:6.9px;line-height:8.97px;color:#e8e8e8;white-space:pre;">Audio</div>
<div style="left:145px;top:361px;width:12px;height:266px;background:#f0f0f0;border-left:1px solid #fafafa;"></div>
<svg style="left:147.5px;top:365.1px" width="7" height="4.8" viewBox="147.5 365.1 7 4.8"><path d="M148.5 368.9 L151 366.1 L153.5 368.9" stroke="#555" stroke-width="1" fill="none"/></svg>
<div style="left:146.5px;top:373px;width:8.5px;height:68px;background:#cdcdcd;"></div>
<svg style="left:147.5px;top:617.1px" width="7" height="4.8" viewBox="147.5 617.1 7 4.8"><path d="M148.5 618.1 L151 620.9 L153.5 618.1" stroke="#555" stroke-width="1" fill="none"/></svg>
<div style="left:157.6px;top:361px;width:310px;height:152px;background:#000;"></div>
<svg style="left:157px;top:361px" width="311" height="152" viewBox="157 361 311 152"><defs><linearGradient id="bg1" x1="0" y1="0" x2="0" y2="1"><stop offset="0" stop-color="#3068c8"/><stop offset="0.3" stop-color="#1c52a8"/><stop offset="0.55" stop-color="#123a84"/><stop offset="0.62" stop-color="#0a2060"/><stop offset="1" stop-color="#081444"/></linearGradient><linearGradient id="wfc" x1="0" y1="0" x2="0" y2="1"><stop offset="0" stop-color="#500000"/><stop offset="0.2" stop-color="#c00000"/><stop offset="0.45" stop-color="#ffc000"/><stop offset="0.6" stop-color="#ffffff"/><stop offset="0.75" stop-color="#40a0ff"/><stop offset="1" stop-color="#000060"/></linearGradient></defs><line x1="174.2" y1="380.4" x2="450.8" y2="380.4" stroke="#606060" stroke-width="0.8"/><line x1="174.2" y1="393.0" x2="450.8" y2="393.0" stroke="#606060" stroke-width="0.8"/><line x1="174.2" y1="405.6" x2="450.8" y2="405.6" stroke="#606060" stroke-width="0.8"/><line x1="174.2" y1="418.3" x2="450.8" y2="418.3" stroke="#606060" stroke-width="0.8"/><line x1="174.2" y1="430.9" x2="450.8" y2="430.9" stroke="#606060" stroke-width="0.8"/><line x1="174.2" y1="443.5" x2="450.8" y2="443.5" stroke="#606060" stroke-width="0.8"/><line x1="174.2" y1="456.1" x2="450.8" y2="456.1" stroke="#606060" stroke-width="0.8"/><line x1="174.2" y1="468.7" x2="450.8" y2="468.7" stroke="#606060" stroke-width="0.8"/><line x1="174.2" y1="481.4" x2="450.8" y2="481.4" stroke="#606060" stroke-width="0.8"/><line x1="174.2" y1="494.0" x2="450.8" y2="494.0" stroke="#606060" stroke-width="0.8"/><line x1="223.5" y1="380" x2="223.5" y2="494" stroke="#5a5a5a" stroke-width="0.8"/><line x1="290.3" y1="380" x2="290.3" y2="494" stroke="#5a5a5a" stroke-width="0.8"/><line x1="357" y1="380" x2="357" y2="494" stroke="#5a5a5a" stroke-width="0.8"/><line x1="424" y1="380" x2="424" y2="494" stroke="#5a5a5a" stroke-width="0.8"/><polygon points="174.2,494 174.2,451.2 174.9,452.7 175.6,452.2 176.3,450.1 177.0,450.0 177.7,450.1 178.4,451.7 179.1,450.3 179.8,452.6 180.5,452.3 181.2,449.5 181.9,451.1 182.6,450.3 183.3,453.4 184.0,452.4 184.7,451.4 185.4,450.1 186.1,450.7 186.8,451.7 187.5,452.4 188.2,451.1 188.9,452.9 189.6,452.3 190.3,453.7 191.0,451.1 191.7,450.3 192.4,453.1 193.1,447.9 193.8,453.2 194.5,453.7 195.2,452.9 195.9,452.4 196.6,453.5 197.3,451.9 198.0,450.1 198.7,452.6 199.4,453.4 200.1,451.5 200.8,449.9 201.5,450.5 202.2,450.1 202.9,450.4 203.6,451.5 204.3,450.2 205.0,452.2 205.7,453.4 206.4,451.0 207.1,451.4 207.8,454.0 208.5,450.6 209.2,450.8 209.9,452.4 210.6,449.8 211.3,451.4 212.0,454.0 212.7,452.1 213.4,452.8 214.1,453.8 214.8,453.6 215.5,451.5 216.2,450.3 216.9,450.1 217.6,450.7 218.3,451.3 219.0,449.8 219.7,450.2 220.4,449.9 221.1,452.5 221.8,450.9 222.5,451.4 223.2,453.5 223.9,451.9 224.6,450.2 225.3,451.3 226.0,453.4 226.7,449.9 227.4,452.1 228.1,448.6 228.8,454.1 229.5,452.9 230.2,451.4 230.9,453.2 231.6,453.2 232.3,450.8 233.0,454.1 233.7,453.3 234.4,453.1 235.1,452.1 235.8,447.1 236.5,450.9 237.2,454.0 237.9,453.9 238.6,454.0 239.3,450.8 240.0,450.7 240.7,452.5 241.4,453.5 242.1,452.7 242.8,450.2 243.5,453.8 244.2,453.1 244.9,450.6 245.6,451.3 246.3,454.1 247.0,451.6 247.7,453.0 248.4,450.4 249.1,453.8 249.8,450.4 250.5,454.1 251.2,451.3 251.9,445.5 252.6,452.7 253.3,453.9 254.0,453.6 254.7,450.7 255.4,451.1 256.1,452.4 256.8,451.6 257.5,453.8 258.2,451.8 258.9,453.8 259.6,453.8 260.3,452.1 261.0,449.9 261.7,446.2 262.4,450.6 263.1,453.0 263.8,451.2 264.5,452.2 265.2,450.3 265.9,450.9 266.6,453.2 267.3,452.3 268.0,453.8 268.7,452.5 269.4,452.1 270.1,451.8 270.8,451.9 271.5,452.9 272.2,453.9 272.9,452.3 273.6,453.5 274.3,450.3 275.0,450.1 275.7,450.1 276.4,453.2 277.1,450.5 277.8,452.7 278.5,453.7 279.2,450.8 279.9,451.6 280.6,454.2 281.3,450.5 282.0,452.1 282.7,450.7 283.4,449.3 284.1,448.7 284.8,452.5 285.5,450.1 286.2,453.3 286.9,450.3 287.6,450.0 288.3,451.0 289.0,451.7 289.7,453.4 290.4,450.5 291.1,452.3 291.8,450.2 292.5,452.8 293.2,450.1 293.9,452.6 294.6,450.2 295.3,450.1 296.0,451.8 296.7,452.2 297.4,451.0 298.1,452.1 298.8,450.3 299.5,450.0 300.2,451.2 300.9,453.1 301.6,452.0 302.3,448.6 303.0,449.9 303.7,452.2 304.4,451.9 305.1,450.3 305.8,451.7 306.5,453.5 307.2,452.0 307.9,454.1 308.6,453.5 309.3,452.6 310.0,451.3 310.7,450.4 311.4,453.1 312.1,450.5 312.8,453.5 313.5,452.8 314.2,450.9 314.9,451.8 315.6,451.8 316.3,454.0 317.0,452.2 317.7,454.0 318.4,448.2 319.1,451.9 319.8,450.7 320.5,449.8 321.2,450.2 321.9,447.1 322.6,450.8 323.3,452.1 324.0,452.7 324.7,453.7 325.4,451.2 326.1,450.5 326.8,448.1 327.5,453.7 328.2,453.0 328.9,450.4 329.6,452.0 330.3,453.3 331.0,452.4 331.7,452.8 332.4,448.4 333.1,451.4 333.8,453.5 334.5,452.6 335.2,452.8 335.9,449.8 336.6,453.1 337.3,452.2 338.0,450.1 338.7,450.9 339.4,451.0 340.1,450.7 340.8,454.1 341.5,451.5 342.2,452.8 342.9,452.5 343.6,450.1 344.3,450.9 345.0,451.1 345.7,449.9 346.4,451.0 347.1,452.8 347.8,451.1 348.5,451.8 349.2,450.3 349.9,450.7 350.6,450.5 351.3,453.4 352.0,451.8 352.7,450.7 353.4,450.7 354.1,450.4 354.8,454.0 355.5,453.4 356.2,453.7 356.9,450.8 357.6,449.9 358.3,452.0 359.0,451.1 359.7,451.3 360.4,449.2 361.1,453.5 361.8,453.9 362.5,453.8 363.2,451.4 363.9,454.2 364.6,451.4 365.3,448.7 366.0,453.5 366.7,453.9 367.4,451.0 368.1,450.6 368.8,454.0 369.5,453.4 370.2,453.8 370.9,452.2 371.6,450.0 372.3,451.8 373.0,452.6 373.7,450.0 374.4,450.4 375.1,451.3 375.8,453.1 376.5,450.9 377.2,451.1 377.9,451.5 378.6,450.5 379.3,453.8 380.0,450.8 380.7,454.2 381.4,450.4 382.1,450.2 382.8,450.2 383.5,450.9 384.2,453.7 384.9,451.6 385.6,452.1 386.3,451.3 387.0,451.0 387.7,450.4 388.4,452.6 389.1,450.8 389.8,450.9 390.5,451.8 391.2,453.5 391.9,445.8 392.6,453.7 393.3,449.2 394.0,453.9 394.7,453.6 395.4,450.9 396.1,450.5 396.8,452.8 397.5,453.0 398.2,453.2 398.9,447.9 399.6,450.8 400.3,452.6 401.0,450.4 401.7,452.6 402.4,450.3 403.1,452.1 403.8,451.5 404.5,449.5 405.2,451.8 405.9,452.6 406.6,451.9 407.3,450.9 408.0,452.9 408.7,449.9 409.4,452.8 410.1,450.9 410.8,453.9 411.5,450.0 412.2,451.7 412.9,450.7 413.6,453.1 414.3,450.7 415.0,451.2 415.7,450.8 416.4,453.1 417.1,454.0 417.8,450.6 418.5,451.6 419.2,454.0 419.9,451.5 420.6,454.1 421.3,450.0 422.0,451.5 422.7,453.7 423.4,454.2 424.1,451.2 424.8,453.9 425.5,449.9 426.2,451.5 426.9,451.3 427.6,449.8 428.3,451.3 429.0,450.3 429.7,450.7 430.4,453.4 431.1,448.3 431.8,451.4 432.5,450.6 433.2,450.5 433.9,453.4 434.6,447.8 435.3,453.8 436.0,453.1 436.7,451.3 437.4,454.0 438.1,451.0 438.8,451.2 439.5,449.8 440.2,453.8 440.9,451.2 441.6,451.9 442.3,454.0 443.0,450.9 443.7,452.0 444.4,450.6 445.1,453.0 445.8,453.2 446.5,451.2 447.2,451.4 447.9,450.1 448.6,453.1 449.3,446.4 450.0,451.2 450.7,453.7 450.8,494" fill="url(#bg1)"/><line x1="174.2" y1="380" x2="174.2" y2="494" stroke="#808080" stroke-width="0.8"/><line x1="223.5" y1="452" x2="223.5" y2="497" stroke="#c0c0c0" stroke-width="0.6" opacity="0.35"/><line x1="290.3" y1="452" x2="290.3" y2="497" stroke="#c0c0c0" stroke-width="0.6" opacity="0.35"/><line x1="357" y1="452" x2="357" y2="497" stroke="#c0c0c0" stroke-width="0.6" opacity="0.35"/><line x1="424" y1="452" x2="424" y2="497" stroke="#c0c0c0" stroke-width="0.6" opacity="0.35"/><polyline points="174.2,451.2 174.9,452.7 175.6,452.2 176.3,450.1 177.0,450.0 177.7,450.1 178.4,451.7 179.1,450.3 179.8,452.6 180.5,452.3 181.2,449.5 181.9,451.1 182.6,450.3 183.3,453.4 184.0,452.4 184.7,451.4 185.4,450.1 186.1,450.7 186.8,451.7 187.5,452.4 188.2,451.1 188.9,452.9 189.6,452.3 190.3,453.7 191.0,451.1 191.7,450.3 192.4,453.1 193.1,447.9 193.8,453.2 194.5,453.7 195.2,452.9 195.9,452.4 196.6,453.5 197.3,451.9 198.0,450.1 198.7,452.6 199.4,453.4 200.1,451.5 200.8,449.9 201.5,450.5 202.2,450.1 202.9,450.4 203.6,451.5 204.3,450.2 205.0,452.2 205.7,453.4 206.4,451.0 207.1,451.4 207.8,454.0 208.5,450.6 209.2,450.8 209.9,452.4 210.6,449.8 211.3,451.4 212.0,454.0 212.7,452.1 213.4,452.8 214.1,453.8 214.8,453.6 215.5,451.5 216.2,450.3 216.9,450.1 217.6,450.7 218.3,451.3 219.0,449.8 219.7,450.2 220.4,449.9 221.1,452.5 221.8,450.9 222.5,451.4 223.2,453.5 223.9,451.9 224.6,450.2 225.3,451.3 226.0,453.4 226.7,449.9 227.4,452.1 228.1,448.6 228.8,454.1 229.5,452.9 230.2,451.4 230.9,453.2 231.6,453.2 232.3,450.8 233.0,454.1 233.7,453.3 234.4,453.1 235.1,452.1 235.8,447.1 236.5,450.9 237.2,454.0 237.9,453.9 238.6,454.0 239.3,450.8 240.0,450.7 240.7,452.5 241.4,453.5 242.1,452.7 242.8,450.2 243.5,453.8 244.2,453.1 244.9,450.6 245.6,451.3 246.3,454.1 247.0,451.6 247.7,453.0 248.4,450.4 249.1,453.8 249.8,450.4 250.5,454.1 251.2,451.3 251.9,445.5 252.6,452.7 253.3,453.9 254.0,453.6 254.7,450.7 255.4,451.1 256.1,452.4 256.8,451.6 257.5,453.8 258.2,451.8 258.9,453.8 259.6,453.8 260.3,452.1 261.0,449.9 261.7,446.2 262.4,450.6 263.1,453.0 263.8,451.2 264.5,452.2 265.2,450.3 265.9,450.9 266.6,453.2 267.3,452.3 268.0,453.8 268.7,452.5 269.4,452.1 270.1,451.8 270.8,451.9 271.5,452.9 272.2,453.9 272.9,452.3 273.6,453.5 274.3,450.3 275.0,450.1 275.7,450.1 276.4,453.2 277.1,450.5 277.8,452.7 278.5,453.7 279.2,450.8 279.9,451.6 280.6,454.2 281.3,450.5 282.0,452.1 282.7,450.7 283.4,449.3 284.1,448.7 284.8,452.5 285.5,450.1 286.2,453.3 286.9,450.3 287.6,450.0 288.3,451.0 289.0,451.7 289.7,453.4 290.4,450.5 291.1,452.3 291.8,450.2 292.5,452.8 293.2,450.1 293.9,452.6 294.6,450.2 295.3,450.1 296.0,451.8 296.7,452.2 297.4,451.0 298.1,452.1 298.8,450.3 299.5,450.0 300.2,451.2 300.9,453.1 301.6,452.0 302.3,448.6 303.0,449.9 303.7,452.2 304.4,451.9 305.1,450.3 305.8,451.7 306.5,453.5 307.2,452.0 307.9,454.1 308.6,453.5 309.3,452.6 310.0,451.3 310.7,450.4 311.4,453.1 312.1,450.5 312.8,453.5 313.5,452.8 314.2,450.9 314.9,451.8 315.6,451.8 316.3,454.0 317.0,452.2 317.7,454.0 318.4,448.2 319.1,451.9 319.8,450.7 320.5,449.8 321.2,450.2 321.9,447.1 322.6,450.8 323.3,452.1 324.0,452.7 324.7,453.7 325.4,451.2 326.1,450.5 326.8,448.1 327.5,453.7 328.2,453.0 328.9,450.4 329.6,452.0 330.3,453.3 331.0,452.4 331.7,452.8 332.4,448.4 333.1,451.4 333.8,453.5 334.5,452.6 335.2,452.8 335.9,449.8 336.6,453.1 337.3,452.2 338.0,450.1 338.7,450.9 339.4,451.0 340.1,450.7 340.8,454.1 341.5,451.5 342.2,452.8 342.9,452.5 343.6,450.1 344.3,450.9 345.0,451.1 345.7,449.9 346.4,451.0 347.1,452.8 347.8,451.1 348.5,451.8 349.2,450.3 349.9,450.7 350.6,450.5 351.3,453.4 352.0,451.8 352.7,450.7 353.4,450.7 354.1,450.4 354.8,454.0 355.5,453.4 356.2,453.7 356.9,450.8 357.6,449.9 358.3,452.0 359.0,451.1 359.7,451.3 360.4,449.2 361.1,453.5 361.8,453.9 362.5,453.8 363.2,451.4 363.9,454.2 364.6,451.4 365.3,448.7 366.0,453.5 366.7,453.9 367.4,451.0 368.1,450.6 368.8,454.0 369.5,453.4 370.2,453.8 370.9,452.2 371.6,450.0 372.3,451.8 373.0,452.6 373.7,450.0 374.4,450.4 375.1,451.3 375.8,453.1 376.5,450.9 377.2,451.1 377.9,451.5 378.6,450.5 379.3,453.8 380.0,450.8 380.7,454.2 381.4,450.4 382.1,450.2 382.8,450.2 383.5,450.9 384.2,453.7 384.9,451.6 385.6,452.1 386.3,451.3 387.0,451.0 387.7,450.4 388.4,452.6 389.1,450.8 389.8,450.9 390.5,451.8 391.2,453.5 391.9,445.8 392.6,453.7 393.3,449.2 394.0,453.9 394.7,453.6 395.4,450.9 396.1,450.5 396.8,452.8 397.5,453.0 398.2,453.2 398.9,447.9 399.6,450.8 400.3,452.6 401.0,450.4 401.7,452.6 402.4,450.3 403.1,452.1 403.8,451.5 404.5,449.5 405.2,451.8 405.9,452.6 406.6,451.9 407.3,450.9 408.0,452.9 408.7,449.9 409.4,452.8 410.1,450.9 410.8,453.9 411.5,450.0 412.2,451.7 412.9,450.7 413.6,453.1 414.3,450.7 415.0,451.2 415.7,450.8 416.4,453.1 417.1,454.0 417.8,450.6 418.5,451.6 419.2,454.0 419.9,451.5 420.6,454.1 421.3,450.0 422.0,451.5 422.7,453.7 423.4,454.2 424.1,451.2 424.8,453.9 425.5,449.9 426.2,451.5 426.9,451.3 427.6,449.8 428.3,451.3 429.0,450.3 429.7,450.7 430.4,453.4 431.1,448.3 431.8,451.4 432.5,450.6 433.2,450.5 433.9,453.4 434.6,447.8 435.3,453.8 436.0,453.1 436.7,451.3 437.4,454.0 438.1,451.0 438.8,451.2 439.5,449.8 440.2,453.8 440.9,451.2 441.6,451.9 442.3,454.0 443.0,450.9 443.7,452.0 444.4,450.6 445.1,453.0 445.8,453.2 446.5,451.2 447.2,451.4 447.9,450.1 448.6,453.1 449.3,446.4 450.0,451.2 450.7,453.7" fill="none" stroke="#e0e0e0" stroke-width="0.8"/><rect x="174.2" y="476" width="276.6" height="18" fill="#d80c0c"/><rect x="302" y="380" width="9" height="114" fill="#b08080" fill-opacity="0.38"/><line x1="306.5" y1="380" x2="306.5" y2="494" stroke="#c04040" stroke-width="1" opacity="0.7"/><line x1="174.2" y1="494.5" x2="450.8" y2="494.5" stroke="#a0a0a0" stroke-width="0.8"/><rect x="455" y="380" width="8" height="115" fill="#404040"/><rect x="455" y="480" width="8" height="15" fill="#1a2a90"/></svg>
<div style="right:629px;top:376.17px;font-size:6.5px;line-height:8.45px;color:#c8c8c8;white-space:pre;">0</div>
<div style="right:629px;top:388.79px;font-size:6.5px;line-height:8.45px;color:#c8c8c8;white-space:pre;">-10</div>
<div style="right:629px;top:401.41px;font-size:6.5px;line-height:8.45px;color:#c8c8c8;white-space:pre;">-20</div>
<div style="right:629px;top:414.03px;font-size:6.5px;line-height:8.45px;color:#c8c8c8;white-space:pre;">-30</div>
<div style="right:629px;top:426.65px;font-size:6.5px;line-height:8.45px;color:#c8c8c8;white-space:pre;">-40</div>
<div style="right:629px;top:439.27px;font-size:6.5px;line-height:8.45px;color:#c8c8c8;white-space:pre;">-50</div>
<div style="right:629px;top:451.89px;font-size:6.5px;line-height:8.45px;color:#c8c8c8;white-space:pre;">-60</div>
<div style="right:629px;top:464.51px;font-size:6.5px;line-height:8.45px;color:#c8c8c8;white-space:pre;">-70</div>
<div style="right:629px;top:477.13px;font-size:6.5px;line-height:8.45px;color:#c8c8c8;white-space:pre;">-80</div>
<div style="right:629px;top:489.75px;font-size:6.5px;line-height:8.45px;color:#c8c8c8;white-space:pre;">-90</div>
<div style="left:73.5px;width:300px;text-align:center;top:499.38px;font-size:6.5px;line-height:8.45px;color:#c8c8c8;white-space:pre;">438,100 M</div>
<div style="left:140.3px;width:300px;text-align:center;top:499.38px;font-size:6.5px;line-height:8.45px;color:#c8c8c8;white-space:pre;">438,200 M</div>
<div style="left:207px;width:300px;text-align:center;top:499.38px;font-size:6.5px;line-height:8.45px;color:#c8c8c8;white-space:pre;">438,300 M</div>
<div style="left:274px;width:300px;text-align:center;top:499.38px;font-size:6.5px;line-height:8.45px;color:#c8c8c8;white-space:pre;">438,400 M</div>
<div style="left:162px;width:300px;text-align:center;top:479.56px;font-size:7.6px;line-height:9.88px;color:#f4f4f4;white-space:pre;font-family:Liberation Mono,monospace;-webkit-text-stroke:0.2px #fff;">70cm Ham Band</div>
<div style="left:309px;width:300px;text-align:center;top:469.45px;font-size:7px;line-height:9.1px;color:#e8e8e8;white-space:pre;font-weight:bold;">14</div>
<div style="left:157.6px;top:513px;width:310px;height:114px;background:#f0f0f0;"></div>
<div style="left:158px;top:514px;width:310px;height:109.5px;background:#000;"></div>
<div style="left:158px;top:513px;width:310px;height:1px;background:#c8c8c8;"></div>
<svg style="left:174px;top:514px" width="277" height="109" viewBox="174 514 277 109"><defs><filter id="nz" x="0" y="0" width="100%" height="100%"><feTurbulence type="fractalNoise" baseFrequency="0.9 0.6" numOctaves="2" seed="4"/><feColorMatrix type="matrix" values="0 0 0 0 0.25  0 0 0 0 0.35  0 0 0 0 1  0 0 0 1.6 -0.75"/></filter></defs><rect x="174" y="514" width="277" height="109" fill="#1318ac"/><rect x="174" y="514" width="277" height="109" filter="url(#nz)" opacity="0.42"/><line x1="184" y1="514" x2="184" y2="623" stroke="#4a68e8" stroke-width="0.8" opacity="0.3"/><line x1="205" y1="514" x2="205" y2="623" stroke="#4a68e8" stroke-width="0.8" opacity="0.35"/><line x1="232" y1="514" x2="232" y2="623" stroke="#4a68e8" stroke-width="0.8" opacity="0.3"/><line x1="258" y1="514" x2="258" y2="623" stroke="#4a68e8" stroke-width="0.8" opacity="0.3"/><line x1="285" y1="514" x2="285" y2="623" stroke="#4a68e8" stroke-width="0.8" opacity="0.35"/><line x1="303.5" y1="514" x2="303.5" y2="623" stroke="#4a68e8" stroke-width="0.8" opacity="0.3"/><line x1="314" y1="514" x2="314" y2="623" stroke="#4a68e8" stroke-width="0.8" opacity="0.35"/><line x1="340" y1="514" x2="340" y2="623" stroke="#4a68e8" stroke-width="0.8" opacity="0.3"/><line x1="395" y1="514" x2="395" y2="623" stroke="#4a68e8" stroke-width="0.8" opacity="0.3"/><line x1="420" y1="514" x2="420" y2="623" stroke="#4a68e8" stroke-width="0.8" opacity="0.25"/><line x1="440" y1="514" x2="440" y2="623" stroke="#4a68e8" stroke-width="0.8" opacity="0.3"/><line x1="324.8" y1="514" x2="324.8" y2="623" stroke="#6a88ff" stroke-width="0.9" opacity="0.7"/><rect x="304" y="531" width="6" height="3.5" fill="#ffffff"/><rect x="355.6" y="584" width="1.8" height="34" fill="#78b0f8"/><line x1="174" y1="620.5" x2="451" y2="620.5" stroke="#3a58e0" stroke-width="0.8" opacity="0.6"/></svg>
<div style="left:157.6px;top:623.5px;width:310px;height:3.5px;background:#f0f0f0;"></div>
<svg style="left:455.5px;top:521.5px" width="7.5" height="95.5"><rect width="7.5" height="95.5" rx="3.5" fill="url(#wfc)"/></svg>
<div style="left:174.5px;top:515.59px;font-size:8.3333px;line-height:10.83px;color:#f0f0f0;white-space:pre;font-family:Liberation Mono,monospace;transform:scale(0.975,1.12);transform-origin:0 50%;-webkit-text-stroke:0.2px currentColor;">12.04.2025 14:18:47</div>
<div style="left:174.5px;top:577.09px;font-size:8.3333px;line-height:10.83px;color:#f0f0f0;white-space:pre;font-family:Liberation Mono,monospace;transform:scale(0.975,1.12);transform-origin:0 50%;-webkit-text-stroke:0.2px currentColor;">12.04.2025 14:18:42</div>
<div style="left:466px;top:373.5px;width:334px;height:10px;background:#3c3c3c;"></div>
<div style="left:561px;width:300px;text-align:center;top:374.27px;font-size:6.5px;line-height:8.45px;color:#a8a8a8;white-space:pre;">Orbitron 3.71 - (C) 2001-2005 by Sebastian Stoff</div>
<div style="left:466px;top:383.5px;width:334px;height:243.5px;background:#f0f0f0;"></div>
<div style="left:466px;top:383.5px;width:3px;height:243.5px;background:#111;"></div>
<div style="left:469px;top:383.5px;width:36.5px;height:243.5px;background:#f6f6f6;border-right:1px solid #e0e0e0;"></div>
<div style="left:482.5px;top:383.5px;width:3px;height:42.5px;background:#e2e2e2;border:1px solid #d8d8d8;"></div>
<div style="left:478px;top:383.5px;width:2px;height:1px;background:#d4d4d4;"></div>
<div style="left:488px;top:383.5px;width:2px;height:1px;background:#d4d4d4;"></div>
<div style="left:478px;top:388.5px;width:2px;height:1px;background:#d4d4d4;"></div>
<div style="left:488px;top:388.5px;width:2px;height:1px;background:#d4d4d4;"></div>
<div style="left:478px;top:393.5px;width:2px;height:1px;background:#d4d4d4;"></div>
<div style="left:488px;top:393.5px;width:2px;height:1px;background:#d4d4d4;"></div>
<div style="left:478px;top:398.5px;width:2px;height:1px;background:#d4d4d4;"></div>
<div style="left:488px;top:398.5px;width:2px;height:1px;background:#d4d4d4;"></div>
<div style="left:478px;top:403.5px;width:2px;height:1px;background:#d4d4d4;"></div>
<div style="left:488px;top:403.5px;width:2px;height:1px;background:#d4d4d4;"></div>
<div style="left:478px;top:408.5px;width:2px;height:1px;background:#d4d4d4;"></div>
<div style="left:488px;top:408.5px;width:2px;height:1px;background:#d4d4d4;"></div>
<div style="left:478px;top:413.5px;width:2px;height:1px;background:#d4d4d4;"></div>
<div style="left:488px;top:413.5px;width:2px;height:1px;background:#d4d4d4;"></div>
<div style="left:478px;top:418.5px;width:2px;height:1px;background:#d4d4d4;"></div>
<div style="left:488px;top:418.5px;width:2px;height:1px;background:#d4d4d4;"></div>
<div style="left:478px;top:423.5px;width:2px;height:1px;background:#d4d4d4;"></div>
<div style="left:488px;top:423.5px;width:2px;height:1px;background:#d4d4d4;"></div>
<div style="left:477px;top:412.3px;width:13.4px;height:6px;background:#1878d0;"></div>
<div style="left:334px;width:300px;text-align:center;top:427.45px;font-size:7px;line-height:9.1px;color:#333;white-space:pre;">Contrast</div>
<div style="left:482.5px;top:443px;width:3px;height:44px;background:#e2e2e2;border:1px solid #d8d8d8;"></div>
<div style="left:478px;top:443px;width:2px;height:1px;background:#d4d4d4;"></div>
<div style="left:488px;top:443px;width:2px;height:1px;background:#d4d4d4;"></div>
<div style="left:478px;top:448px;width:2px;height:1px;background:#d4d4d4;"></div>
<div style="left:488px;top:448px;width:2px;height:1px;background:#d4d4d4;"></div>
<div style="left:478px;top:453px;width:2px;height:1px;background:#d4d4d4;"></div>
<div style="left:488px;top:453px;width:2px;height:1px;background:#d4d4d4;"></div>
<div style="left:478px;top:458px;width:2px;height:1px;background:#d4d4d4;"></div>
<div style="left:488px;top:458px;width:2px;height:1px;background:#d4d4d4;"></div>
<div style="left:478px;top:463px;width:2px;height:1px;background:#d4d4d4;"></div>
<div style="left:488px;top:463px;width:2px;height:1px;background:#d4d4d4;"></div>
<div style="left:478px;top:468px;width:2px;height:1px;background:#d4d4d4;"></div>
<div style="left:488px;top:468px;width:2px;height:1px;background:#d4d4d4;"></div>
<div style="left:478px;top:473px;width:2px;height:1px;background:#d4d4d4;"></div>
<div style="left:488px;top:473px;width:2px;height:1px;background:#d4d4d4;"></div>
<div style="left:478px;top:478px;width:2px;height:1px;background:#d4d4d4;"></div>
<div style="left:488px;top:478px;width:2px;height:1px;background:#d4d4d4;"></div>
<div style="left:478px;top:483px;width:2px;height:1px;background:#d4d4d4;"></div>
<div style="left:488px;top:483px;width:2px;height:1px;background:#d4d4d4;"></div>
<div style="left:477px;top:467.4px;width:13.4px;height:6px;background:#1878d0;"></div>
<div style="left:334px;width:300px;text-align:center;top:492.75px;font-size:7px;line-height:9.1px;color:#333;white-space:pre;">Range</div>
<div style="left:482.5px;top:508px;width:3px;height:45px;background:#e2e2e2;border:1px solid #d8d8d8;"></div>
<div style="left:478px;top:508px;width:2px;height:1px;background:#d4d4d4;"></div>
<div style="left:488px;top:508px;width:2px;height:1px;background:#d4d4d4;"></div>
<div style="left:478px;top:513px;width:2px;height:1px;background:#d4d4d4;"></div>
<div style="left:488px;top:513px;width:2px;height:1px;background:#d4d4d4;"></div>
<div style="left:478px;top:518px;width:2px;height:1px;background:#d4d4d4;"></div>
<div style="left:488px;top:518px;width:2px;height:1px;background:#d4d4d4;"></div>
<div style="left:478px;top:523px;width:2px;height:1px;background:#d4d4d4;"></div>
<div style="left:488px;top:523px;width:2px;height:1px;background:#d4d4d4;"></div>
<div style="left:478px;top:528px;width:2px;height:1px;background:#d4d4d4;"></div>
<div style="left:488px;top:528px;width:2px;height:1px;background:#d4d4d4;"></div>
<div style="left:478px;top:533px;width:2px;height:1px;background:#d4d4d4;"></div>
<div style="left:488px;top:533px;width:2px;height:1px;background:#d4d4d4;"></div>
<div style="left:478px;top:538px;width:2px;height:1px;background:#d4d4d4;"></div>
<div style="left:488px;top:538px;width:2px;height:1px;background:#d4d4d4;"></div>
<div style="left:478px;top:543px;width:2px;height:1px;background:#d4d4d4;"></div>
<div style="left:488px;top:543px;width:2px;height:1px;background:#d4d4d4;"></div>
<div style="left:478px;top:548px;width:2px;height:1px;background:#d4d4d4;"></div>
<div style="left:488px;top:548px;width:2px;height:1px;background:#d4d4d4;"></div>
<div style="left:478px;top:553px;width:2px;height:1px;background:#d4d4d4;"></div>
<div style="left:488px;top:553px;width:2px;height:1px;background:#d4d4d4;"></div>
<div style="left:477px;top:523.7px;width:13.4px;height:6px;background:#1878d0;"></div>
<div style="left:334px;width:300px;text-align:center;top:558.45px;font-size:7px;line-height:9.1px;color:#333;white-space:pre;">Offset</div>
<div style="left:482.5px;top:575px;width:3px;height:52px;background:#e2e2e2;border:1px solid #d8d8d8;"></div>
<div style="left:478px;top:575px;width:2px;height:1px;background:#d4d4d4;"></div>
<div style="left:488px;top:575px;width:2px;height:1px;background:#d4d4d4;"></div>
<div style="left:478px;top:580px;width:2px;height:1px;background:#d4d4d4;"></div>
<div style="left:488px;top:580px;width:2px;height:1px;background:#d4d4d4;"></div>
<div style="left:478px;top:585px;width:2px;height:1px;background:#d4d4d4;"></div>
<div style="left:488px;top:585px;width:2px;height:1px;background:#d4d4d4;"></div>
<div style="left:478px;top:590px;width:2px;height:1px;background:#d4d4d4;"></div>
<div style="left:488px;top:590px;width:2px;height:1px;background:#d4d4d4;"></div>
<div style="left:478px;top:595px;width:2px;height:1px;background:#d4d4d4;"></div>
<div style="left:488px;top:595px;width:2px;height:1px;background:#d4d4d4;"></div>
<div style="left:478px;top:600px;width:2px;height:1px;background:#d4d4d4;"></div>
<div style="left:488px;top:600px;width:2px;height:1px;background:#d4d4d4;"></div>
<div style="left:478px;top:605px;width:2px;height:1px;background:#d4d4d4;"></div>
<div style="left:488px;top:605px;width:2px;height:1px;background:#d4d4d4;"></div>
<div style="left:478px;top:610px;width:2px;height:1px;background:#d4d4d4;"></div>
<div style="left:488px;top:610px;width:2px;height:1px;background:#d4d4d4;"></div>
<div style="left:478px;top:615px;width:2px;height:1px;background:#d4d4d4;"></div>
<div style="left:488px;top:615px;width:2px;height:1px;background:#d4d4d4;"></div>
<div style="left:478px;top:620px;width:2px;height:1px;background:#d4d4d4;"></div>
<div style="left:488px;top:620px;width:2px;height:1px;background:#d4d4d4;"></div>
<div style="left:478px;top:625px;width:2px;height:1px;background:#d4d4d4;"></div>
<div style="left:488px;top:625px;width:2px;height:1px;background:#d4d4d4;"></div>
<div style="left:477px;top:611px;width:13.4px;height:6px;background:#1878d0;"></div>
<div style="left:514px;top:391.6px;width:73.60000000000002px;height:21.399999999999977px;border:1px solid #d6d6d6;border-radius:1px;"></div>
<div style="left:521.5px;top:386.92px;font-size:7.2px;line-height:9.36px;color:#333;white-space:pre;background:#f0f0f0;padding:0 1px;">DownLink</div>
<div style="left:400.79999999999995px;width:300px;text-align:center;top:398.93px;font-size:7.5px;line-height:9.75px;color:#222;white-space:pre;">438.224.279 Hz</div>
<div style="left:592px;top:391.6px;width:72.60000000000002px;height:21.399999999999977px;border:1px solid #d6d6d6;border-radius:1px;"></div>
<div style="left:599.5px;top:386.92px;font-size:7.2px;line-height:9.36px;color:#333;white-space:pre;background:#f0f0f0;padding:0 1px;">UpLink</div>
<div style="left:478.29999999999995px;width:300px;text-align:center;top:398.93px;font-size:7.5px;line-height:9.75px;color:#222;white-space:pre;">145.000.569 Hz</div>
<div style="left:514px;top:419.8px;width:73.60000000000002px;height:21.599999999999966px;border:1px solid #d6d6d6;border-radius:1px;"></div>
<div style="left:521.5px;top:415.12px;font-size:7.2px;line-height:9.36px;color:#333;white-space:pre;background:#f0f0f0;padding:0 1px;">Distance (km)</div>
<div style="left:400.79999999999995px;width:300px;text-align:center;top:427.23px;font-size:7.5px;line-height:9.75px;color:#222;white-space:pre;">1773.606</div>
<div style="left:592px;top:419.8px;width:72.60000000000002px;height:21.599999999999966px;border:1px solid #d6d6d6;border-radius:1px;"></div>
<div style="left:599.5px;top:415.12px;font-size:7.2px;line-height:9.36px;color:#333;white-space:pre;background:#f0f0f0;padding:0 1px;">Altitude (km)</div>
<div style="left:478.29999999999995px;width:300px;text-align:center;top:427.23px;font-size:7.5px;line-height:9.75px;color:#222;white-space:pre;">618.221</div>
<div style="left:514px;top:448px;width:73.60000000000002px;height:22px;border:1px solid #d6d6d6;border-radius:1px;"></div>
<div style="left:521.5px;top:443.32px;font-size:7.2px;line-height:9.36px;color:#333;white-space:pre;background:#f0f0f0;padding:0 1px;">Latitude</div>
<div style="left:400.79999999999995px;width:300px;text-align:center;top:455.62px;font-size:7.5px;line-height:9.75px;color:#222;white-space:pre;">56,3087°</div>
<div style="left:592px;top:448px;width:72.60000000000002px;height:22px;border:1px solid #d6d6d6;border-radius:1px;"></div>
<div style="left:599.5px;top:443.32px;font-size:7.2px;line-height:9.36px;color:#333;white-space:pre;background:#f0f0f0;padding:0 1px;">Longitude</div>
<div style="left:478.29999999999995px;width:300px;text-align:center;top:455.62px;font-size:7.5px;line-height:9.75px;color:#222;white-space:pre;">12,0155°</div>
<div style="left:514px;top:477px;width:73.60000000000002px;height:21.5px;border:1px solid #d6d6d6;border-radius:1px;"></div>
<div style="left:521.5px;top:472.32px;font-size:7.2px;line-height:9.36px;color:#333;white-space:pre;background:#f0f0f0;padding:0 1px;">Range Rate (km/s)</div>
<div style="left:400.79999999999995px;width:300px;text-align:center;top:484.38px;font-size:7.5px;line-height:9.75px;color:#222;white-space:pre;">1,177</div>
<div style="left:514.5px;top:505px;width:149.5px;height:86.39999999999998px;border:1px solid #d6d6d6;border-radius:1px;"></div>
<div style="left:522.0px;top:500.32px;font-size:7.2px;line-height:9.36px;color:#333;white-space:pre;background:#f0f0f0;padding:0 1px;">Radar</div>
<div style="left:597.6px;top:514.4px;width:60.69999999999993px;height:21.600000000000023px;border:1px solid #d6d6d6;border-radius:1px;"></div>
<div style="left:605.1px;top:509.72px;font-size:7.2px;line-height:9.36px;color:#333;white-space:pre;background:#f0f0f0;padding:0 1px;">Azimuth</div>
<div style="left:477px;width:300px;text-align:center;top:521.73px;font-size:7.5px;line-height:9.75px;color:#222;white-space:pre;">284,0°</div>
<div style="left:597.6px;top:545px;width:60.69999999999993px;height:22px;border:1px solid #d6d6d6;border-radius:1px;"></div>
<div style="left:605.1px;top:540.32px;font-size:7.2px;line-height:9.36px;color:#333;white-space:pre;background:#f0f0f0;padding:0 1px;">Elevation</div>
<div style="left:477px;width:300px;text-align:center;top:551.62px;font-size:7.5px;line-height:9.75px;color:#222;white-space:pre;">13,2°</div>
<svg style="left:520px;top:512px" width="74" height="72" viewBox="520 512 74 72"><circle cx="556.2" cy="547.6" r="33.8" fill="#ececec" stroke="#333" stroke-width="0.9"/><circle cx="556.2" cy="547.6" r="16.5" fill="none" stroke="#666" stroke-width="0.7"/><line x1="522.4" y1="547.6" x2="590" y2="547.6" stroke="#555" stroke-width="0.7"/><line x1="556.2" y1="513.8" x2="556.2" y2="581.4" stroke="#555" stroke-width="0.7"/><line x1="556.2" y1="547.6" x2="527.7" y2="540.9" stroke="#30a030" stroke-width="0.9"/><circle cx="527.7" cy="540.9" r="2.1" fill="#1a4a3a"/></svg>
<div style="left:514.5px;top:597.61px;font-size:6.75px;line-height:8.78px;color:#222;white-space:pre;">Last time sync: 12.04.2025 14:07:42 (0 sec).</div>
<div style="left:468px;top:608.5px;width:332px;height:1px;background:#dcdcdc;"></div>
<div style="left:510.3px;top:611.9px;font-size:6.3px;line-height:8.19px;color:#111;white-space:pre;">12.04.2025 11:18:47 UTC</div>
<div style="left:590px;top:611.48px;font-size:6.95px;line-height:9.04px;color:#111;white-space:pre;">DDE status: connected</div>
<div style="left:680.5px;top:611.48px;font-size:6.95px;line-height:9.04px;color:#111;white-space:pre;">TCP server: client connected [1]</div>
<div style="left:507px;top:624.8px;width:223px;height:1.6px;background:#707070;"></div>
<div style="left:668.4px;top:383.5px;width:112.2px;height:93.5px;border:1px solid #d6d6d6;border-top:none;"></div>
<div style="left:678.4px;top:386.35px;font-size:7px;line-height:9.1px;color:#333;white-space:pre;">Status:</div>
<div style="left:703.4px;top:386.35px;font-size:7px;line-height:9.1px;color:#3aa03a;white-space:pre;font-weight:bold;">Connected</div>
<div style="left:572.6px;width:300px;text-align:center;top:397.86px;font-size:7.6px;line-height:9.88px;color:#1a1a1a;white-space:pre;font-weight:bold;">438.224.279 Hz</div>
<div style="left:678.4px;top:412.4px;width:92.30000000000007px;height:14.900000000000034px;background:#e0eef9;border:1px solid #3a80c0;border-radius:2px;"></div>
<div style="left:574.55px;width:300px;text-align:center;top:414.98px;font-size:7.5px;line-height:9.75px;color:#222;white-space:pre;">Disconnect</div>
<div style="left:678.9px;top:433.2px;width:7.5px;height:7.5px;background:#1868c0;border-radius:1px;"><svg width="7.5" height="7.5" viewBox="0 0 10 10" style="left:0;top:0"><path d="M2 5.2 L4.2 7.3 L8 2.8" stroke="#fff" stroke-width="1.4" fill="none"/></svg></div>
<div style="left:688.9px;top:432.45px;font-size:7px;line-height:9.1px;color:#333;white-space:pre;">PPM correction (Hz):</div>
<div style="left:679px;top:446.2px;width:91.29999999999995px;height:11.800000000000011px;background:#fbfbfb;border:1px solid #ececec;"></div>
<div style="right:51.700000000000045px;top:447.55px;font-size:7px;line-height:9.1px;color:#999;white-space:pre;">0</div>
<div style="left:748.8px;top:447.2px;width:1px;height:9.800000000000011px;background:#e4e4e4;"></div>
<svg style="left:750.3px;top:446.2px" width="20" height="11.800000000000011"><path d="M3 7.400000000000006 L6.5 3.9000000000000057 L10 7.400000000000006" stroke="#666" stroke-width="0.9" fill="none"/><path d="M12 4.400000000000006 L15.5 7.900000000000006 L19 4.400000000000006" stroke="#666" stroke-width="0.9" fill="none"/></svg>
<div style="left:669px;top:486.8px;width:112px;height:117.6px;border:1px solid #d6d6d6;"></div>
<div style="left:676px;top:482.25px;font-size:7px;line-height:9.1px;color:#333;white-space:pre;background:#f0f0f0;padding:0 1px;">TX radio control</div>
<div style="left:679.5px;top:497.3px;width:7.5px;height:7.5px;background:#1868c0;border-radius:1px;"><svg width="7.5" height="7.5" viewBox="0 0 10 10" style="left:0;top:0"><path d="M2 5.2 L4.2 7.3 L8 2.8" stroke="#fff" stroke-width="1.4" fill="none"/></svg></div>
<div style="left:689.5px;top:496.45px;font-size:7px;line-height:9.1px;color:#333;white-space:pre;">Enable TX radio control</div>
<div style="left:678.4px;top:509.45px;font-size:7px;line-height:9.1px;color:#333;white-space:pre;">Status:</div>
<div style="left:703.4px;top:509.45px;font-size:7px;line-height:9.1px;color:#3aa03a;white-space:pre;font-weight:bold;">Connected</div>
<div style="left:575px;width:300px;text-align:center;top:522.06px;font-size:7.6px;line-height:9.88px;color:#1a1a1a;white-space:pre;font-weight:bold;">145.000.569 Hz</div>
<div style="left:679px;top:536.8px;width:92px;height:14.200000000000045px;background:#fdfdfd;border:1px solid #d0d0d0;border-radius:2px;"></div>
<div style="left:575.0px;width:300px;text-align:center;top:539.02px;font-size:7.5px;line-height:9.75px;color:#222;white-space:pre;">Disconnect</div>
<div style="left:681.5px;top:556.8px;width:7.5px;height:7.5px;background:#1868c0;border-radius:1px;"><svg width="7.5" height="7.5" viewBox="0 0 10 10" style="left:0;top:0"><path d="M2 5.2 L4.2 7.3 L8 2.8" stroke="#fff" stroke-width="1.4" fill="none"/></svg></div>
<div style="left:691.5px;top:556.05px;font-size:7px;line-height:9.1px;color:#333;white-space:pre;">PPM correction (Hz):</div>
<div style="left:680px;top:569.6px;width:91px;height:12.399999999999977px;background:#fbfbfb;border:1px solid #ececec;"></div>
<div style="right:51px;top:571.25px;font-size:7px;line-height:9.1px;color:#999;white-space:pre;">0</div>
<div style="left:749.5px;top:570.6px;width:1px;height:10.399999999999977px;background:#e4e4e4;"></div>
<svg style="left:751px;top:569.6px" width="20" height="12.399999999999977"><path d="M3 7.699999999999989 L6.5 4.199999999999989 L10 7.699999999999989" stroke="#666" stroke-width="0.9" fill="none"/><path d="M12 4.699999999999989 L15.5 8.199999999999989 L19 4.699999999999989" stroke="#666" stroke-width="0.9" fill="none"/></svg>
<div style="left:784.5px;top:383.5px;width:1px;height:100px;background:#d8d8d8;"></div>
<div style="left:793px;top:385.45px;font-size:7px;line-height:9.1px;color:#333;white-space:pre;">St</div>
<div style="left:793px;top:398.45px;font-size:7px;line-height:9.1px;color:#333;white-space:pre;">A</div>
<div style="left:790px;top:412px;width:12px;height:13px;background:#fff;border:1px solid #e6e6e6;"></div>
<div style="left:793px;top:413.95px;font-size:7px;line-height:9.1px;color:#333;white-space:pre;">2</div>
<div style="left:793px;top:428.95px;font-size:7px;line-height:9.1px;color:#333;white-space:pre;">D</div>
<div style="left:793px;top:478.15px;font-size:7px;line-height:9.1px;color:#333;white-space:pre;">C</div>
<div style="left:793px;top:492.45px;font-size:7px;line-height:9.1px;color:#333;white-space:pre;">A</div>
<div style="left:793px;top:504.45px;font-size:7px;line-height:9.1px;color:#333;white-space:pre;">To</div>
<div style="left:786px;top:526.5px;width:20px;height:78px;border:1px solid #d6d6d6;"></div>
<div style="left:791px;top:521.95px;font-size:7px;line-height:9.1px;color:#333;white-space:pre;background:#f0f0f0;">Se</div>
<div style="left:795px;top:536.3px;width:7.5px;height:7.5px;background:#1868c0;border-radius:1px;"><svg width="7.5" height="7.5" viewBox="0 0 10 10" style="left:0;top:0"><path d="M2 5.2 L4.2 7.3 L8 2.8" stroke="#fff" stroke-width="1.4" fill="none"/></svg></div>
<div style="left:795px;top:550.05px;width:7.5px;height:7.5px;background:#1868c0;border-radius:1px;"><svg width="7.5" height="7.5" viewBox="0 0 10 10" style="left:0;top:0"><path d="M2 5.2 L4.2 7.3 L8 2.8" stroke="#fff" stroke-width="1.4" fill="none"/></svg></div>
<div style="left:795px;top:563.8px;width:7.5px;height:7.5px;background:#1868c0;border-radius:1px;"><svg width="7.5" height="7.5" viewBox="0 0 10 10" style="left:0;top:0"><path d="M2 5.2 L4.2 7.3 L8 2.8" stroke="#fff" stroke-width="1.4" fill="none"/></svg></div>
<div style="left:795px;top:577.55px;width:7.5px;height:7.5px;background:#1868c0;border-radius:1px;"><svg width="7.5" height="7.5" viewBox="0 0 10 10" style="left:0;top:0"><path d="M2 5.2 L4.2 7.3 L8 2.8" stroke="#fff" stroke-width="1.4" fill="none"/></svg></div>
<div style="left:795px;top:591.3px;width:7.5px;height:7.5px;background:#1868c0;border-radius:1px;"><svg width="7.5" height="7.5" viewBox="0 0 10 10" style="left:0;top:0"><path d="M2 5.2 L4.2 7.3 L8 2.8" stroke="#fff" stroke-width="1.4" fill="none"/></svg></div>
</body></html>
